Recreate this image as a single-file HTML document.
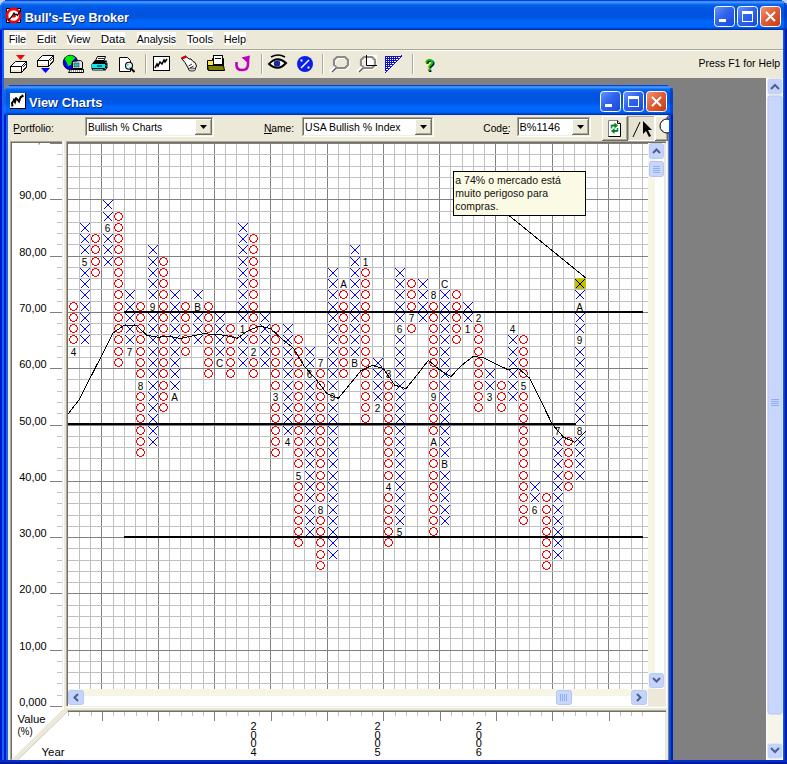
<!DOCTYPE html><html><head><meta charset="utf-8"><style>html,body{margin:0;padding:0;width:787px;height:764px;overflow:hidden;background:#808080}svg text{font-family:"Liberation Sans",sans-serif}</style></head><body><svg width="787" height="764" viewBox="0 0 787 764" style="display:block;font-family:'Liberation Sans',sans-serif"><defs><linearGradient id="gb" x1="0" y1="0" x2="1" y2="1"><stop offset="0" stop-color="#6A96FA"/><stop offset="0.45" stop-color="#2F64EE"/><stop offset="1" stop-color="#1C48D8"/></linearGradient><linearGradient id="gr" x1="0" y1="0" x2="1" y2="1"><stop offset="0" stop-color="#F0987A"/><stop offset="0.45" stop-color="#E0603A"/><stop offset="1" stop-color="#C43A10"/></linearGradient></defs><rect x="0" y="0" width="787" height="764" fill="#808080"/><rect x="0" y="0" width="787" height="1" fill="#0841D8"/><rect x="0" y="1" width="787" height="1" fill="#3A8CFD"/><rect x="0" y="2" width="787" height="1" fill="#3D95FF"/><rect x="0" y="3" width="787" height="1" fill="#1F7BF6"/><rect x="0" y="4" width="787" height="1" fill="#0A68EE"/><rect x="0" y="5" width="787" height="1" fill="#0660E9"/><rect x="0" y="6" width="787" height="1" fill="#045CE6"/><rect x="0" y="7" width="787" height="1" fill="#0058E4"/><rect x="0" y="8" width="787" height="1" fill="#0057E3"/><rect x="0" y="9" width="787" height="1" fill="#0056E2"/><rect x="0" y="10" width="787" height="1" fill="#0055E1"/><rect x="0" y="11" width="787" height="1" fill="#0054E0"/><rect x="0" y="12" width="787" height="1" fill="#0054E0"/><rect x="0" y="13" width="787" height="1" fill="#0054E0"/><rect x="0" y="14" width="787" height="1" fill="#0054E0"/><rect x="0" y="15" width="787" height="1" fill="#0054E0"/><rect x="0" y="16" width="787" height="1" fill="#0055E1"/><rect x="0" y="17" width="787" height="1" fill="#0056E3"/><rect x="0" y="18" width="787" height="1" fill="#0058E6"/><rect x="0" y="19" width="787" height="1" fill="#005EEE"/><rect x="0" y="20" width="787" height="1" fill="#0062F4"/><rect x="0" y="21" width="787" height="1" fill="#0065F9"/><rect x="0" y="22" width="787" height="1" fill="#0066FB"/><rect x="0" y="23" width="787" height="1" fill="#0066FB"/><rect x="0" y="24" width="787" height="1" fill="#0066FB"/><rect x="0" y="25" width="787" height="1" fill="#0066FB"/><rect x="0" y="26" width="787" height="1" fill="#0064F8"/><rect x="0" y="27" width="787" height="1" fill="#005CEF"/><rect x="0" y="28" width="787" height="1" fill="#0048D4"/><rect x="0" y="29" width="787" height="1" fill="#0033B0"/><rect x="0" y="0" width="5" height="1" fill="#C4D2F0"/><rect x="782" y="0" width="5" height="1" fill="#C4D2F0"/><rect x="0" y="1" width="3" height="1" fill="#C4D2F0"/><rect x="784" y="1" width="3" height="1" fill="#C4D2F0"/><rect x="0" y="2" width="2" height="1" fill="#C4D2F0"/><rect x="785" y="2" width="2" height="1" fill="#C4D2F0"/><rect x="0" y="3" width="1" height="1" fill="#C4D2F0"/><rect x="786" y="3" width="1" height="1" fill="#C4D2F0"/><rect x="0" y="4" width="1" height="1" fill="#C4D2F0"/><rect x="786" y="4" width="1" height="1" fill="#C4D2F0"/><rect x="784" y="3" width="3" height="27" fill="#0033C0" opacity="0.55"/><rect x="0" y="3" width="2" height="27" fill="#3A8CFD" opacity="0.25"/><rect x="0" y="30" width="4" height="734" fill="#0019CF"/><rect x="2" y="30" width="2" height="734" fill="#1665F0"/><rect x="783" y="30" width="4" height="734" fill="#001EA0"/><rect x="783" y="30" width="1" height="734" fill="#0A5AF0"/><rect x="784" y="30" width="1" height="734" fill="#0040E0"/><rect x="0" y="760" width="787" height="4" fill="#0030C8"/><rect x="0" y="762" width="787" height="2" fill="#0018A0"/><rect x="4" y="30" width="779" height="19" fill="#ECE9D8"/><rect x="4" y="49" width="779" height="1" fill="#ACA899"/><rect x="4" y="50" width="779" height="1" fill="#FFFFFF"/><rect x="9" y="32" width="17" height="13" fill="#FFFFFF"/><text x="8.7" y="43" font-size="11" fill="#000" textLength="17.4" lengthAdjust="spacingAndGlyphs">File</text><rect x="37" y="32" width="19" height="13" fill="#FFFFFF"/><text x="36.7" y="43" font-size="11" fill="#000" textLength="19.4" lengthAdjust="spacingAndGlyphs">Edit</text><rect x="67" y="32" width="23" height="13" fill="#FFFFFF"/><text x="66.7" y="43" font-size="11" fill="#000" textLength="23.4" lengthAdjust="spacingAndGlyphs">View</text><rect x="101" y="32" width="24" height="13" fill="#FFFFFF"/><text x="100.7" y="43" font-size="11" fill="#000" textLength="24.4" lengthAdjust="spacingAndGlyphs">Data</text><rect x="137" y="32" width="39" height="13" fill="#FFFFFF"/><text x="136.7" y="43" font-size="11" fill="#000" textLength="39.4" lengthAdjust="spacingAndGlyphs">Analysis</text><rect x="187" y="32" width="26" height="13" fill="#FFFFFF"/><text x="186.7" y="43" font-size="11" fill="#000" textLength="26.4" lengthAdjust="spacingAndGlyphs">Tools</text><rect x="224" y="32" width="22" height="13" fill="#FFFFFF"/><text x="223.7" y="43" font-size="11" fill="#000" textLength="22.4" lengthAdjust="spacingAndGlyphs">Help</text><rect x="4" y="51" width="779" height="27" fill="#ECE9D8"/><text x="698.4" y="67" font-size="11" fill="#000" textLength="81.7" lengthAdjust="spacingAndGlyphs">Press F1 for Help</text><g><path d="M16 55 L25 55 L20.5 60 Z" fill="#f00"/><path d="M10.5 66.5 L15.5 61.5 L26.5 61.5 L21.5 66.5 Z" fill="#fff" stroke="#000"/><path d="M21.5 66.5 L26.5 61.5 L26.5 67.5 L21.5 72.5 Z" fill="#fff" stroke="#000"/><rect x="10.5" y="66.5" width="11" height="6" fill="#fff" stroke="#000"/><rect x="11" y="70" width="10" height="2" fill="#F2EBC8"/><path d="M23 70 L26 67 M23 67 L26 64" stroke="#000" stroke-width="0.8"/><path d="M37.5 60.5 L42.5 55.5 L53.5 55.5 L48.5 60.5 Z" fill="#fff" stroke="#000"/><path d="M48.5 60.5 L53.5 55.5 L53.5 61.5 L48.5 66.5 Z" fill="#fff" stroke="#000"/><rect x="37.5" y="60.5" width="11" height="6" fill="#fff" stroke="#000"/><rect x="38" y="64" width="10" height="2" fill="#F2EBC8"/><path d="M50 64 L53 61 M50 61 L53 58" stroke="#000" stroke-width="0.8"/><path d="M41 68 L50 68 L45.5 73 Z" fill="#00f"/><circle cx="70.5" cy="62.5" r="7.3" fill="#0000F0" stroke="#000" stroke-width="0.8"/><path d="M64.5 59 L67 56 L72 55.5 L75.5 58 L72 61 L71 65 L68 66 L66.5 62 Z" fill="#00F000"/><path d="M72.5 68.5 L72.5 61.5 L80.5 60.5 L82.5 62 L82.5 68.5 Z" fill="#E8E8E0" stroke="#000" stroke-width="1"/><rect x="74" y="63" width="5" height="4" fill="#30B8C0" stroke="#204040" stroke-width="0.6"/><path d="M68.5 72.5 L70.5 69.5 L83.5 69.5 L83.5 72.5 Z" fill="#fff" stroke="#000" stroke-width="1"/><path d="M71 71 h11" stroke="#000" stroke-width="0.8" stroke-dasharray="1 1"/><path d="M95.5 60.5 L97.5 56.5 L105.5 56.5 L104 60.5 Z" fill="#fff" stroke="#000" stroke-width="1"/><path d="M98 58.5 h6" stroke="#000" stroke-width="0.8"/><path d="M91.5 64.5 L94.5 60.5 L106.5 60.5 L107.5 63.5 L107.5 67.5 L105.5 70.5 L92.5 70.5 L91.5 68.5 Z" fill="#000"/><rect x="92" y="64" width="13" height="4" fill="#10E8F0"/><rect x="97" y="65.5" width="5" height="1" fill="#000"/><rect x="93" y="69" width="10" height="1" fill="#10C8D0"/><path d="M105.5 62 L107 63.5 M105.5 65 L107 66.5 M104.5 68 L106 69" stroke="#10E8F0" stroke-width="1"/><path d="M119.5 57.5 L127.5 57.5 L130.5 60.5 L130.5 71.5 L119.5 71.5 Z" fill="#fff" stroke="#000"/><circle cx="129" cy="65.8" r="3.5" fill="#F4F0EC" stroke="#000" stroke-width="1.1"/><rect x="127" y="64" width="1.6" height="1.6" fill="#00E0F0"/><rect x="129" y="67" width="1.4" height="1.2" fill="#00E0F0"/><path d="M130.5 68 L134.5 72" stroke="#000" stroke-width="2"/><rect x="153.5" y="56.5" width="16" height="14" fill="#fff" stroke="#000"/><path d="M155 68 L157 64 L158 66 L160 62 L162 64 L164 60 L165 62 L167 59" stroke="#000" stroke-width="1.6" fill="none"/><path d="M181.5 58.5 L185.5 56 L189 59 L191 59 L193 61.5 L195 62.5 L196.5 66 L194.5 70 L189.5 70.5 L187.5 67 L185 62.5 Z" fill="#fff" stroke="#000" stroke-width="1"/><path d="M181 57.5 L185.5 55.5 L187 57.5 L182.5 59.5 Z" fill="#E00000"/><path d="M188.5 66 L192 64 M190 68 L193.5 66" stroke="#000" stroke-width="0.8"/><ellipse cx="192" cy="69.5" rx="3.5" ry="1.6" fill="#C8C8C8" stroke="#000" stroke-width="0.7"/><path d="M207.5 60.5 L212.5 60.5 L212.5 58.5 L223.5 58.5 L223.5 69.5 L207.5 69.5 Z" fill="#F8E830" stroke="#000"/><rect x="213.5" y="55.5" width="9" height="9" fill="#fff" stroke="#000"/><rect x="215" y="58" width="6" height="1" fill="#000"/><path d="M207.5 65.5 L223.5 65.5 L224.5 70.5 L208.5 70.5 Z" fill="#808000" stroke="#000"/><path d="M236.5 62 L236.5 65 Q236.5 70 242 70 Q248 70 248 64.5 L248 59.5" stroke="#C000C0" stroke-width="2.6" fill="none"/><path d="M250 55.5 L241.5 57.5 L248.5 63.5 Z" fill="#C000C0"/><path d="M269 64 Q277 55 286 63 Q278 72 269 64 Z" fill="#fff" stroke="#000" stroke-width="2"/><path d="M271 57 Q278 53 285 57" stroke="#000" stroke-width="1.5" fill="none"/><circle cx="277" cy="63.5" r="3.2" fill="#1A2A9A"/><circle cx="305" cy="64" r="8" fill="#0A1EE8"/><path d="M301 68 L309 60" stroke="#fff" stroke-width="1.5"/><rect x="300.5" y="59.5" width="2" height="2" fill="#fff"/><rect x="307.5" y="66.5" width="2" height="2" fill="#fff"/><path d="M338 58 L346 58 L349 61 L349 66 L346 69 L338 69 L335 66 L335 61 Z" fill="none" stroke="#fff" stroke-width="2.2"/><path d="M337 57 L345 57 L348 60 L348 65 L345 68 L337 68 L334 65 L334 60 Z" fill="none" stroke="#8A8A8A" stroke-width="2.2"/><path d="M335 67 L330 72" stroke="#fff" stroke-width="2.5"/><path d="M336 68 L332 72" stroke="#555" stroke-width="1.2"/><rect x="367" y="55" width="10" height="11" fill="#fff"/><path d="M365 58 L373 58 L376 61 L376 66 L373 69 L365 69 L362 66 L362 61 Z" fill="none" stroke="#fff" stroke-width="2.2"/><path d="M364 57 L372 57 L375 60 L375 65 L372 68 L364 68 L361 65 L361 60 Z" fill="none" stroke="#8A8A8A" stroke-width="2.2"/><path d="M362 67 L357 72" stroke="#fff" stroke-width="2.5"/><path d="M363 68 L359 72" stroke="#555" stroke-width="1.2"/><path d="M366.5 55 V65.5 H377" stroke="#000" stroke-width="1" fill="none"/><path d="M385 56 L402 56 L387 71 L385 71 Z" fill="#fff"/><path d="M385 56v15M385 56h17M387 56v13M385 58h15M389 56v11M385 60h13M391 56v9M385 62h11M393 56v7M385 64h9M395 56v5M385 66h7M397 56v3M385 68h5M399 56v1M385 70h3M401 56v-1M385 72h1" stroke="#1010C0" stroke-width="1" shape-rendering="crispEdges"/><path d="M402 56 L386 72" stroke="#1010C0" stroke-width="1"/><text x="430.5" y="72" font-size="16" font-weight="bold" fill="#000" text-anchor="middle">?</text><text x="429.5" y="71" font-size="16" font-weight="bold" fill="#00C000" text-anchor="middle">?</text></g><rect x="145" y="54" width="1" height="20" fill="#ACA899"/><rect x="146" y="54" width="1" height="20" fill="#FFFFFF"/><rect x="261" y="54" width="1" height="20" fill="#ACA899"/><rect x="262" y="54" width="1" height="20" fill="#FFFFFF"/><rect x="322" y="54" width="1" height="20" fill="#ACA899"/><rect x="323" y="54" width="1" height="20" fill="#FFFFFF"/><rect x="412" y="54" width="1" height="20" fill="#ACA899"/><rect x="413" y="54" width="1" height="20" fill="#FFFFFF"/><rect x="4" y="78" width="762" height="682" fill="#808080"/><rect x="766" y="78" width="17" height="682" fill="#FFFFFF"/><rect x="767" y="78" width="15" height="682" fill="#F7F5EA"/><rect x="768" y="79" width="14" height="15" rx="2" fill="#C3D3FD" stroke="#B6CAF7" stroke-width="0.5"/><path d="M771 89 L775 85 L779 89" stroke="#4D6185" stroke-width="2" fill="none"/><rect x="768" y="96" width="14" height="618" rx="2" fill="#C8D6FB" stroke="#B2C6F6" stroke-width="1"/><rect x="771" y="399" width="8" height="1" fill="#8FAEF5"/><rect x="771" y="401" width="8" height="1" fill="#8FAEF5"/><rect x="771" y="403" width="8" height="1" fill="#8FAEF5"/><rect x="771" y="405" width="8" height="1" fill="#8FAEF5"/><rect x="768" y="744" width="14" height="14" rx="2" fill="#C3D3FD" stroke="#B6CAF7" stroke-width="0.5"/><path d="M771 748 L775 752 L779 748" stroke="#4D6185" stroke-width="2" fill="none"/><rect x="4" y="85" width="669" height="1" fill="#0841D8"/><rect x="4" y="86" width="669" height="1" fill="#3A8CFD"/><rect x="4" y="87" width="669" height="1" fill="#3D95FF"/><rect x="4" y="88" width="669" height="1" fill="#1F7BF6"/><rect x="4" y="89" width="669" height="1" fill="#0A68EE"/><rect x="4" y="90" width="669" height="1" fill="#0660E9"/><rect x="4" y="91" width="669" height="1" fill="#045CE6"/><rect x="4" y="92" width="669" height="1" fill="#0058E4"/><rect x="4" y="93" width="669" height="1" fill="#0057E3"/><rect x="4" y="94" width="669" height="1" fill="#0056E2"/><rect x="4" y="95" width="669" height="1" fill="#0055E1"/><rect x="4" y="96" width="669" height="1" fill="#0054E0"/><rect x="4" y="97" width="669" height="1" fill="#0054E0"/><rect x="4" y="98" width="669" height="1" fill="#0054E0"/><rect x="4" y="99" width="669" height="1" fill="#0054E0"/><rect x="4" y="100" width="669" height="1" fill="#0054E0"/><rect x="4" y="101" width="669" height="1" fill="#0055E1"/><rect x="4" y="102" width="669" height="1" fill="#0056E3"/><rect x="4" y="103" width="669" height="1" fill="#0058E6"/><rect x="4" y="104" width="669" height="1" fill="#005EEE"/><rect x="4" y="105" width="669" height="1" fill="#0062F4"/><rect x="4" y="106" width="669" height="1" fill="#0065F9"/><rect x="4" y="107" width="669" height="1" fill="#0066FB"/><rect x="4" y="108" width="669" height="1" fill="#0066FB"/><rect x="4" y="109" width="669" height="1" fill="#0066FB"/><rect x="4" y="110" width="669" height="1" fill="#0066FB"/><rect x="4" y="111" width="669" height="1" fill="#0064F8"/><rect x="4" y="112" width="669" height="1" fill="#005CEF"/><rect x="4" y="113" width="669" height="1" fill="#0048D4"/><rect x="4" y="114" width="669" height="1" fill="#0033B0"/><rect x="4" y="85" width="5" height="1" fill="#808080"/><rect x="668" y="85" width="5" height="1" fill="#808080"/><rect x="4" y="86" width="3" height="1" fill="#808080"/><rect x="670" y="86" width="3" height="1" fill="#808080"/><rect x="4" y="87" width="2" height="1" fill="#808080"/><rect x="671" y="87" width="2" height="1" fill="#808080"/><rect x="4" y="88" width="1" height="1" fill="#808080"/><rect x="672" y="88" width="1" height="1" fill="#808080"/><rect x="4" y="89" width="1" height="1" fill="#808080"/><rect x="672" y="89" width="1" height="1" fill="#808080"/><rect x="670" y="88" width="3" height="27" fill="#0033C0" opacity="0.55"/><rect x="4" y="88" width="2" height="27" fill="#3A8CFD" opacity="0.25"/><rect x="4" y="115" width="4" height="645" fill="#0019CF"/><rect x="6" y="115" width="2" height="645" fill="#1665F0"/><rect x="669" y="115" width="4" height="645" fill="#0020B0"/><rect x="669" y="115" width="2" height="645" fill="#0050F0"/><rect x="8" y="115" width="660" height="645" fill="#ECE9D8"/><rect x="10" y="93" width="16" height="16" fill="#000"/><rect x="10" y="93" width="15" height="15" fill="#FFFFFF"/><path d="M12.5 106.5 L12 103 L13.5 101 L14 100 L15 102 L16 98.5 L17.5 99.5 L19 101.5 L20.5 97.5 L21.5 96.5 L23.5 96" stroke="#000" stroke-width="2" fill="none"/><path d="M14 99 v2 M16.5 97.5 v2 M20.5 96 v2 M22.5 94.5 v2.5" stroke="#000" stroke-width="1.2"/><text x="29.9" y="108" font-size="13" fill="#0A246A" font-weight="bold" textLength="73.2" lengthAdjust="spacingAndGlyphs">View Charts</text><text x="29.1" y="107" font-size="13" fill="#fff" font-weight="bold" textLength="73.2" lengthAdjust="spacingAndGlyphs">View Charts</text><rect x="600.5" y="91.5" width="20" height="20" rx="3" fill="url(#gb)" stroke="#fff" stroke-width="1"/><rect x="605" y="104" width="7" height="3" fill="#fff"/><rect x="623.5" y="91.5" width="20" height="20" rx="3" fill="url(#gb)" stroke="#fff" stroke-width="1"/><rect x="628.5" y="96.5" width="10" height="10" fill="none" stroke="#fff" stroke-width="1"/><rect x="628" y="96" width="11" height="3" fill="#fff"/><rect x="646.5" y="91.5" width="20" height="20" rx="3" fill="url(#gr)" stroke="#fff" stroke-width="1"/><path d="M652 97 L661 106 M661 97 L652 106" stroke="#fff" stroke-width="2"/><rect x="6" y="8" width="15" height="15" fill="#000"/><rect x="7" y="9" width="13" height="13" fill="#fff"/><circle cx="13.6" cy="15.5" r="6.6" fill="#fff" stroke="#f00" stroke-width="2.6"/><path d="M12 15.5 L15 14 L16 17 L12.5 18 Z" fill="#f00"/><path d="M8 21 L11.5 17 L13 14.5 L14 13 L15 15 L16 14 L17.5 15.5 L20.5 10" stroke="#000" stroke-width="1.2" fill="none"/><text x="25.6" y="23" font-size="13" fill="#0A246A" font-weight="bold" textLength="104.0" lengthAdjust="spacingAndGlyphs">Bull's-Eye Broker</text><text x="24.8" y="22" font-size="13" fill="#fff" font-weight="bold" textLength="104.1" lengthAdjust="spacingAndGlyphs">Bull's-Eye Broker</text><rect x="714.5" y="6.5" width="20" height="20" rx="3" fill="url(#gb)" stroke="#fff" stroke-width="1"/><rect x="719" y="19" width="7" height="3" fill="#fff"/><rect x="737.5" y="6.5" width="20" height="20" rx="3" fill="url(#gb)" stroke="#fff" stroke-width="1"/><rect x="742.5" y="11.5" width="10" height="10" fill="none" stroke="#fff" stroke-width="1"/><rect x="742" y="11" width="11" height="3" fill="#fff"/><rect x="760.5" y="6.5" width="20" height="20" rx="3" fill="url(#gr)" stroke="#fff" stroke-width="1"/><path d="M766 12 L775 21 M775 12 L766 21" stroke="#fff" stroke-width="2"/><text x="13.1" y="132" font-size="11" fill="#000" textLength="40.9" lengthAdjust="spacingAndGlyphs">Portfolio:</text><rect x="14" y="133" width="7" height="1" fill="#000"/><rect x="85" y="117" width="129" height="1" fill="#ACA899"/><rect x="85" y="117" width="1" height="20" fill="#ACA899"/><rect x="86" y="118" width="127" height="1" fill="#716F64"/><rect x="86" y="118" width="1" height="18" fill="#716F64"/><rect x="85" y="136" width="129" height="1" fill="#FFFFFF"/><rect x="213" y="117" width="1" height="20" fill="#FFFFFF"/><rect x="86" y="135" width="127" height="1" fill="#F1EFE2"/><rect x="212" y="118" width="1" height="18" fill="#F1EFE2"/><rect x="87" y="119" width="125" height="16" fill="#FFFFFF"/><text x="87.9" y="131" font-size="11" fill="#000" textLength="74.3" lengthAdjust="spacingAndGlyphs">Bullish % Charts</text><rect x="195" y="119" width="17" height="16" fill="#ECE9D8"/><rect x="195" y="119" width="17" height="1" fill="#FFFFFF"/><rect x="195" y="119" width="1" height="16" fill="#FFFFFF"/><rect x="195" y="134" width="17" height="1" fill="#716F64"/><rect x="211" y="119" width="1" height="16" fill="#716F64"/><rect x="196" y="133" width="15" height="1" fill="#ACA899"/><rect x="210" y="120" width="1" height="14" fill="#ACA899"/><path d="M200 125 L207 125 L203.5 129 Z" fill="#000"/><text x="263.9" y="132" font-size="11" fill="#000" textLength="30.2" lengthAdjust="spacingAndGlyphs">Name:</text><rect x="264" y="133" width="8" height="1" fill="#000"/><rect x="302" y="117" width="132" height="1" fill="#ACA899"/><rect x="302" y="117" width="1" height="20" fill="#ACA899"/><rect x="303" y="118" width="130" height="1" fill="#716F64"/><rect x="303" y="118" width="1" height="18" fill="#716F64"/><rect x="302" y="136" width="132" height="1" fill="#FFFFFF"/><rect x="433" y="117" width="1" height="20" fill="#FFFFFF"/><rect x="303" y="135" width="130" height="1" fill="#F1EFE2"/><rect x="432" y="118" width="1" height="18" fill="#F1EFE2"/><rect x="304" y="119" width="128" height="16" fill="#FFFFFF"/><text x="305.1" y="131" font-size="11" fill="#000" textLength="95.5" lengthAdjust="spacingAndGlyphs">USA Bullish % Index</text><rect x="415" y="119" width="17" height="16" fill="#ECE9D8"/><rect x="415" y="119" width="17" height="1" fill="#FFFFFF"/><rect x="415" y="119" width="1" height="16" fill="#FFFFFF"/><rect x="415" y="134" width="17" height="1" fill="#716F64"/><rect x="431" y="119" width="1" height="16" fill="#716F64"/><rect x="416" y="133" width="15" height="1" fill="#ACA899"/><rect x="430" y="120" width="1" height="14" fill="#ACA899"/><path d="M420 125 L427 125 L423.5 129 Z" fill="#000"/><text x="483.3" y="132" font-size="11" fill="#000" textLength="27.3" lengthAdjust="spacingAndGlyphs">Code:</text><rect x="503" y="133" width="6" height="1" fill="#000"/><rect x="517" y="117" width="74" height="1" fill="#ACA899"/><rect x="517" y="117" width="1" height="20" fill="#ACA899"/><rect x="518" y="118" width="72" height="1" fill="#716F64"/><rect x="518" y="118" width="1" height="18" fill="#716F64"/><rect x="517" y="136" width="74" height="1" fill="#FFFFFF"/><rect x="590" y="117" width="1" height="20" fill="#FFFFFF"/><rect x="518" y="135" width="72" height="1" fill="#F1EFE2"/><rect x="589" y="118" width="1" height="18" fill="#F1EFE2"/><rect x="519" y="119" width="70" height="16" fill="#FFFFFF"/><text x="519.5" y="131" font-size="11" fill="#000" textLength="40.6" lengthAdjust="spacingAndGlyphs">B%1146</text><rect x="572" y="119" width="17" height="16" fill="#ECE9D8"/><rect x="572" y="119" width="17" height="1" fill="#FFFFFF"/><rect x="572" y="119" width="1" height="16" fill="#FFFFFF"/><rect x="572" y="134" width="17" height="1" fill="#716F64"/><rect x="588" y="119" width="1" height="16" fill="#716F64"/><rect x="573" y="133" width="15" height="1" fill="#ACA899"/><rect x="587" y="120" width="1" height="14" fill="#ACA899"/><path d="M577 125 L584 125 L580.5 129 Z" fill="#000"/><rect x="602" y="116" width="26" height="25" fill="#ECE9D8"/><rect x="602" y="116" width="26" height="1" fill="#FFFFFF"/><rect x="602" y="116" width="1" height="25" fill="#FFFFFF"/><rect x="602" y="140" width="26" height="1" fill="#716F64"/><rect x="627" y="116" width="1" height="25" fill="#716F64"/><rect x="603" y="139" width="24" height="1" fill="#ACA899"/><rect x="626" y="117" width="1" height="23" fill="#ACA899"/><path d="M608.5 136.5 L608.5 120.5 L617.5 120.5 L620.5 123.5 L620.5 136.5 Z" fill="#fff" stroke="#808080"/><path d="M620.5 123.5 L620.5 136.5 L608.5 136.5" stroke="#000" fill="none"/><path d="M617.5 120.5 L617.5 123.5 L620.5 123.5" stroke="#000" fill="none"/><path d="M611.5 128.5 V125.5 H615" stroke="#10808A" stroke-width="1.6" fill="none"/><path d="M614.5 122.5 L618 125.5 L614.5 128.5 Z" fill="#008800"/><rect x="612" y="124.6" width="3" height="1.8" fill="#008800"/><path d="M617.5 128 V131 H614" stroke="#10808A" stroke-width="1.6" fill="none"/><path d="M614.5 128 L611 131 L614.5 134 Z" fill="#008800"/><rect x="614" y="130.1" width="3" height="1.8" fill="#008800"/><rect x="628" y="116" width="27" height="25" fill="#E6E3D3"/><rect x="628" y="116" width="27" height="1" fill="#ACA899"/><rect x="628" y="116" width="1" height="25" fill="#ACA899"/><rect x="628" y="140" width="27" height="1" fill="#fff"/><rect x="654" y="116" width="1" height="25" fill="#fff"/><path d="M633 137 L640 122" stroke="#000" stroke-width="1"/><path d="M643 121 L643 134 L646 131 L649 137 L651 136 L648 130 L652 130 Z" fill="#000"/><rect x="655" y="116" width="13" height="25" fill="#ECE9D8"/><rect x="655" y="116" width="13" height="1" fill="#FFFFFF"/><rect x="655" y="116" width="1" height="25" fill="#FFFFFF"/><rect x="655" y="140" width="13" height="1" fill="#716F64"/><rect x="667" y="116" width="1" height="25" fill="#716F64"/><rect x="656" y="139" width="11" height="1" fill="#ACA899"/><rect x="666" y="117" width="1" height="23" fill="#ACA899"/><clipPath id="cbtn"><rect x="655" y="115" width="14" height="30"/></clipPath><circle cx="667" cy="126" r="7" fill="#fff" stroke="#000" clip-path="url(#cbtn)"/><rect x="669" y="115" width="4" height="30" fill="#0050F0"/><rect x="671" y="115" width="2" height="30" fill="#0020B0"/><rect x="10" y="141" width="52" height="619" fill="#FFFFFF"/><rect x="10" y="141" width="52" height="1" fill="#ACA899"/><rect x="10" y="141" width="1" height="619" fill="#ACA899"/><rect x="11" y="142" width="51" height="1" fill="#716F64"/><rect x="11" y="142" width="1" height="618" fill="#716F64"/><rect x="62" y="141" width="1" height="569" fill="#F1EFE2"/><rect x="63" y="141" width="1" height="569" fill="#FFFFFF"/><rect x="12" y="712" width="653" height="48" fill="#FFFFFF"/><rect x="66" y="710" width="600" height="1" fill="#ACA899"/><rect x="67" y="711" width="599" height="1" fill="#716F64"/><rect x="66" y="141" width="601" height="1" fill="#ACA899"/><rect x="66" y="141" width="1" height="565" fill="#ACA899"/><rect x="67" y="142" width="600" height="1" fill="#716F64"/><rect x="67" y="142" width="1" height="564" fill="#716F64"/><rect x="64" y="706" width="4" height="4" fill="#ECE9D8"/><rect x="666" y="141" width="1" height="567" fill="#FFFFFF"/><rect x="66" y="706" width="600" height="1" fill="#F1EFE2"/><rect x="66" y="707" width="601" height="1" fill="#FFFFFF"/><rect x="665" y="143" width="1" height="563" fill="#F1EFE2"/><polygon points="62,710 68,710 17,760 11,760" fill="#ECE9D8"/><path d="M68 711 L17.5 760" stroke="#C9C5B2" stroke-width="1"/><rect x="68" y="143" width="580" height="546" fill="#FFFFFF"/><g><rect x="79" y="143" width="1" height="546" fill="#C0C0C0"/><rect x="90" y="143" width="1" height="546" fill="#C0C0C0"/><rect x="101" y="143" width="1" height="546" fill="#808080"/><rect x="113" y="143" width="1" height="546" fill="#C0C0C0"/><rect x="124" y="143" width="1" height="546" fill="#C0C0C0"/><rect x="135" y="143" width="1" height="546" fill="#C0C0C0"/><rect x="146" y="143" width="1" height="546" fill="#C0C0C0"/><rect x="158" y="143" width="1" height="546" fill="#808080"/><rect x="169" y="143" width="1" height="546" fill="#C0C0C0"/><rect x="180" y="143" width="1" height="546" fill="#C0C0C0"/><rect x="191" y="143" width="1" height="546" fill="#C0C0C0"/><rect x="203" y="143" width="1" height="546" fill="#C0C0C0"/><rect x="214" y="143" width="1" height="546" fill="#808080"/><rect x="225" y="143" width="1" height="546" fill="#C0C0C0"/><rect x="236" y="143" width="1" height="546" fill="#C0C0C0"/><rect x="248" y="143" width="1" height="546" fill="#C0C0C0"/><rect x="259" y="143" width="1" height="546" fill="#C0C0C0"/><rect x="270" y="143" width="1" height="546" fill="#808080"/><rect x="282" y="143" width="1" height="546" fill="#C0C0C0"/><rect x="293" y="143" width="1" height="546" fill="#C0C0C0"/><rect x="304" y="143" width="1" height="546" fill="#C0C0C0"/><rect x="315" y="143" width="1" height="546" fill="#C0C0C0"/><rect x="327" y="143" width="1" height="546" fill="#808080"/><rect x="338" y="143" width="1" height="546" fill="#C0C0C0"/><rect x="349" y="143" width="1" height="546" fill="#C0C0C0"/><rect x="360" y="143" width="1" height="546" fill="#C0C0C0"/><rect x="372" y="143" width="1" height="546" fill="#C0C0C0"/><rect x="383" y="143" width="1" height="546" fill="#808080"/><rect x="394" y="143" width="1" height="546" fill="#C0C0C0"/><rect x="405" y="143" width="1" height="546" fill="#C0C0C0"/><rect x="417" y="143" width="1" height="546" fill="#C0C0C0"/><rect x="428" y="143" width="1" height="546" fill="#C0C0C0"/><rect x="439" y="143" width="1" height="546" fill="#808080"/><rect x="450" y="143" width="1" height="546" fill="#C0C0C0"/><rect x="462" y="143" width="1" height="546" fill="#C0C0C0"/><rect x="473" y="143" width="1" height="546" fill="#C0C0C0"/><rect x="484" y="143" width="1" height="546" fill="#C0C0C0"/><rect x="495" y="143" width="1" height="546" fill="#808080"/><rect x="507" y="143" width="1" height="546" fill="#C0C0C0"/><rect x="518" y="143" width="1" height="546" fill="#C0C0C0"/><rect x="529" y="143" width="1" height="546" fill="#C0C0C0"/><rect x="540" y="143" width="1" height="546" fill="#C0C0C0"/><rect x="552" y="143" width="1" height="546" fill="#808080"/><rect x="563" y="143" width="1" height="546" fill="#C0C0C0"/><rect x="574" y="143" width="1" height="546" fill="#C0C0C0"/><rect x="585" y="143" width="1" height="546" fill="#C0C0C0"/><rect x="597" y="143" width="1" height="546" fill="#C0C0C0"/><rect x="608" y="143" width="1" height="546" fill="#808080"/><rect x="619" y="143" width="1" height="546" fill="#C0C0C0"/><rect x="631" y="143" width="1" height="546" fill="#C0C0C0"/><rect x="642" y="143" width="1" height="546" fill="#C0C0C0"/><rect x="68" y="143" width="580" height="1" fill="#808080"/><rect x="68" y="154" width="580" height="1" fill="#C0C0C0"/><rect x="68" y="166" width="580" height="1" fill="#C0C0C0"/><rect x="68" y="177" width="580" height="1" fill="#C0C0C0"/><rect x="68" y="188" width="580" height="1" fill="#C0C0C0"/><rect x="68" y="199" width="580" height="1" fill="#808080"/><rect x="68" y="211" width="580" height="1" fill="#C0C0C0"/><rect x="68" y="222" width="580" height="1" fill="#C0C0C0"/><rect x="68" y="233" width="580" height="1" fill="#C0C0C0"/><rect x="68" y="244" width="580" height="1" fill="#C0C0C0"/><rect x="68" y="256" width="580" height="1" fill="#808080"/><rect x="68" y="267" width="580" height="1" fill="#C0C0C0"/><rect x="68" y="278" width="580" height="1" fill="#C0C0C0"/><rect x="68" y="289" width="580" height="1" fill="#C0C0C0"/><rect x="68" y="301" width="580" height="1" fill="#C0C0C0"/><rect x="68" y="312" width="580" height="1" fill="#808080"/><rect x="68" y="323" width="580" height="1" fill="#C0C0C0"/><rect x="68" y="334" width="580" height="1" fill="#C0C0C0"/><rect x="68" y="346" width="580" height="1" fill="#C0C0C0"/><rect x="68" y="357" width="580" height="1" fill="#C0C0C0"/><rect x="68" y="368" width="580" height="1" fill="#808080"/><rect x="68" y="379" width="580" height="1" fill="#C0C0C0"/><rect x="68" y="391" width="580" height="1" fill="#C0C0C0"/><rect x="68" y="402" width="580" height="1" fill="#C0C0C0"/><rect x="68" y="413" width="580" height="1" fill="#C0C0C0"/><rect x="68" y="425" width="580" height="1" fill="#808080"/><rect x="68" y="436" width="580" height="1" fill="#C0C0C0"/><rect x="68" y="447" width="580" height="1" fill="#C0C0C0"/><rect x="68" y="458" width="580" height="1" fill="#C0C0C0"/><rect x="68" y="470" width="580" height="1" fill="#C0C0C0"/><rect x="68" y="481" width="580" height="1" fill="#808080"/><rect x="68" y="492" width="580" height="1" fill="#C0C0C0"/><rect x="68" y="503" width="580" height="1" fill="#C0C0C0"/><rect x="68" y="515" width="580" height="1" fill="#C0C0C0"/><rect x="68" y="526" width="580" height="1" fill="#C0C0C0"/><rect x="68" y="537" width="580" height="1" fill="#808080"/><rect x="68" y="548" width="580" height="1" fill="#C0C0C0"/><rect x="68" y="560" width="580" height="1" fill="#C0C0C0"/><rect x="68" y="571" width="580" height="1" fill="#C0C0C0"/><rect x="68" y="582" width="580" height="1" fill="#C0C0C0"/><rect x="68" y="593" width="580" height="1" fill="#808080"/><rect x="68" y="605" width="580" height="1" fill="#C0C0C0"/><rect x="68" y="616" width="580" height="1" fill="#C0C0C0"/><rect x="68" y="627" width="580" height="1" fill="#C0C0C0"/><rect x="68" y="638" width="580" height="1" fill="#C0C0C0"/><rect x="68" y="650" width="580" height="1" fill="#808080"/><rect x="68" y="661" width="580" height="1" fill="#C0C0C0"/><rect x="68" y="672" width="580" height="1" fill="#C0C0C0"/><rect x="68" y="683" width="580" height="1" fill="#C0C0C0"/></g><defs><clipPath id="cy"><rect x="12" y="143" width="50" height="617"/></clipPath><clipPath id="cc"><rect x="68" y="143" width="580" height="546"/></clipPath></defs><g clip-path="url(#cc)"><path d="M80 335h1v1h-1zM89 335h1v1h-1zM81 336h1v1h-1zM88 336h1v1h-1zM82 337h1v1h-1zM87 337h1v1h-1zM83 338h1v1h-1zM86 338h1v1h-1zM84 339h2v1h-2zM84 340h2v1h-2zM83 341h1v1h-1zM86 341h1v1h-1zM82 342h1v1h-1zM87 342h1v1h-1zM81 343h1v1h-1zM88 343h1v1h-1zM80 324h1v1h-1zM89 324h1v1h-1zM81 325h1v1h-1zM88 325h1v1h-1zM82 326h1v1h-1zM87 326h1v1h-1zM83 327h1v1h-1zM86 327h1v1h-1zM84 328h2v1h-2zM84 329h2v1h-2zM83 330h1v1h-1zM86 330h1v1h-1zM82 331h1v1h-1zM87 331h1v1h-1zM81 332h1v1h-1zM88 332h1v1h-1zM80 313h1v1h-1zM89 313h1v1h-1zM81 314h1v1h-1zM88 314h1v1h-1zM82 315h1v1h-1zM87 315h1v1h-1zM83 316h1v1h-1zM86 316h1v1h-1zM84 317h2v1h-2zM84 318h2v1h-2zM83 319h1v1h-1zM86 319h1v1h-1zM82 320h1v1h-1zM87 320h1v1h-1zM81 321h1v1h-1zM88 321h1v1h-1zM80 302h1v1h-1zM89 302h1v1h-1zM81 303h1v1h-1zM88 303h1v1h-1zM82 304h1v1h-1zM87 304h1v1h-1zM83 305h1v1h-1zM86 305h1v1h-1zM84 306h2v1h-2zM84 307h2v1h-2zM83 308h1v1h-1zM86 308h1v1h-1zM82 309h1v1h-1zM87 309h1v1h-1zM81 310h1v1h-1zM88 310h1v1h-1zM80 290h1v1h-1zM89 290h1v1h-1zM81 291h1v1h-1zM88 291h1v1h-1zM82 292h1v1h-1zM87 292h1v1h-1zM83 293h1v1h-1zM86 293h1v1h-1zM84 294h2v1h-2zM84 295h2v1h-2zM83 296h1v1h-1zM86 296h1v1h-1zM82 297h1v1h-1zM87 297h1v1h-1zM81 298h1v1h-1zM88 298h1v1h-1zM80 279h1v1h-1zM89 279h1v1h-1zM81 280h1v1h-1zM88 280h1v1h-1zM82 281h1v1h-1zM87 281h1v1h-1zM83 282h1v1h-1zM86 282h1v1h-1zM84 283h2v1h-2zM84 284h2v1h-2zM83 285h1v1h-1zM86 285h1v1h-1zM82 286h1v1h-1zM87 286h1v1h-1zM81 287h1v1h-1zM88 287h1v1h-1zM80 268h1v1h-1zM89 268h1v1h-1zM81 269h1v1h-1zM88 269h1v1h-1zM82 270h1v1h-1zM87 270h1v1h-1zM83 271h1v1h-1zM86 271h1v1h-1zM84 272h2v1h-2zM84 273h2v1h-2zM83 274h1v1h-1zM86 274h1v1h-1zM82 275h1v1h-1zM87 275h1v1h-1zM81 276h1v1h-1zM88 276h1v1h-1zM80 245h1v1h-1zM89 245h1v1h-1zM81 246h1v1h-1zM88 246h1v1h-1zM82 247h1v1h-1zM87 247h1v1h-1zM83 248h1v1h-1zM86 248h1v1h-1zM84 249h2v1h-2zM84 250h2v1h-2zM83 251h1v1h-1zM86 251h1v1h-1zM82 252h1v1h-1zM87 252h1v1h-1zM81 253h1v1h-1zM88 253h1v1h-1zM80 234h1v1h-1zM89 234h1v1h-1zM81 235h1v1h-1zM88 235h1v1h-1zM82 236h1v1h-1zM87 236h1v1h-1zM83 237h1v1h-1zM86 237h1v1h-1zM84 238h2v1h-2zM84 239h2v1h-2zM83 240h1v1h-1zM86 240h1v1h-1zM82 241h1v1h-1zM87 241h1v1h-1zM81 242h1v1h-1zM88 242h1v1h-1zM80 223h1v1h-1zM89 223h1v1h-1zM81 224h1v1h-1zM88 224h1v1h-1zM82 225h1v1h-1zM87 225h1v1h-1zM83 226h1v1h-1zM86 226h1v1h-1zM84 227h2v1h-2zM84 228h2v1h-2zM83 229h1v1h-1zM86 229h1v1h-1zM82 230h1v1h-1zM87 230h1v1h-1zM81 231h1v1h-1zM88 231h1v1h-1zM103 257h1v1h-1zM112 257h1v1h-1zM104 258h1v1h-1zM111 258h1v1h-1zM105 259h1v1h-1zM110 259h1v1h-1zM106 260h1v1h-1zM109 260h1v1h-1zM107 261h2v1h-2zM107 262h2v1h-2zM106 263h1v1h-1zM109 263h1v1h-1zM105 264h1v1h-1zM110 264h1v1h-1zM104 265h1v1h-1zM111 265h1v1h-1zM103 245h1v1h-1zM112 245h1v1h-1zM104 246h1v1h-1zM111 246h1v1h-1zM105 247h1v1h-1zM110 247h1v1h-1zM106 248h1v1h-1zM109 248h1v1h-1zM107 249h2v1h-2zM107 250h2v1h-2zM106 251h1v1h-1zM109 251h1v1h-1zM105 252h1v1h-1zM110 252h1v1h-1zM104 253h1v1h-1zM111 253h1v1h-1zM103 234h1v1h-1zM112 234h1v1h-1zM104 235h1v1h-1zM111 235h1v1h-1zM105 236h1v1h-1zM110 236h1v1h-1zM106 237h1v1h-1zM109 237h1v1h-1zM107 238h2v1h-2zM107 239h2v1h-2zM106 240h1v1h-1zM109 240h1v1h-1zM105 241h1v1h-1zM110 241h1v1h-1zM104 242h1v1h-1zM111 242h1v1h-1zM103 212h1v1h-1zM112 212h1v1h-1zM104 213h1v1h-1zM111 213h1v1h-1zM105 214h1v1h-1zM110 214h1v1h-1zM106 215h1v1h-1zM109 215h1v1h-1zM107 216h2v1h-2zM107 217h2v1h-2zM106 218h1v1h-1zM109 218h1v1h-1zM105 219h1v1h-1zM110 219h1v1h-1zM104 220h1v1h-1zM111 220h1v1h-1zM103 200h1v1h-1zM112 200h1v1h-1zM104 201h1v1h-1zM111 201h1v1h-1zM105 202h1v1h-1zM110 202h1v1h-1zM106 203h1v1h-1zM109 203h1v1h-1zM107 204h2v1h-2zM107 205h2v1h-2zM106 206h1v1h-1zM109 206h1v1h-1zM105 207h1v1h-1zM110 207h1v1h-1zM104 208h1v1h-1zM111 208h1v1h-1zM125 335h1v1h-1zM134 335h1v1h-1zM126 336h1v1h-1zM133 336h1v1h-1zM127 337h1v1h-1zM132 337h1v1h-1zM128 338h1v1h-1zM131 338h1v1h-1zM129 339h2v1h-2zM129 340h2v1h-2zM128 341h1v1h-1zM131 341h1v1h-1zM127 342h1v1h-1zM132 342h1v1h-1zM126 343h1v1h-1zM133 343h1v1h-1zM125 324h1v1h-1zM134 324h1v1h-1zM126 325h1v1h-1zM133 325h1v1h-1zM127 326h1v1h-1zM132 326h1v1h-1zM128 327h1v1h-1zM131 327h1v1h-1zM129 328h2v1h-2zM129 329h2v1h-2zM128 330h1v1h-1zM131 330h1v1h-1zM127 331h1v1h-1zM132 331h1v1h-1zM126 332h1v1h-1zM133 332h1v1h-1zM125 313h1v1h-1zM134 313h1v1h-1zM126 314h1v1h-1zM133 314h1v1h-1zM127 315h1v1h-1zM132 315h1v1h-1zM128 316h1v1h-1zM131 316h1v1h-1zM129 317h2v1h-2zM129 318h2v1h-2zM128 319h1v1h-1zM131 319h1v1h-1zM127 320h1v1h-1zM132 320h1v1h-1zM126 321h1v1h-1zM133 321h1v1h-1zM125 302h1v1h-1zM134 302h1v1h-1zM126 303h1v1h-1zM133 303h1v1h-1zM127 304h1v1h-1zM132 304h1v1h-1zM128 305h1v1h-1zM131 305h1v1h-1zM129 306h2v1h-2zM129 307h2v1h-2zM128 308h1v1h-1zM131 308h1v1h-1zM127 309h1v1h-1zM132 309h1v1h-1zM126 310h1v1h-1zM133 310h1v1h-1zM125 290h1v1h-1zM134 290h1v1h-1zM126 291h1v1h-1zM133 291h1v1h-1zM127 292h1v1h-1zM132 292h1v1h-1zM128 293h1v1h-1zM131 293h1v1h-1zM129 294h2v1h-2zM129 295h2v1h-2zM128 296h1v1h-1zM131 296h1v1h-1zM127 297h1v1h-1zM132 297h1v1h-1zM126 298h1v1h-1zM133 298h1v1h-1zM148 437h1v1h-1zM157 437h1v1h-1zM149 438h1v1h-1zM156 438h1v1h-1zM150 439h1v1h-1zM155 439h1v1h-1zM151 440h1v1h-1zM154 440h1v1h-1zM152 441h2v1h-2zM152 442h2v1h-2zM151 443h1v1h-1zM154 443h1v1h-1zM150 444h1v1h-1zM155 444h1v1h-1zM149 445h1v1h-1zM156 445h1v1h-1zM148 426h1v1h-1zM157 426h1v1h-1zM149 427h1v1h-1zM156 427h1v1h-1zM150 428h1v1h-1zM155 428h1v1h-1zM151 429h1v1h-1zM154 429h1v1h-1zM152 430h2v1h-2zM152 431h2v1h-2zM151 432h1v1h-1zM154 432h1v1h-1zM150 433h1v1h-1zM155 433h1v1h-1zM149 434h1v1h-1zM156 434h1v1h-1zM148 414h1v1h-1zM157 414h1v1h-1zM149 415h1v1h-1zM156 415h1v1h-1zM150 416h1v1h-1zM155 416h1v1h-1zM151 417h1v1h-1zM154 417h1v1h-1zM152 418h2v1h-2zM152 419h2v1h-2zM151 420h1v1h-1zM154 420h1v1h-1zM150 421h1v1h-1zM155 421h1v1h-1zM149 422h1v1h-1zM156 422h1v1h-1zM148 403h1v1h-1zM157 403h1v1h-1zM149 404h1v1h-1zM156 404h1v1h-1zM150 405h1v1h-1zM155 405h1v1h-1zM151 406h1v1h-1zM154 406h1v1h-1zM152 407h2v1h-2zM152 408h2v1h-2zM151 409h1v1h-1zM154 409h1v1h-1zM150 410h1v1h-1zM155 410h1v1h-1zM149 411h1v1h-1zM156 411h1v1h-1zM148 392h1v1h-1zM157 392h1v1h-1zM149 393h1v1h-1zM156 393h1v1h-1zM150 394h1v1h-1zM155 394h1v1h-1zM151 395h1v1h-1zM154 395h1v1h-1zM152 396h2v1h-2zM152 397h2v1h-2zM151 398h1v1h-1zM154 398h1v1h-1zM150 399h1v1h-1zM155 399h1v1h-1zM149 400h1v1h-1zM156 400h1v1h-1zM148 381h1v1h-1zM157 381h1v1h-1zM149 382h1v1h-1zM156 382h1v1h-1zM150 383h1v1h-1zM155 383h1v1h-1zM151 384h1v1h-1zM154 384h1v1h-1zM152 385h2v1h-2zM152 386h2v1h-2zM151 387h1v1h-1zM154 387h1v1h-1zM150 388h1v1h-1zM155 388h1v1h-1zM149 389h1v1h-1zM156 389h1v1h-1zM148 369h1v1h-1zM157 369h1v1h-1zM149 370h1v1h-1zM156 370h1v1h-1zM150 371h1v1h-1zM155 371h1v1h-1zM151 372h1v1h-1zM154 372h1v1h-1zM152 373h2v1h-2zM152 374h2v1h-2zM151 375h1v1h-1zM154 375h1v1h-1zM150 376h1v1h-1zM155 376h1v1h-1zM149 377h1v1h-1zM156 377h1v1h-1zM148 358h1v1h-1zM157 358h1v1h-1zM149 359h1v1h-1zM156 359h1v1h-1zM150 360h1v1h-1zM155 360h1v1h-1zM151 361h1v1h-1zM154 361h1v1h-1zM152 362h2v1h-2zM152 363h2v1h-2zM151 364h1v1h-1zM154 364h1v1h-1zM150 365h1v1h-1zM155 365h1v1h-1zM149 366h1v1h-1zM156 366h1v1h-1zM148 347h1v1h-1zM157 347h1v1h-1zM149 348h1v1h-1zM156 348h1v1h-1zM150 349h1v1h-1zM155 349h1v1h-1zM151 350h1v1h-1zM154 350h1v1h-1zM152 351h2v1h-2zM152 352h2v1h-2zM151 353h1v1h-1zM154 353h1v1h-1zM150 354h1v1h-1zM155 354h1v1h-1zM149 355h1v1h-1zM156 355h1v1h-1zM148 335h1v1h-1zM157 335h1v1h-1zM149 336h1v1h-1zM156 336h1v1h-1zM150 337h1v1h-1zM155 337h1v1h-1zM151 338h1v1h-1zM154 338h1v1h-1zM152 339h2v1h-2zM152 340h2v1h-2zM151 341h1v1h-1zM154 341h1v1h-1zM150 342h1v1h-1zM155 342h1v1h-1zM149 343h1v1h-1zM156 343h1v1h-1zM148 324h1v1h-1zM157 324h1v1h-1zM149 325h1v1h-1zM156 325h1v1h-1zM150 326h1v1h-1zM155 326h1v1h-1zM151 327h1v1h-1zM154 327h1v1h-1zM152 328h2v1h-2zM152 329h2v1h-2zM151 330h1v1h-1zM154 330h1v1h-1zM150 331h1v1h-1zM155 331h1v1h-1zM149 332h1v1h-1zM156 332h1v1h-1zM148 313h1v1h-1zM157 313h1v1h-1zM149 314h1v1h-1zM156 314h1v1h-1zM150 315h1v1h-1zM155 315h1v1h-1zM151 316h1v1h-1zM154 316h1v1h-1zM152 317h2v1h-2zM152 318h2v1h-2zM151 319h1v1h-1zM154 319h1v1h-1zM150 320h1v1h-1zM155 320h1v1h-1zM149 321h1v1h-1zM156 321h1v1h-1zM148 290h1v1h-1zM157 290h1v1h-1zM149 291h1v1h-1zM156 291h1v1h-1zM150 292h1v1h-1zM155 292h1v1h-1zM151 293h1v1h-1zM154 293h1v1h-1zM152 294h2v1h-2zM152 295h2v1h-2zM151 296h1v1h-1zM154 296h1v1h-1zM150 297h1v1h-1zM155 297h1v1h-1zM149 298h1v1h-1zM156 298h1v1h-1zM148 279h1v1h-1zM157 279h1v1h-1zM149 280h1v1h-1zM156 280h1v1h-1zM150 281h1v1h-1zM155 281h1v1h-1zM151 282h1v1h-1zM154 282h1v1h-1zM152 283h2v1h-2zM152 284h2v1h-2zM151 285h1v1h-1zM154 285h1v1h-1zM150 286h1v1h-1zM155 286h1v1h-1zM149 287h1v1h-1zM156 287h1v1h-1zM148 268h1v1h-1zM157 268h1v1h-1zM149 269h1v1h-1zM156 269h1v1h-1zM150 270h1v1h-1zM155 270h1v1h-1zM151 271h1v1h-1zM154 271h1v1h-1zM152 272h2v1h-2zM152 273h2v1h-2zM151 274h1v1h-1zM154 274h1v1h-1zM150 275h1v1h-1zM155 275h1v1h-1zM149 276h1v1h-1zM156 276h1v1h-1zM148 257h1v1h-1zM157 257h1v1h-1zM149 258h1v1h-1zM156 258h1v1h-1zM150 259h1v1h-1zM155 259h1v1h-1zM151 260h1v1h-1zM154 260h1v1h-1zM152 261h2v1h-2zM152 262h2v1h-2zM151 263h1v1h-1zM154 263h1v1h-1zM150 264h1v1h-1zM155 264h1v1h-1zM149 265h1v1h-1zM156 265h1v1h-1zM148 245h1v1h-1zM157 245h1v1h-1zM149 246h1v1h-1zM156 246h1v1h-1zM150 247h1v1h-1zM155 247h1v1h-1zM151 248h1v1h-1zM154 248h1v1h-1zM152 249h2v1h-2zM152 250h2v1h-2zM151 251h1v1h-1zM154 251h1v1h-1zM150 252h1v1h-1zM155 252h1v1h-1zM149 253h1v1h-1zM156 253h1v1h-1zM170 381h1v1h-1zM179 381h1v1h-1zM171 382h1v1h-1zM178 382h1v1h-1zM172 383h1v1h-1zM177 383h1v1h-1zM173 384h1v1h-1zM176 384h1v1h-1zM174 385h2v1h-2zM174 386h2v1h-2zM173 387h1v1h-1zM176 387h1v1h-1zM172 388h1v1h-1zM177 388h1v1h-1zM171 389h1v1h-1zM178 389h1v1h-1zM170 369h1v1h-1zM179 369h1v1h-1zM171 370h1v1h-1zM178 370h1v1h-1zM172 371h1v1h-1zM177 371h1v1h-1zM173 372h1v1h-1zM176 372h1v1h-1zM174 373h2v1h-2zM174 374h2v1h-2zM173 375h1v1h-1zM176 375h1v1h-1zM172 376h1v1h-1zM177 376h1v1h-1zM171 377h1v1h-1zM178 377h1v1h-1zM170 358h1v1h-1zM179 358h1v1h-1zM171 359h1v1h-1zM178 359h1v1h-1zM172 360h1v1h-1zM177 360h1v1h-1zM173 361h1v1h-1zM176 361h1v1h-1zM174 362h2v1h-2zM174 363h2v1h-2zM173 364h1v1h-1zM176 364h1v1h-1zM172 365h1v1h-1zM177 365h1v1h-1zM171 366h1v1h-1zM178 366h1v1h-1zM170 347h1v1h-1zM179 347h1v1h-1zM171 348h1v1h-1zM178 348h1v1h-1zM172 349h1v1h-1zM177 349h1v1h-1zM173 350h1v1h-1zM176 350h1v1h-1zM174 351h2v1h-2zM174 352h2v1h-2zM173 353h1v1h-1zM176 353h1v1h-1zM172 354h1v1h-1zM177 354h1v1h-1zM171 355h1v1h-1zM178 355h1v1h-1zM170 335h1v1h-1zM179 335h1v1h-1zM171 336h1v1h-1zM178 336h1v1h-1zM172 337h1v1h-1zM177 337h1v1h-1zM173 338h1v1h-1zM176 338h1v1h-1zM174 339h2v1h-2zM174 340h2v1h-2zM173 341h1v1h-1zM176 341h1v1h-1zM172 342h1v1h-1zM177 342h1v1h-1zM171 343h1v1h-1zM178 343h1v1h-1zM170 324h1v1h-1zM179 324h1v1h-1zM171 325h1v1h-1zM178 325h1v1h-1zM172 326h1v1h-1zM177 326h1v1h-1zM173 327h1v1h-1zM176 327h1v1h-1zM174 328h2v1h-2zM174 329h2v1h-2zM173 330h1v1h-1zM176 330h1v1h-1zM172 331h1v1h-1zM177 331h1v1h-1zM171 332h1v1h-1zM178 332h1v1h-1zM170 313h1v1h-1zM179 313h1v1h-1zM171 314h1v1h-1zM178 314h1v1h-1zM172 315h1v1h-1zM177 315h1v1h-1zM173 316h1v1h-1zM176 316h1v1h-1zM174 317h2v1h-2zM174 318h2v1h-2zM173 319h1v1h-1zM176 319h1v1h-1zM172 320h1v1h-1zM177 320h1v1h-1zM171 321h1v1h-1zM178 321h1v1h-1zM170 302h1v1h-1zM179 302h1v1h-1zM171 303h1v1h-1zM178 303h1v1h-1zM172 304h1v1h-1zM177 304h1v1h-1zM173 305h1v1h-1zM176 305h1v1h-1zM174 306h2v1h-2zM174 307h2v1h-2zM173 308h1v1h-1zM176 308h1v1h-1zM172 309h1v1h-1zM177 309h1v1h-1zM171 310h1v1h-1zM178 310h1v1h-1zM170 290h1v1h-1zM179 290h1v1h-1zM171 291h1v1h-1zM178 291h1v1h-1zM172 292h1v1h-1zM177 292h1v1h-1zM173 293h1v1h-1zM176 293h1v1h-1zM174 294h2v1h-2zM174 295h2v1h-2zM173 296h1v1h-1zM176 296h1v1h-1zM172 297h1v1h-1zM177 297h1v1h-1zM171 298h1v1h-1zM178 298h1v1h-1zM193 335h1v1h-1zM202 335h1v1h-1zM194 336h1v1h-1zM201 336h1v1h-1zM195 337h1v1h-1zM200 337h1v1h-1zM196 338h1v1h-1zM199 338h1v1h-1zM197 339h2v1h-2zM197 340h2v1h-2zM196 341h1v1h-1zM199 341h1v1h-1zM195 342h1v1h-1zM200 342h1v1h-1zM194 343h1v1h-1zM201 343h1v1h-1zM193 324h1v1h-1zM202 324h1v1h-1zM194 325h1v1h-1zM201 325h1v1h-1zM195 326h1v1h-1zM200 326h1v1h-1zM196 327h1v1h-1zM199 327h1v1h-1zM197 328h2v1h-2zM197 329h2v1h-2zM196 330h1v1h-1zM199 330h1v1h-1zM195 331h1v1h-1zM200 331h1v1h-1zM194 332h1v1h-1zM201 332h1v1h-1zM193 313h1v1h-1zM202 313h1v1h-1zM194 314h1v1h-1zM201 314h1v1h-1zM195 315h1v1h-1zM200 315h1v1h-1zM196 316h1v1h-1zM199 316h1v1h-1zM197 317h2v1h-2zM197 318h2v1h-2zM196 319h1v1h-1zM199 319h1v1h-1zM195 320h1v1h-1zM200 320h1v1h-1zM194 321h1v1h-1zM201 321h1v1h-1zM193 290h1v1h-1zM202 290h1v1h-1zM194 291h1v1h-1zM201 291h1v1h-1zM195 292h1v1h-1zM200 292h1v1h-1zM196 293h1v1h-1zM199 293h1v1h-1zM197 294h2v1h-2zM197 295h2v1h-2zM196 296h1v1h-1zM199 296h1v1h-1zM195 297h1v1h-1zM200 297h1v1h-1zM194 298h1v1h-1zM201 298h1v1h-1zM215 347h1v1h-1zM224 347h1v1h-1zM216 348h1v1h-1zM223 348h1v1h-1zM217 349h1v1h-1zM222 349h1v1h-1zM218 350h1v1h-1zM221 350h1v1h-1zM219 351h2v1h-2zM219 352h2v1h-2zM218 353h1v1h-1zM221 353h1v1h-1zM217 354h1v1h-1zM222 354h1v1h-1zM216 355h1v1h-1zM223 355h1v1h-1zM215 335h1v1h-1zM224 335h1v1h-1zM216 336h1v1h-1zM223 336h1v1h-1zM217 337h1v1h-1zM222 337h1v1h-1zM218 338h1v1h-1zM221 338h1v1h-1zM219 339h2v1h-2zM219 340h2v1h-2zM218 341h1v1h-1zM221 341h1v1h-1zM217 342h1v1h-1zM222 342h1v1h-1zM216 343h1v1h-1zM223 343h1v1h-1zM215 324h1v1h-1zM224 324h1v1h-1zM216 325h1v1h-1zM223 325h1v1h-1zM217 326h1v1h-1zM222 326h1v1h-1zM218 327h1v1h-1zM221 327h1v1h-1zM219 328h2v1h-2zM219 329h2v1h-2zM218 330h1v1h-1zM221 330h1v1h-1zM217 331h1v1h-1zM222 331h1v1h-1zM216 332h1v1h-1zM223 332h1v1h-1zM215 313h1v1h-1zM224 313h1v1h-1zM216 314h1v1h-1zM223 314h1v1h-1zM217 315h1v1h-1zM222 315h1v1h-1zM218 316h1v1h-1zM221 316h1v1h-1zM219 317h2v1h-2zM219 318h2v1h-2zM218 319h1v1h-1zM221 319h1v1h-1zM217 320h1v1h-1zM222 320h1v1h-1zM216 321h1v1h-1zM223 321h1v1h-1zM238 358h1v1h-1zM247 358h1v1h-1zM239 359h1v1h-1zM246 359h1v1h-1zM240 360h1v1h-1zM245 360h1v1h-1zM241 361h1v1h-1zM244 361h1v1h-1zM242 362h2v1h-2zM242 363h2v1h-2zM241 364h1v1h-1zM244 364h1v1h-1zM240 365h1v1h-1zM245 365h1v1h-1zM239 366h1v1h-1zM246 366h1v1h-1zM238 347h1v1h-1zM247 347h1v1h-1zM239 348h1v1h-1zM246 348h1v1h-1zM240 349h1v1h-1zM245 349h1v1h-1zM241 350h1v1h-1zM244 350h1v1h-1zM242 351h2v1h-2zM242 352h2v1h-2zM241 353h1v1h-1zM244 353h1v1h-1zM240 354h1v1h-1zM245 354h1v1h-1zM239 355h1v1h-1zM246 355h1v1h-1zM238 335h1v1h-1zM247 335h1v1h-1zM239 336h1v1h-1zM246 336h1v1h-1zM240 337h1v1h-1zM245 337h1v1h-1zM241 338h1v1h-1zM244 338h1v1h-1zM242 339h2v1h-2zM242 340h2v1h-2zM241 341h1v1h-1zM244 341h1v1h-1zM240 342h1v1h-1zM245 342h1v1h-1zM239 343h1v1h-1zM246 343h1v1h-1zM238 313h1v1h-1zM247 313h1v1h-1zM239 314h1v1h-1zM246 314h1v1h-1zM240 315h1v1h-1zM245 315h1v1h-1zM241 316h1v1h-1zM244 316h1v1h-1zM242 317h2v1h-2zM242 318h2v1h-2zM241 319h1v1h-1zM244 319h1v1h-1zM240 320h1v1h-1zM245 320h1v1h-1zM239 321h1v1h-1zM246 321h1v1h-1zM238 302h1v1h-1zM247 302h1v1h-1zM239 303h1v1h-1zM246 303h1v1h-1zM240 304h1v1h-1zM245 304h1v1h-1zM241 305h1v1h-1zM244 305h1v1h-1zM242 306h2v1h-2zM242 307h2v1h-2zM241 308h1v1h-1zM244 308h1v1h-1zM240 309h1v1h-1zM245 309h1v1h-1zM239 310h1v1h-1zM246 310h1v1h-1zM238 290h1v1h-1zM247 290h1v1h-1zM239 291h1v1h-1zM246 291h1v1h-1zM240 292h1v1h-1zM245 292h1v1h-1zM241 293h1v1h-1zM244 293h1v1h-1zM242 294h2v1h-2zM242 295h2v1h-2zM241 296h1v1h-1zM244 296h1v1h-1zM240 297h1v1h-1zM245 297h1v1h-1zM239 298h1v1h-1zM246 298h1v1h-1zM238 279h1v1h-1zM247 279h1v1h-1zM239 280h1v1h-1zM246 280h1v1h-1zM240 281h1v1h-1zM245 281h1v1h-1zM241 282h1v1h-1zM244 282h1v1h-1zM242 283h2v1h-2zM242 284h2v1h-2zM241 285h1v1h-1zM244 285h1v1h-1zM240 286h1v1h-1zM245 286h1v1h-1zM239 287h1v1h-1zM246 287h1v1h-1zM238 268h1v1h-1zM247 268h1v1h-1zM239 269h1v1h-1zM246 269h1v1h-1zM240 270h1v1h-1zM245 270h1v1h-1zM241 271h1v1h-1zM244 271h1v1h-1zM242 272h2v1h-2zM242 273h2v1h-2zM241 274h1v1h-1zM244 274h1v1h-1zM240 275h1v1h-1zM245 275h1v1h-1zM239 276h1v1h-1zM246 276h1v1h-1zM238 257h1v1h-1zM247 257h1v1h-1zM239 258h1v1h-1zM246 258h1v1h-1zM240 259h1v1h-1zM245 259h1v1h-1zM241 260h1v1h-1zM244 260h1v1h-1zM242 261h2v1h-2zM242 262h2v1h-2zM241 263h1v1h-1zM244 263h1v1h-1zM240 264h1v1h-1zM245 264h1v1h-1zM239 265h1v1h-1zM246 265h1v1h-1zM238 245h1v1h-1zM247 245h1v1h-1zM239 246h1v1h-1zM246 246h1v1h-1zM240 247h1v1h-1zM245 247h1v1h-1zM241 248h1v1h-1zM244 248h1v1h-1zM242 249h2v1h-2zM242 250h2v1h-2zM241 251h1v1h-1zM244 251h1v1h-1zM240 252h1v1h-1zM245 252h1v1h-1zM239 253h1v1h-1zM246 253h1v1h-1zM238 234h1v1h-1zM247 234h1v1h-1zM239 235h1v1h-1zM246 235h1v1h-1zM240 236h1v1h-1zM245 236h1v1h-1zM241 237h1v1h-1zM244 237h1v1h-1zM242 238h2v1h-2zM242 239h2v1h-2zM241 240h1v1h-1zM244 240h1v1h-1zM240 241h1v1h-1zM245 241h1v1h-1zM239 242h1v1h-1zM246 242h1v1h-1zM238 223h1v1h-1zM247 223h1v1h-1zM239 224h1v1h-1zM246 224h1v1h-1zM240 225h1v1h-1zM245 225h1v1h-1zM241 226h1v1h-1zM244 226h1v1h-1zM242 227h2v1h-2zM242 228h2v1h-2zM241 229h1v1h-1zM244 229h1v1h-1zM240 230h1v1h-1zM245 230h1v1h-1zM239 231h1v1h-1zM246 231h1v1h-1zM260 358h1v1h-1zM269 358h1v1h-1zM261 359h1v1h-1zM268 359h1v1h-1zM262 360h1v1h-1zM267 360h1v1h-1zM263 361h1v1h-1zM266 361h1v1h-1zM264 362h2v1h-2zM264 363h2v1h-2zM263 364h1v1h-1zM266 364h1v1h-1zM262 365h1v1h-1zM267 365h1v1h-1zM261 366h1v1h-1zM268 366h1v1h-1zM260 347h1v1h-1zM269 347h1v1h-1zM261 348h1v1h-1zM268 348h1v1h-1zM262 349h1v1h-1zM267 349h1v1h-1zM263 350h1v1h-1zM266 350h1v1h-1zM264 351h2v1h-2zM264 352h2v1h-2zM263 353h1v1h-1zM266 353h1v1h-1zM262 354h1v1h-1zM267 354h1v1h-1zM261 355h1v1h-1zM268 355h1v1h-1zM260 335h1v1h-1zM269 335h1v1h-1zM261 336h1v1h-1zM268 336h1v1h-1zM262 337h1v1h-1zM267 337h1v1h-1zM263 338h1v1h-1zM266 338h1v1h-1zM264 339h2v1h-2zM264 340h2v1h-2zM263 341h1v1h-1zM266 341h1v1h-1zM262 342h1v1h-1zM267 342h1v1h-1zM261 343h1v1h-1zM268 343h1v1h-1zM260 324h1v1h-1zM269 324h1v1h-1zM261 325h1v1h-1zM268 325h1v1h-1zM262 326h1v1h-1zM267 326h1v1h-1zM263 327h1v1h-1zM266 327h1v1h-1zM264 328h2v1h-2zM264 329h2v1h-2zM263 330h1v1h-1zM266 330h1v1h-1zM262 331h1v1h-1zM267 331h1v1h-1zM261 332h1v1h-1zM268 332h1v1h-1zM260 313h1v1h-1zM269 313h1v1h-1zM261 314h1v1h-1zM268 314h1v1h-1zM262 315h1v1h-1zM267 315h1v1h-1zM263 316h1v1h-1zM266 316h1v1h-1zM264 317h2v1h-2zM264 318h2v1h-2zM263 319h1v1h-1zM266 319h1v1h-1zM262 320h1v1h-1zM267 320h1v1h-1zM261 321h1v1h-1zM268 321h1v1h-1zM283 426h1v1h-1zM292 426h1v1h-1zM284 427h1v1h-1zM291 427h1v1h-1zM285 428h1v1h-1zM290 428h1v1h-1zM286 429h1v1h-1zM289 429h1v1h-1zM287 430h2v1h-2zM287 431h2v1h-2zM286 432h1v1h-1zM289 432h1v1h-1zM285 433h1v1h-1zM290 433h1v1h-1zM284 434h1v1h-1zM291 434h1v1h-1zM283 414h1v1h-1zM292 414h1v1h-1zM284 415h1v1h-1zM291 415h1v1h-1zM285 416h1v1h-1zM290 416h1v1h-1zM286 417h1v1h-1zM289 417h1v1h-1zM287 418h2v1h-2zM287 419h2v1h-2zM286 420h1v1h-1zM289 420h1v1h-1zM285 421h1v1h-1zM290 421h1v1h-1zM284 422h1v1h-1zM291 422h1v1h-1zM283 403h1v1h-1zM292 403h1v1h-1zM284 404h1v1h-1zM291 404h1v1h-1zM285 405h1v1h-1zM290 405h1v1h-1zM286 406h1v1h-1zM289 406h1v1h-1zM287 407h2v1h-2zM287 408h2v1h-2zM286 409h1v1h-1zM289 409h1v1h-1zM285 410h1v1h-1zM290 410h1v1h-1zM284 411h1v1h-1zM291 411h1v1h-1zM283 392h1v1h-1zM292 392h1v1h-1zM284 393h1v1h-1zM291 393h1v1h-1zM285 394h1v1h-1zM290 394h1v1h-1zM286 395h1v1h-1zM289 395h1v1h-1zM287 396h2v1h-2zM287 397h2v1h-2zM286 398h1v1h-1zM289 398h1v1h-1zM285 399h1v1h-1zM290 399h1v1h-1zM284 400h1v1h-1zM291 400h1v1h-1zM283 381h1v1h-1zM292 381h1v1h-1zM284 382h1v1h-1zM291 382h1v1h-1zM285 383h1v1h-1zM290 383h1v1h-1zM286 384h1v1h-1zM289 384h1v1h-1zM287 385h2v1h-2zM287 386h2v1h-2zM286 387h1v1h-1zM289 387h1v1h-1zM285 388h1v1h-1zM290 388h1v1h-1zM284 389h1v1h-1zM291 389h1v1h-1zM283 369h1v1h-1zM292 369h1v1h-1zM284 370h1v1h-1zM291 370h1v1h-1zM285 371h1v1h-1zM290 371h1v1h-1zM286 372h1v1h-1zM289 372h1v1h-1zM287 373h2v1h-2zM287 374h2v1h-2zM286 375h1v1h-1zM289 375h1v1h-1zM285 376h1v1h-1zM290 376h1v1h-1zM284 377h1v1h-1zM291 377h1v1h-1zM283 358h1v1h-1zM292 358h1v1h-1zM284 359h1v1h-1zM291 359h1v1h-1zM285 360h1v1h-1zM290 360h1v1h-1zM286 361h1v1h-1zM289 361h1v1h-1zM287 362h2v1h-2zM287 363h2v1h-2zM286 364h1v1h-1zM289 364h1v1h-1zM285 365h1v1h-1zM290 365h1v1h-1zM284 366h1v1h-1zM291 366h1v1h-1zM283 347h1v1h-1zM292 347h1v1h-1zM284 348h1v1h-1zM291 348h1v1h-1zM285 349h1v1h-1zM290 349h1v1h-1zM286 350h1v1h-1zM289 350h1v1h-1zM287 351h2v1h-2zM287 352h2v1h-2zM286 353h1v1h-1zM289 353h1v1h-1zM285 354h1v1h-1zM290 354h1v1h-1zM284 355h1v1h-1zM291 355h1v1h-1zM283 335h1v1h-1zM292 335h1v1h-1zM284 336h1v1h-1zM291 336h1v1h-1zM285 337h1v1h-1zM290 337h1v1h-1zM286 338h1v1h-1zM289 338h1v1h-1zM287 339h2v1h-2zM287 340h2v1h-2zM286 341h1v1h-1zM289 341h1v1h-1zM285 342h1v1h-1zM290 342h1v1h-1zM284 343h1v1h-1zM291 343h1v1h-1zM283 324h1v1h-1zM292 324h1v1h-1zM284 325h1v1h-1zM291 325h1v1h-1zM285 326h1v1h-1zM290 326h1v1h-1zM286 327h1v1h-1zM289 327h1v1h-1zM287 328h2v1h-2zM287 329h2v1h-2zM286 330h1v1h-1zM289 330h1v1h-1zM285 331h1v1h-1zM290 331h1v1h-1zM284 332h1v1h-1zM291 332h1v1h-1zM305 527h1v1h-1zM314 527h1v1h-1zM306 528h1v1h-1zM313 528h1v1h-1zM307 529h1v1h-1zM312 529h1v1h-1zM308 530h1v1h-1zM311 530h1v1h-1zM309 531h2v1h-2zM309 532h2v1h-2zM308 533h1v1h-1zM311 533h1v1h-1zM307 534h1v1h-1zM312 534h1v1h-1zM306 535h1v1h-1zM313 535h1v1h-1zM305 516h1v1h-1zM314 516h1v1h-1zM306 517h1v1h-1zM313 517h1v1h-1zM307 518h1v1h-1zM312 518h1v1h-1zM308 519h1v1h-1zM311 519h1v1h-1zM309 520h2v1h-2zM309 521h2v1h-2zM308 522h1v1h-1zM311 522h1v1h-1zM307 523h1v1h-1zM312 523h1v1h-1zM306 524h1v1h-1zM313 524h1v1h-1zM305 505h1v1h-1zM314 505h1v1h-1zM306 506h1v1h-1zM313 506h1v1h-1zM307 507h1v1h-1zM312 507h1v1h-1zM308 508h1v1h-1zM311 508h1v1h-1zM309 509h2v1h-2zM309 510h2v1h-2zM308 511h1v1h-1zM311 511h1v1h-1zM307 512h1v1h-1zM312 512h1v1h-1zM306 513h1v1h-1zM313 513h1v1h-1zM305 493h1v1h-1zM314 493h1v1h-1zM306 494h1v1h-1zM313 494h1v1h-1zM307 495h1v1h-1zM312 495h1v1h-1zM308 496h1v1h-1zM311 496h1v1h-1zM309 497h2v1h-2zM309 498h2v1h-2zM308 499h1v1h-1zM311 499h1v1h-1zM307 500h1v1h-1zM312 500h1v1h-1zM306 501h1v1h-1zM313 501h1v1h-1zM305 482h1v1h-1zM314 482h1v1h-1zM306 483h1v1h-1zM313 483h1v1h-1zM307 484h1v1h-1zM312 484h1v1h-1zM308 485h1v1h-1zM311 485h1v1h-1zM309 486h2v1h-2zM309 487h2v1h-2zM308 488h1v1h-1zM311 488h1v1h-1zM307 489h1v1h-1zM312 489h1v1h-1zM306 490h1v1h-1zM313 490h1v1h-1zM305 471h1v1h-1zM314 471h1v1h-1zM306 472h1v1h-1zM313 472h1v1h-1zM307 473h1v1h-1zM312 473h1v1h-1zM308 474h1v1h-1zM311 474h1v1h-1zM309 475h2v1h-2zM309 476h2v1h-2zM308 477h1v1h-1zM311 477h1v1h-1zM307 478h1v1h-1zM312 478h1v1h-1zM306 479h1v1h-1zM313 479h1v1h-1zM305 459h1v1h-1zM314 459h1v1h-1zM306 460h1v1h-1zM313 460h1v1h-1zM307 461h1v1h-1zM312 461h1v1h-1zM308 462h1v1h-1zM311 462h1v1h-1zM309 463h2v1h-2zM309 464h2v1h-2zM308 465h1v1h-1zM311 465h1v1h-1zM307 466h1v1h-1zM312 466h1v1h-1zM306 467h1v1h-1zM313 467h1v1h-1zM305 448h1v1h-1zM314 448h1v1h-1zM306 449h1v1h-1zM313 449h1v1h-1zM307 450h1v1h-1zM312 450h1v1h-1zM308 451h1v1h-1zM311 451h1v1h-1zM309 452h2v1h-2zM309 453h2v1h-2zM308 454h1v1h-1zM311 454h1v1h-1zM307 455h1v1h-1zM312 455h1v1h-1zM306 456h1v1h-1zM313 456h1v1h-1zM305 437h1v1h-1zM314 437h1v1h-1zM306 438h1v1h-1zM313 438h1v1h-1zM307 439h1v1h-1zM312 439h1v1h-1zM308 440h1v1h-1zM311 440h1v1h-1zM309 441h2v1h-2zM309 442h2v1h-2zM308 443h1v1h-1zM311 443h1v1h-1zM307 444h1v1h-1zM312 444h1v1h-1zM306 445h1v1h-1zM313 445h1v1h-1zM305 426h1v1h-1zM314 426h1v1h-1zM306 427h1v1h-1zM313 427h1v1h-1zM307 428h1v1h-1zM312 428h1v1h-1zM308 429h1v1h-1zM311 429h1v1h-1zM309 430h2v1h-2zM309 431h2v1h-2zM308 432h1v1h-1zM311 432h1v1h-1zM307 433h1v1h-1zM312 433h1v1h-1zM306 434h1v1h-1zM313 434h1v1h-1zM305 414h1v1h-1zM314 414h1v1h-1zM306 415h1v1h-1zM313 415h1v1h-1zM307 416h1v1h-1zM312 416h1v1h-1zM308 417h1v1h-1zM311 417h1v1h-1zM309 418h2v1h-2zM309 419h2v1h-2zM308 420h1v1h-1zM311 420h1v1h-1zM307 421h1v1h-1zM312 421h1v1h-1zM306 422h1v1h-1zM313 422h1v1h-1zM305 403h1v1h-1zM314 403h1v1h-1zM306 404h1v1h-1zM313 404h1v1h-1zM307 405h1v1h-1zM312 405h1v1h-1zM308 406h1v1h-1zM311 406h1v1h-1zM309 407h2v1h-2zM309 408h2v1h-2zM308 409h1v1h-1zM311 409h1v1h-1zM307 410h1v1h-1zM312 410h1v1h-1zM306 411h1v1h-1zM313 411h1v1h-1zM305 392h1v1h-1zM314 392h1v1h-1zM306 393h1v1h-1zM313 393h1v1h-1zM307 394h1v1h-1zM312 394h1v1h-1zM308 395h1v1h-1zM311 395h1v1h-1zM309 396h2v1h-2zM309 397h2v1h-2zM308 398h1v1h-1zM311 398h1v1h-1zM307 399h1v1h-1zM312 399h1v1h-1zM306 400h1v1h-1zM313 400h1v1h-1zM305 381h1v1h-1zM314 381h1v1h-1zM306 382h1v1h-1zM313 382h1v1h-1zM307 383h1v1h-1zM312 383h1v1h-1zM308 384h1v1h-1zM311 384h1v1h-1zM309 385h2v1h-2zM309 386h2v1h-2zM308 387h1v1h-1zM311 387h1v1h-1zM307 388h1v1h-1zM312 388h1v1h-1zM306 389h1v1h-1zM313 389h1v1h-1zM305 358h1v1h-1zM314 358h1v1h-1zM306 359h1v1h-1zM313 359h1v1h-1zM307 360h1v1h-1zM312 360h1v1h-1zM308 361h1v1h-1zM311 361h1v1h-1zM309 362h2v1h-2zM309 363h2v1h-2zM308 364h1v1h-1zM311 364h1v1h-1zM307 365h1v1h-1zM312 365h1v1h-1zM306 366h1v1h-1zM313 366h1v1h-1zM305 347h1v1h-1zM314 347h1v1h-1zM306 348h1v1h-1zM313 348h1v1h-1zM307 349h1v1h-1zM312 349h1v1h-1zM308 350h1v1h-1zM311 350h1v1h-1zM309 351h2v1h-2zM309 352h2v1h-2zM308 353h1v1h-1zM311 353h1v1h-1zM307 354h1v1h-1zM312 354h1v1h-1zM306 355h1v1h-1zM313 355h1v1h-1zM328 550h1v1h-1zM337 550h1v1h-1zM329 551h1v1h-1zM336 551h1v1h-1zM330 552h1v1h-1zM335 552h1v1h-1zM331 553h1v1h-1zM334 553h1v1h-1zM332 554h2v1h-2zM332 555h2v1h-2zM331 556h1v1h-1zM334 556h1v1h-1zM330 557h1v1h-1zM335 557h1v1h-1zM329 558h1v1h-1zM336 558h1v1h-1zM328 538h1v1h-1zM337 538h1v1h-1zM329 539h1v1h-1zM336 539h1v1h-1zM330 540h1v1h-1zM335 540h1v1h-1zM331 541h1v1h-1zM334 541h1v1h-1zM332 542h2v1h-2zM332 543h2v1h-2zM331 544h1v1h-1zM334 544h1v1h-1zM330 545h1v1h-1zM335 545h1v1h-1zM329 546h1v1h-1zM336 546h1v1h-1zM328 527h1v1h-1zM337 527h1v1h-1zM329 528h1v1h-1zM336 528h1v1h-1zM330 529h1v1h-1zM335 529h1v1h-1zM331 530h1v1h-1zM334 530h1v1h-1zM332 531h2v1h-2zM332 532h2v1h-2zM331 533h1v1h-1zM334 533h1v1h-1zM330 534h1v1h-1zM335 534h1v1h-1zM329 535h1v1h-1zM336 535h1v1h-1zM328 516h1v1h-1zM337 516h1v1h-1zM329 517h1v1h-1zM336 517h1v1h-1zM330 518h1v1h-1zM335 518h1v1h-1zM331 519h1v1h-1zM334 519h1v1h-1zM332 520h2v1h-2zM332 521h2v1h-2zM331 522h1v1h-1zM334 522h1v1h-1zM330 523h1v1h-1zM335 523h1v1h-1zM329 524h1v1h-1zM336 524h1v1h-1zM328 505h1v1h-1zM337 505h1v1h-1zM329 506h1v1h-1zM336 506h1v1h-1zM330 507h1v1h-1zM335 507h1v1h-1zM331 508h1v1h-1zM334 508h1v1h-1zM332 509h2v1h-2zM332 510h2v1h-2zM331 511h1v1h-1zM334 511h1v1h-1zM330 512h1v1h-1zM335 512h1v1h-1zM329 513h1v1h-1zM336 513h1v1h-1zM328 493h1v1h-1zM337 493h1v1h-1zM329 494h1v1h-1zM336 494h1v1h-1zM330 495h1v1h-1zM335 495h1v1h-1zM331 496h1v1h-1zM334 496h1v1h-1zM332 497h2v1h-2zM332 498h2v1h-2zM331 499h1v1h-1zM334 499h1v1h-1zM330 500h1v1h-1zM335 500h1v1h-1zM329 501h1v1h-1zM336 501h1v1h-1zM328 482h1v1h-1zM337 482h1v1h-1zM329 483h1v1h-1zM336 483h1v1h-1zM330 484h1v1h-1zM335 484h1v1h-1zM331 485h1v1h-1zM334 485h1v1h-1zM332 486h2v1h-2zM332 487h2v1h-2zM331 488h1v1h-1zM334 488h1v1h-1zM330 489h1v1h-1zM335 489h1v1h-1zM329 490h1v1h-1zM336 490h1v1h-1zM328 471h1v1h-1zM337 471h1v1h-1zM329 472h1v1h-1zM336 472h1v1h-1zM330 473h1v1h-1zM335 473h1v1h-1zM331 474h1v1h-1zM334 474h1v1h-1zM332 475h2v1h-2zM332 476h2v1h-2zM331 477h1v1h-1zM334 477h1v1h-1zM330 478h1v1h-1zM335 478h1v1h-1zM329 479h1v1h-1zM336 479h1v1h-1zM328 459h1v1h-1zM337 459h1v1h-1zM329 460h1v1h-1zM336 460h1v1h-1zM330 461h1v1h-1zM335 461h1v1h-1zM331 462h1v1h-1zM334 462h1v1h-1zM332 463h2v1h-2zM332 464h2v1h-2zM331 465h1v1h-1zM334 465h1v1h-1zM330 466h1v1h-1zM335 466h1v1h-1zM329 467h1v1h-1zM336 467h1v1h-1zM328 448h1v1h-1zM337 448h1v1h-1zM329 449h1v1h-1zM336 449h1v1h-1zM330 450h1v1h-1zM335 450h1v1h-1zM331 451h1v1h-1zM334 451h1v1h-1zM332 452h2v1h-2zM332 453h2v1h-2zM331 454h1v1h-1zM334 454h1v1h-1zM330 455h1v1h-1zM335 455h1v1h-1zM329 456h1v1h-1zM336 456h1v1h-1zM328 437h1v1h-1zM337 437h1v1h-1zM329 438h1v1h-1zM336 438h1v1h-1zM330 439h1v1h-1zM335 439h1v1h-1zM331 440h1v1h-1zM334 440h1v1h-1zM332 441h2v1h-2zM332 442h2v1h-2zM331 443h1v1h-1zM334 443h1v1h-1zM330 444h1v1h-1zM335 444h1v1h-1zM329 445h1v1h-1zM336 445h1v1h-1zM328 426h1v1h-1zM337 426h1v1h-1zM329 427h1v1h-1zM336 427h1v1h-1zM330 428h1v1h-1zM335 428h1v1h-1zM331 429h1v1h-1zM334 429h1v1h-1zM332 430h2v1h-2zM332 431h2v1h-2zM331 432h1v1h-1zM334 432h1v1h-1zM330 433h1v1h-1zM335 433h1v1h-1zM329 434h1v1h-1zM336 434h1v1h-1zM328 414h1v1h-1zM337 414h1v1h-1zM329 415h1v1h-1zM336 415h1v1h-1zM330 416h1v1h-1zM335 416h1v1h-1zM331 417h1v1h-1zM334 417h1v1h-1zM332 418h2v1h-2zM332 419h2v1h-2zM331 420h1v1h-1zM334 420h1v1h-1zM330 421h1v1h-1zM335 421h1v1h-1zM329 422h1v1h-1zM336 422h1v1h-1zM328 403h1v1h-1zM337 403h1v1h-1zM329 404h1v1h-1zM336 404h1v1h-1zM330 405h1v1h-1zM335 405h1v1h-1zM331 406h1v1h-1zM334 406h1v1h-1zM332 407h2v1h-2zM332 408h2v1h-2zM331 409h1v1h-1zM334 409h1v1h-1zM330 410h1v1h-1zM335 410h1v1h-1zM329 411h1v1h-1zM336 411h1v1h-1zM328 381h1v1h-1zM337 381h1v1h-1zM329 382h1v1h-1zM336 382h1v1h-1zM330 383h1v1h-1zM335 383h1v1h-1zM331 384h1v1h-1zM334 384h1v1h-1zM332 385h2v1h-2zM332 386h2v1h-2zM331 387h1v1h-1zM334 387h1v1h-1zM330 388h1v1h-1zM335 388h1v1h-1zM329 389h1v1h-1zM336 389h1v1h-1zM328 369h1v1h-1zM337 369h1v1h-1zM329 370h1v1h-1zM336 370h1v1h-1zM330 371h1v1h-1zM335 371h1v1h-1zM331 372h1v1h-1zM334 372h1v1h-1zM332 373h2v1h-2zM332 374h2v1h-2zM331 375h1v1h-1zM334 375h1v1h-1zM330 376h1v1h-1zM335 376h1v1h-1zM329 377h1v1h-1zM336 377h1v1h-1zM328 358h1v1h-1zM337 358h1v1h-1zM329 359h1v1h-1zM336 359h1v1h-1zM330 360h1v1h-1zM335 360h1v1h-1zM331 361h1v1h-1zM334 361h1v1h-1zM332 362h2v1h-2zM332 363h2v1h-2zM331 364h1v1h-1zM334 364h1v1h-1zM330 365h1v1h-1zM335 365h1v1h-1zM329 366h1v1h-1zM336 366h1v1h-1zM328 347h1v1h-1zM337 347h1v1h-1zM329 348h1v1h-1zM336 348h1v1h-1zM330 349h1v1h-1zM335 349h1v1h-1zM331 350h1v1h-1zM334 350h1v1h-1zM332 351h2v1h-2zM332 352h2v1h-2zM331 353h1v1h-1zM334 353h1v1h-1zM330 354h1v1h-1zM335 354h1v1h-1zM329 355h1v1h-1zM336 355h1v1h-1zM328 335h1v1h-1zM337 335h1v1h-1zM329 336h1v1h-1zM336 336h1v1h-1zM330 337h1v1h-1zM335 337h1v1h-1zM331 338h1v1h-1zM334 338h1v1h-1zM332 339h2v1h-2zM332 340h2v1h-2zM331 341h1v1h-1zM334 341h1v1h-1zM330 342h1v1h-1zM335 342h1v1h-1zM329 343h1v1h-1zM336 343h1v1h-1zM328 324h1v1h-1zM337 324h1v1h-1zM329 325h1v1h-1zM336 325h1v1h-1zM330 326h1v1h-1zM335 326h1v1h-1zM331 327h1v1h-1zM334 327h1v1h-1zM332 328h2v1h-2zM332 329h2v1h-2zM331 330h1v1h-1zM334 330h1v1h-1zM330 331h1v1h-1zM335 331h1v1h-1zM329 332h1v1h-1zM336 332h1v1h-1zM328 313h1v1h-1zM337 313h1v1h-1zM329 314h1v1h-1zM336 314h1v1h-1zM330 315h1v1h-1zM335 315h1v1h-1zM331 316h1v1h-1zM334 316h1v1h-1zM332 317h2v1h-2zM332 318h2v1h-2zM331 319h1v1h-1zM334 319h1v1h-1zM330 320h1v1h-1zM335 320h1v1h-1zM329 321h1v1h-1zM336 321h1v1h-1zM328 302h1v1h-1zM337 302h1v1h-1zM329 303h1v1h-1zM336 303h1v1h-1zM330 304h1v1h-1zM335 304h1v1h-1zM331 305h1v1h-1zM334 305h1v1h-1zM332 306h2v1h-2zM332 307h2v1h-2zM331 308h1v1h-1zM334 308h1v1h-1zM330 309h1v1h-1zM335 309h1v1h-1zM329 310h1v1h-1zM336 310h1v1h-1zM328 290h1v1h-1zM337 290h1v1h-1zM329 291h1v1h-1zM336 291h1v1h-1zM330 292h1v1h-1zM335 292h1v1h-1zM331 293h1v1h-1zM334 293h1v1h-1zM332 294h2v1h-2zM332 295h2v1h-2zM331 296h1v1h-1zM334 296h1v1h-1zM330 297h1v1h-1zM335 297h1v1h-1zM329 298h1v1h-1zM336 298h1v1h-1zM328 279h1v1h-1zM337 279h1v1h-1zM329 280h1v1h-1zM336 280h1v1h-1zM330 281h1v1h-1zM335 281h1v1h-1zM331 282h1v1h-1zM334 282h1v1h-1zM332 283h2v1h-2zM332 284h2v1h-2zM331 285h1v1h-1zM334 285h1v1h-1zM330 286h1v1h-1zM335 286h1v1h-1zM329 287h1v1h-1zM336 287h1v1h-1zM328 268h1v1h-1zM337 268h1v1h-1zM329 269h1v1h-1zM336 269h1v1h-1zM330 270h1v1h-1zM335 270h1v1h-1zM331 271h1v1h-1zM334 271h1v1h-1zM332 272h2v1h-2zM332 273h2v1h-2zM331 274h1v1h-1zM334 274h1v1h-1zM330 275h1v1h-1zM335 275h1v1h-1zM329 276h1v1h-1zM336 276h1v1h-1zM350 347h1v1h-1zM359 347h1v1h-1zM351 348h1v1h-1zM358 348h1v1h-1zM352 349h1v1h-1zM357 349h1v1h-1zM353 350h1v1h-1zM356 350h1v1h-1zM354 351h2v1h-2zM354 352h2v1h-2zM353 353h1v1h-1zM356 353h1v1h-1zM352 354h1v1h-1zM357 354h1v1h-1zM351 355h1v1h-1zM358 355h1v1h-1zM350 335h1v1h-1zM359 335h1v1h-1zM351 336h1v1h-1zM358 336h1v1h-1zM352 337h1v1h-1zM357 337h1v1h-1zM353 338h1v1h-1zM356 338h1v1h-1zM354 339h2v1h-2zM354 340h2v1h-2zM353 341h1v1h-1zM356 341h1v1h-1zM352 342h1v1h-1zM357 342h1v1h-1zM351 343h1v1h-1zM358 343h1v1h-1zM350 324h1v1h-1zM359 324h1v1h-1zM351 325h1v1h-1zM358 325h1v1h-1zM352 326h1v1h-1zM357 326h1v1h-1zM353 327h1v1h-1zM356 327h1v1h-1zM354 328h2v1h-2zM354 329h2v1h-2zM353 330h1v1h-1zM356 330h1v1h-1zM352 331h1v1h-1zM357 331h1v1h-1zM351 332h1v1h-1zM358 332h1v1h-1zM350 313h1v1h-1zM359 313h1v1h-1zM351 314h1v1h-1zM358 314h1v1h-1zM352 315h1v1h-1zM357 315h1v1h-1zM353 316h1v1h-1zM356 316h1v1h-1zM354 317h2v1h-2zM354 318h2v1h-2zM353 319h1v1h-1zM356 319h1v1h-1zM352 320h1v1h-1zM357 320h1v1h-1zM351 321h1v1h-1zM358 321h1v1h-1zM350 302h1v1h-1zM359 302h1v1h-1zM351 303h1v1h-1zM358 303h1v1h-1zM352 304h1v1h-1zM357 304h1v1h-1zM353 305h1v1h-1zM356 305h1v1h-1zM354 306h2v1h-2zM354 307h2v1h-2zM353 308h1v1h-1zM356 308h1v1h-1zM352 309h1v1h-1zM357 309h1v1h-1zM351 310h1v1h-1zM358 310h1v1h-1zM350 290h1v1h-1zM359 290h1v1h-1zM351 291h1v1h-1zM358 291h1v1h-1zM352 292h1v1h-1zM357 292h1v1h-1zM353 293h1v1h-1zM356 293h1v1h-1zM354 294h2v1h-2zM354 295h2v1h-2zM353 296h1v1h-1zM356 296h1v1h-1zM352 297h1v1h-1zM357 297h1v1h-1zM351 298h1v1h-1zM358 298h1v1h-1zM350 279h1v1h-1zM359 279h1v1h-1zM351 280h1v1h-1zM358 280h1v1h-1zM352 281h1v1h-1zM357 281h1v1h-1zM353 282h1v1h-1zM356 282h1v1h-1zM354 283h2v1h-2zM354 284h2v1h-2zM353 285h1v1h-1zM356 285h1v1h-1zM352 286h1v1h-1zM357 286h1v1h-1zM351 287h1v1h-1zM358 287h1v1h-1zM350 268h1v1h-1zM359 268h1v1h-1zM351 269h1v1h-1zM358 269h1v1h-1zM352 270h1v1h-1zM357 270h1v1h-1zM353 271h1v1h-1zM356 271h1v1h-1zM354 272h2v1h-2zM354 273h2v1h-2zM353 274h1v1h-1zM356 274h1v1h-1zM352 275h1v1h-1zM357 275h1v1h-1zM351 276h1v1h-1zM358 276h1v1h-1zM350 257h1v1h-1zM359 257h1v1h-1zM351 258h1v1h-1zM358 258h1v1h-1zM352 259h1v1h-1zM357 259h1v1h-1zM353 260h1v1h-1zM356 260h1v1h-1zM354 261h2v1h-2zM354 262h2v1h-2zM353 263h1v1h-1zM356 263h1v1h-1zM352 264h1v1h-1zM357 264h1v1h-1zM351 265h1v1h-1zM358 265h1v1h-1zM350 245h1v1h-1zM359 245h1v1h-1zM351 246h1v1h-1zM358 246h1v1h-1zM352 247h1v1h-1zM357 247h1v1h-1zM353 248h1v1h-1zM356 248h1v1h-1zM354 249h2v1h-2zM354 250h2v1h-2zM353 251h1v1h-1zM356 251h1v1h-1zM352 252h1v1h-1zM357 252h1v1h-1zM351 253h1v1h-1zM358 253h1v1h-1zM373 392h1v1h-1zM382 392h1v1h-1zM374 393h1v1h-1zM381 393h1v1h-1zM375 394h1v1h-1zM380 394h1v1h-1zM376 395h1v1h-1zM379 395h1v1h-1zM377 396h2v1h-2zM377 397h2v1h-2zM376 398h1v1h-1zM379 398h1v1h-1zM375 399h1v1h-1zM380 399h1v1h-1zM374 400h1v1h-1zM381 400h1v1h-1zM373 381h1v1h-1zM382 381h1v1h-1zM374 382h1v1h-1zM381 382h1v1h-1zM375 383h1v1h-1zM380 383h1v1h-1zM376 384h1v1h-1zM379 384h1v1h-1zM377 385h2v1h-2zM377 386h2v1h-2zM376 387h1v1h-1zM379 387h1v1h-1zM375 388h1v1h-1zM380 388h1v1h-1zM374 389h1v1h-1zM381 389h1v1h-1zM373 369h1v1h-1zM382 369h1v1h-1zM374 370h1v1h-1zM381 370h1v1h-1zM375 371h1v1h-1zM380 371h1v1h-1zM376 372h1v1h-1zM379 372h1v1h-1zM377 373h2v1h-2zM377 374h2v1h-2zM376 375h1v1h-1zM379 375h1v1h-1zM375 376h1v1h-1zM380 376h1v1h-1zM374 377h1v1h-1zM381 377h1v1h-1zM373 358h1v1h-1zM382 358h1v1h-1zM374 359h1v1h-1zM381 359h1v1h-1zM375 360h1v1h-1zM380 360h1v1h-1zM376 361h1v1h-1zM379 361h1v1h-1zM377 362h2v1h-2zM377 363h2v1h-2zM376 364h1v1h-1zM379 364h1v1h-1zM375 365h1v1h-1zM380 365h1v1h-1zM374 366h1v1h-1zM381 366h1v1h-1zM395 516h1v1h-1zM404 516h1v1h-1zM396 517h1v1h-1zM403 517h1v1h-1zM397 518h1v1h-1zM402 518h1v1h-1zM398 519h1v1h-1zM401 519h1v1h-1zM399 520h2v1h-2zM399 521h2v1h-2zM398 522h1v1h-1zM401 522h1v1h-1zM397 523h1v1h-1zM402 523h1v1h-1zM396 524h1v1h-1zM403 524h1v1h-1zM395 505h1v1h-1zM404 505h1v1h-1zM396 506h1v1h-1zM403 506h1v1h-1zM397 507h1v1h-1zM402 507h1v1h-1zM398 508h1v1h-1zM401 508h1v1h-1zM399 509h2v1h-2zM399 510h2v1h-2zM398 511h1v1h-1zM401 511h1v1h-1zM397 512h1v1h-1zM402 512h1v1h-1zM396 513h1v1h-1zM403 513h1v1h-1zM395 493h1v1h-1zM404 493h1v1h-1zM396 494h1v1h-1zM403 494h1v1h-1zM397 495h1v1h-1zM402 495h1v1h-1zM398 496h1v1h-1zM401 496h1v1h-1zM399 497h2v1h-2zM399 498h2v1h-2zM398 499h1v1h-1zM401 499h1v1h-1zM397 500h1v1h-1zM402 500h1v1h-1zM396 501h1v1h-1zM403 501h1v1h-1zM395 482h1v1h-1zM404 482h1v1h-1zM396 483h1v1h-1zM403 483h1v1h-1zM397 484h1v1h-1zM402 484h1v1h-1zM398 485h1v1h-1zM401 485h1v1h-1zM399 486h2v1h-2zM399 487h2v1h-2zM398 488h1v1h-1zM401 488h1v1h-1zM397 489h1v1h-1zM402 489h1v1h-1zM396 490h1v1h-1zM403 490h1v1h-1zM395 471h1v1h-1zM404 471h1v1h-1zM396 472h1v1h-1zM403 472h1v1h-1zM397 473h1v1h-1zM402 473h1v1h-1zM398 474h1v1h-1zM401 474h1v1h-1zM399 475h2v1h-2zM399 476h2v1h-2zM398 477h1v1h-1zM401 477h1v1h-1zM397 478h1v1h-1zM402 478h1v1h-1zM396 479h1v1h-1zM403 479h1v1h-1zM395 459h1v1h-1zM404 459h1v1h-1zM396 460h1v1h-1zM403 460h1v1h-1zM397 461h1v1h-1zM402 461h1v1h-1zM398 462h1v1h-1zM401 462h1v1h-1zM399 463h2v1h-2zM399 464h2v1h-2zM398 465h1v1h-1zM401 465h1v1h-1zM397 466h1v1h-1zM402 466h1v1h-1zM396 467h1v1h-1zM403 467h1v1h-1zM395 448h1v1h-1zM404 448h1v1h-1zM396 449h1v1h-1zM403 449h1v1h-1zM397 450h1v1h-1zM402 450h1v1h-1zM398 451h1v1h-1zM401 451h1v1h-1zM399 452h2v1h-2zM399 453h2v1h-2zM398 454h1v1h-1zM401 454h1v1h-1zM397 455h1v1h-1zM402 455h1v1h-1zM396 456h1v1h-1zM403 456h1v1h-1zM395 437h1v1h-1zM404 437h1v1h-1zM396 438h1v1h-1zM403 438h1v1h-1zM397 439h1v1h-1zM402 439h1v1h-1zM398 440h1v1h-1zM401 440h1v1h-1zM399 441h2v1h-2zM399 442h2v1h-2zM398 443h1v1h-1zM401 443h1v1h-1zM397 444h1v1h-1zM402 444h1v1h-1zM396 445h1v1h-1zM403 445h1v1h-1zM395 426h1v1h-1zM404 426h1v1h-1zM396 427h1v1h-1zM403 427h1v1h-1zM397 428h1v1h-1zM402 428h1v1h-1zM398 429h1v1h-1zM401 429h1v1h-1zM399 430h2v1h-2zM399 431h2v1h-2zM398 432h1v1h-1zM401 432h1v1h-1zM397 433h1v1h-1zM402 433h1v1h-1zM396 434h1v1h-1zM403 434h1v1h-1zM395 414h1v1h-1zM404 414h1v1h-1zM396 415h1v1h-1zM403 415h1v1h-1zM397 416h1v1h-1zM402 416h1v1h-1zM398 417h1v1h-1zM401 417h1v1h-1zM399 418h2v1h-2zM399 419h2v1h-2zM398 420h1v1h-1zM401 420h1v1h-1zM397 421h1v1h-1zM402 421h1v1h-1zM396 422h1v1h-1zM403 422h1v1h-1zM395 403h1v1h-1zM404 403h1v1h-1zM396 404h1v1h-1zM403 404h1v1h-1zM397 405h1v1h-1zM402 405h1v1h-1zM398 406h1v1h-1zM401 406h1v1h-1zM399 407h2v1h-2zM399 408h2v1h-2zM398 409h1v1h-1zM401 409h1v1h-1zM397 410h1v1h-1zM402 410h1v1h-1zM396 411h1v1h-1zM403 411h1v1h-1zM395 392h1v1h-1zM404 392h1v1h-1zM396 393h1v1h-1zM403 393h1v1h-1zM397 394h1v1h-1zM402 394h1v1h-1zM398 395h1v1h-1zM401 395h1v1h-1zM399 396h2v1h-2zM399 397h2v1h-2zM398 398h1v1h-1zM401 398h1v1h-1zM397 399h1v1h-1zM402 399h1v1h-1zM396 400h1v1h-1zM403 400h1v1h-1zM395 381h1v1h-1zM404 381h1v1h-1zM396 382h1v1h-1zM403 382h1v1h-1zM397 383h1v1h-1zM402 383h1v1h-1zM398 384h1v1h-1zM401 384h1v1h-1zM399 385h2v1h-2zM399 386h2v1h-2zM398 387h1v1h-1zM401 387h1v1h-1zM397 388h1v1h-1zM402 388h1v1h-1zM396 389h1v1h-1zM403 389h1v1h-1zM395 369h1v1h-1zM404 369h1v1h-1zM396 370h1v1h-1zM403 370h1v1h-1zM397 371h1v1h-1zM402 371h1v1h-1zM398 372h1v1h-1zM401 372h1v1h-1zM399 373h2v1h-2zM399 374h2v1h-2zM398 375h1v1h-1zM401 375h1v1h-1zM397 376h1v1h-1zM402 376h1v1h-1zM396 377h1v1h-1zM403 377h1v1h-1zM395 358h1v1h-1zM404 358h1v1h-1zM396 359h1v1h-1zM403 359h1v1h-1zM397 360h1v1h-1zM402 360h1v1h-1zM398 361h1v1h-1zM401 361h1v1h-1zM399 362h2v1h-2zM399 363h2v1h-2zM398 364h1v1h-1zM401 364h1v1h-1zM397 365h1v1h-1zM402 365h1v1h-1zM396 366h1v1h-1zM403 366h1v1h-1zM395 347h1v1h-1zM404 347h1v1h-1zM396 348h1v1h-1zM403 348h1v1h-1zM397 349h1v1h-1zM402 349h1v1h-1zM398 350h1v1h-1zM401 350h1v1h-1zM399 351h2v1h-2zM399 352h2v1h-2zM398 353h1v1h-1zM401 353h1v1h-1zM397 354h1v1h-1zM402 354h1v1h-1zM396 355h1v1h-1zM403 355h1v1h-1zM395 335h1v1h-1zM404 335h1v1h-1zM396 336h1v1h-1zM403 336h1v1h-1zM397 337h1v1h-1zM402 337h1v1h-1zM398 338h1v1h-1zM401 338h1v1h-1zM399 339h2v1h-2zM399 340h2v1h-2zM398 341h1v1h-1zM401 341h1v1h-1zM397 342h1v1h-1zM402 342h1v1h-1zM396 343h1v1h-1zM403 343h1v1h-1zM395 313h1v1h-1zM404 313h1v1h-1zM396 314h1v1h-1zM403 314h1v1h-1zM397 315h1v1h-1zM402 315h1v1h-1zM398 316h1v1h-1zM401 316h1v1h-1zM399 317h2v1h-2zM399 318h2v1h-2zM398 319h1v1h-1zM401 319h1v1h-1zM397 320h1v1h-1zM402 320h1v1h-1zM396 321h1v1h-1zM403 321h1v1h-1zM395 302h1v1h-1zM404 302h1v1h-1zM396 303h1v1h-1zM403 303h1v1h-1zM397 304h1v1h-1zM402 304h1v1h-1zM398 305h1v1h-1zM401 305h1v1h-1zM399 306h2v1h-2zM399 307h2v1h-2zM398 308h1v1h-1zM401 308h1v1h-1zM397 309h1v1h-1zM402 309h1v1h-1zM396 310h1v1h-1zM403 310h1v1h-1zM395 290h1v1h-1zM404 290h1v1h-1zM396 291h1v1h-1zM403 291h1v1h-1zM397 292h1v1h-1zM402 292h1v1h-1zM398 293h1v1h-1zM401 293h1v1h-1zM399 294h2v1h-2zM399 295h2v1h-2zM398 296h1v1h-1zM401 296h1v1h-1zM397 297h1v1h-1zM402 297h1v1h-1zM396 298h1v1h-1zM403 298h1v1h-1zM395 279h1v1h-1zM404 279h1v1h-1zM396 280h1v1h-1zM403 280h1v1h-1zM397 281h1v1h-1zM402 281h1v1h-1zM398 282h1v1h-1zM401 282h1v1h-1zM399 283h2v1h-2zM399 284h2v1h-2zM398 285h1v1h-1zM401 285h1v1h-1zM397 286h1v1h-1zM402 286h1v1h-1zM396 287h1v1h-1zM403 287h1v1h-1zM395 268h1v1h-1zM404 268h1v1h-1zM396 269h1v1h-1zM403 269h1v1h-1zM397 270h1v1h-1zM402 270h1v1h-1zM398 271h1v1h-1zM401 271h1v1h-1zM399 272h2v1h-2zM399 273h2v1h-2zM398 274h1v1h-1zM401 274h1v1h-1zM397 275h1v1h-1zM402 275h1v1h-1zM396 276h1v1h-1zM403 276h1v1h-1zM418 313h1v1h-1zM427 313h1v1h-1zM419 314h1v1h-1zM426 314h1v1h-1zM420 315h1v1h-1zM425 315h1v1h-1zM421 316h1v1h-1zM424 316h1v1h-1zM422 317h2v1h-2zM422 318h2v1h-2zM421 319h1v1h-1zM424 319h1v1h-1zM420 320h1v1h-1zM425 320h1v1h-1zM419 321h1v1h-1zM426 321h1v1h-1zM418 302h1v1h-1zM427 302h1v1h-1zM419 303h1v1h-1zM426 303h1v1h-1zM420 304h1v1h-1zM425 304h1v1h-1zM421 305h1v1h-1zM424 305h1v1h-1zM422 306h2v1h-2zM422 307h2v1h-2zM421 308h1v1h-1zM424 308h1v1h-1zM420 309h1v1h-1zM425 309h1v1h-1zM419 310h1v1h-1zM426 310h1v1h-1zM418 290h1v1h-1zM427 290h1v1h-1zM419 291h1v1h-1zM426 291h1v1h-1zM420 292h1v1h-1zM425 292h1v1h-1zM421 293h1v1h-1zM424 293h1v1h-1zM422 294h2v1h-2zM422 295h2v1h-2zM421 296h1v1h-1zM424 296h1v1h-1zM420 297h1v1h-1zM425 297h1v1h-1zM419 298h1v1h-1zM426 298h1v1h-1zM418 279h1v1h-1zM427 279h1v1h-1zM419 280h1v1h-1zM426 280h1v1h-1zM420 281h1v1h-1zM425 281h1v1h-1zM421 282h1v1h-1zM424 282h1v1h-1zM422 283h2v1h-2zM422 284h2v1h-2zM421 285h1v1h-1zM424 285h1v1h-1zM420 286h1v1h-1zM425 286h1v1h-1zM419 287h1v1h-1zM426 287h1v1h-1zM440 516h1v1h-1zM449 516h1v1h-1zM441 517h1v1h-1zM448 517h1v1h-1zM442 518h1v1h-1zM447 518h1v1h-1zM443 519h1v1h-1zM446 519h1v1h-1zM444 520h2v1h-2zM444 521h2v1h-2zM443 522h1v1h-1zM446 522h1v1h-1zM442 523h1v1h-1zM447 523h1v1h-1zM441 524h1v1h-1zM448 524h1v1h-1zM440 505h1v1h-1zM449 505h1v1h-1zM441 506h1v1h-1zM448 506h1v1h-1zM442 507h1v1h-1zM447 507h1v1h-1zM443 508h1v1h-1zM446 508h1v1h-1zM444 509h2v1h-2zM444 510h2v1h-2zM443 511h1v1h-1zM446 511h1v1h-1zM442 512h1v1h-1zM447 512h1v1h-1zM441 513h1v1h-1zM448 513h1v1h-1zM440 493h1v1h-1zM449 493h1v1h-1zM441 494h1v1h-1zM448 494h1v1h-1zM442 495h1v1h-1zM447 495h1v1h-1zM443 496h1v1h-1zM446 496h1v1h-1zM444 497h2v1h-2zM444 498h2v1h-2zM443 499h1v1h-1zM446 499h1v1h-1zM442 500h1v1h-1zM447 500h1v1h-1zM441 501h1v1h-1zM448 501h1v1h-1zM440 482h1v1h-1zM449 482h1v1h-1zM441 483h1v1h-1zM448 483h1v1h-1zM442 484h1v1h-1zM447 484h1v1h-1zM443 485h1v1h-1zM446 485h1v1h-1zM444 486h2v1h-2zM444 487h2v1h-2zM443 488h1v1h-1zM446 488h1v1h-1zM442 489h1v1h-1zM447 489h1v1h-1zM441 490h1v1h-1zM448 490h1v1h-1zM440 471h1v1h-1zM449 471h1v1h-1zM441 472h1v1h-1zM448 472h1v1h-1zM442 473h1v1h-1zM447 473h1v1h-1zM443 474h1v1h-1zM446 474h1v1h-1zM444 475h2v1h-2zM444 476h2v1h-2zM443 477h1v1h-1zM446 477h1v1h-1zM442 478h1v1h-1zM447 478h1v1h-1zM441 479h1v1h-1zM448 479h1v1h-1zM440 448h1v1h-1zM449 448h1v1h-1zM441 449h1v1h-1zM448 449h1v1h-1zM442 450h1v1h-1zM447 450h1v1h-1zM443 451h1v1h-1zM446 451h1v1h-1zM444 452h2v1h-2zM444 453h2v1h-2zM443 454h1v1h-1zM446 454h1v1h-1zM442 455h1v1h-1zM447 455h1v1h-1zM441 456h1v1h-1zM448 456h1v1h-1zM440 437h1v1h-1zM449 437h1v1h-1zM441 438h1v1h-1zM448 438h1v1h-1zM442 439h1v1h-1zM447 439h1v1h-1zM443 440h1v1h-1zM446 440h1v1h-1zM444 441h2v1h-2zM444 442h2v1h-2zM443 443h1v1h-1zM446 443h1v1h-1zM442 444h1v1h-1zM447 444h1v1h-1zM441 445h1v1h-1zM448 445h1v1h-1zM440 426h1v1h-1zM449 426h1v1h-1zM441 427h1v1h-1zM448 427h1v1h-1zM442 428h1v1h-1zM447 428h1v1h-1zM443 429h1v1h-1zM446 429h1v1h-1zM444 430h2v1h-2zM444 431h2v1h-2zM443 432h1v1h-1zM446 432h1v1h-1zM442 433h1v1h-1zM447 433h1v1h-1zM441 434h1v1h-1zM448 434h1v1h-1zM440 414h1v1h-1zM449 414h1v1h-1zM441 415h1v1h-1zM448 415h1v1h-1zM442 416h1v1h-1zM447 416h1v1h-1zM443 417h1v1h-1zM446 417h1v1h-1zM444 418h2v1h-2zM444 419h2v1h-2zM443 420h1v1h-1zM446 420h1v1h-1zM442 421h1v1h-1zM447 421h1v1h-1zM441 422h1v1h-1zM448 422h1v1h-1zM440 403h1v1h-1zM449 403h1v1h-1zM441 404h1v1h-1zM448 404h1v1h-1zM442 405h1v1h-1zM447 405h1v1h-1zM443 406h1v1h-1zM446 406h1v1h-1zM444 407h2v1h-2zM444 408h2v1h-2zM443 409h1v1h-1zM446 409h1v1h-1zM442 410h1v1h-1zM447 410h1v1h-1zM441 411h1v1h-1zM448 411h1v1h-1zM440 392h1v1h-1zM449 392h1v1h-1zM441 393h1v1h-1zM448 393h1v1h-1zM442 394h1v1h-1zM447 394h1v1h-1zM443 395h1v1h-1zM446 395h1v1h-1zM444 396h2v1h-2zM444 397h2v1h-2zM443 398h1v1h-1zM446 398h1v1h-1zM442 399h1v1h-1zM447 399h1v1h-1zM441 400h1v1h-1zM448 400h1v1h-1zM440 381h1v1h-1zM449 381h1v1h-1zM441 382h1v1h-1zM448 382h1v1h-1zM442 383h1v1h-1zM447 383h1v1h-1zM443 384h1v1h-1zM446 384h1v1h-1zM444 385h2v1h-2zM444 386h2v1h-2zM443 387h1v1h-1zM446 387h1v1h-1zM442 388h1v1h-1zM447 388h1v1h-1zM441 389h1v1h-1zM448 389h1v1h-1zM440 369h1v1h-1zM449 369h1v1h-1zM441 370h1v1h-1zM448 370h1v1h-1zM442 371h1v1h-1zM447 371h1v1h-1zM443 372h1v1h-1zM446 372h1v1h-1zM444 373h2v1h-2zM444 374h2v1h-2zM443 375h1v1h-1zM446 375h1v1h-1zM442 376h1v1h-1zM447 376h1v1h-1zM441 377h1v1h-1zM448 377h1v1h-1zM440 358h1v1h-1zM449 358h1v1h-1zM441 359h1v1h-1zM448 359h1v1h-1zM442 360h1v1h-1zM447 360h1v1h-1zM443 361h1v1h-1zM446 361h1v1h-1zM444 362h2v1h-2zM444 363h2v1h-2zM443 364h1v1h-1zM446 364h1v1h-1zM442 365h1v1h-1zM447 365h1v1h-1zM441 366h1v1h-1zM448 366h1v1h-1zM440 347h1v1h-1zM449 347h1v1h-1zM441 348h1v1h-1zM448 348h1v1h-1zM442 349h1v1h-1zM447 349h1v1h-1zM443 350h1v1h-1zM446 350h1v1h-1zM444 351h2v1h-2zM444 352h2v1h-2zM443 353h1v1h-1zM446 353h1v1h-1zM442 354h1v1h-1zM447 354h1v1h-1zM441 355h1v1h-1zM448 355h1v1h-1zM440 335h1v1h-1zM449 335h1v1h-1zM441 336h1v1h-1zM448 336h1v1h-1zM442 337h1v1h-1zM447 337h1v1h-1zM443 338h1v1h-1zM446 338h1v1h-1zM444 339h2v1h-2zM444 340h2v1h-2zM443 341h1v1h-1zM446 341h1v1h-1zM442 342h1v1h-1zM447 342h1v1h-1zM441 343h1v1h-1zM448 343h1v1h-1zM440 324h1v1h-1zM449 324h1v1h-1zM441 325h1v1h-1zM448 325h1v1h-1zM442 326h1v1h-1zM447 326h1v1h-1zM443 327h1v1h-1zM446 327h1v1h-1zM444 328h2v1h-2zM444 329h2v1h-2zM443 330h1v1h-1zM446 330h1v1h-1zM442 331h1v1h-1zM447 331h1v1h-1zM441 332h1v1h-1zM448 332h1v1h-1zM440 313h1v1h-1zM449 313h1v1h-1zM441 314h1v1h-1zM448 314h1v1h-1zM442 315h1v1h-1zM447 315h1v1h-1zM443 316h1v1h-1zM446 316h1v1h-1zM444 317h2v1h-2zM444 318h2v1h-2zM443 319h1v1h-1zM446 319h1v1h-1zM442 320h1v1h-1zM447 320h1v1h-1zM441 321h1v1h-1zM448 321h1v1h-1zM440 302h1v1h-1zM449 302h1v1h-1zM441 303h1v1h-1zM448 303h1v1h-1zM442 304h1v1h-1zM447 304h1v1h-1zM443 305h1v1h-1zM446 305h1v1h-1zM444 306h2v1h-2zM444 307h2v1h-2zM443 308h1v1h-1zM446 308h1v1h-1zM442 309h1v1h-1zM447 309h1v1h-1zM441 310h1v1h-1zM448 310h1v1h-1zM440 290h1v1h-1zM449 290h1v1h-1zM441 291h1v1h-1zM448 291h1v1h-1zM442 292h1v1h-1zM447 292h1v1h-1zM443 293h1v1h-1zM446 293h1v1h-1zM444 294h2v1h-2zM444 295h2v1h-2zM443 296h1v1h-1zM446 296h1v1h-1zM442 297h1v1h-1zM447 297h1v1h-1zM441 298h1v1h-1zM448 298h1v1h-1zM463 313h1v1h-1zM472 313h1v1h-1zM464 314h1v1h-1zM471 314h1v1h-1zM465 315h1v1h-1zM470 315h1v1h-1zM466 316h1v1h-1zM469 316h1v1h-1zM467 317h2v1h-2zM467 318h2v1h-2zM466 319h1v1h-1zM469 319h1v1h-1zM465 320h1v1h-1zM470 320h1v1h-1zM464 321h1v1h-1zM471 321h1v1h-1zM463 302h1v1h-1zM472 302h1v1h-1zM464 303h1v1h-1zM471 303h1v1h-1zM465 304h1v1h-1zM470 304h1v1h-1zM466 305h1v1h-1zM469 305h1v1h-1zM467 306h2v1h-2zM467 307h2v1h-2zM466 308h1v1h-1zM469 308h1v1h-1zM465 309h1v1h-1zM470 309h1v1h-1zM464 310h1v1h-1zM471 310h1v1h-1zM485 381h1v1h-1zM494 381h1v1h-1zM486 382h1v1h-1zM493 382h1v1h-1zM487 383h1v1h-1zM492 383h1v1h-1zM488 384h1v1h-1zM491 384h1v1h-1zM489 385h2v1h-2zM489 386h2v1h-2zM488 387h1v1h-1zM491 387h1v1h-1zM487 388h1v1h-1zM492 388h1v1h-1zM486 389h1v1h-1zM493 389h1v1h-1zM485 369h1v1h-1zM494 369h1v1h-1zM486 370h1v1h-1zM493 370h1v1h-1zM487 371h1v1h-1zM492 371h1v1h-1zM488 372h1v1h-1zM491 372h1v1h-1zM489 373h2v1h-2zM489 374h2v1h-2zM488 375h1v1h-1zM491 375h1v1h-1zM487 376h1v1h-1zM492 376h1v1h-1zM486 377h1v1h-1zM493 377h1v1h-1zM508 392h1v1h-1zM517 392h1v1h-1zM509 393h1v1h-1zM516 393h1v1h-1zM510 394h1v1h-1zM515 394h1v1h-1zM511 395h1v1h-1zM514 395h1v1h-1zM512 396h2v1h-2zM512 397h2v1h-2zM511 398h1v1h-1zM514 398h1v1h-1zM510 399h1v1h-1zM515 399h1v1h-1zM509 400h1v1h-1zM516 400h1v1h-1zM508 381h1v1h-1zM517 381h1v1h-1zM509 382h1v1h-1zM516 382h1v1h-1zM510 383h1v1h-1zM515 383h1v1h-1zM511 384h1v1h-1zM514 384h1v1h-1zM512 385h2v1h-2zM512 386h2v1h-2zM511 387h1v1h-1zM514 387h1v1h-1zM510 388h1v1h-1zM515 388h1v1h-1zM509 389h1v1h-1zM516 389h1v1h-1zM508 369h1v1h-1zM517 369h1v1h-1zM509 370h1v1h-1zM516 370h1v1h-1zM510 371h1v1h-1zM515 371h1v1h-1zM511 372h1v1h-1zM514 372h1v1h-1zM512 373h2v1h-2zM512 374h2v1h-2zM511 375h1v1h-1zM514 375h1v1h-1zM510 376h1v1h-1zM515 376h1v1h-1zM509 377h1v1h-1zM516 377h1v1h-1zM508 358h1v1h-1zM517 358h1v1h-1zM509 359h1v1h-1zM516 359h1v1h-1zM510 360h1v1h-1zM515 360h1v1h-1zM511 361h1v1h-1zM514 361h1v1h-1zM512 362h2v1h-2zM512 363h2v1h-2zM511 364h1v1h-1zM514 364h1v1h-1zM510 365h1v1h-1zM515 365h1v1h-1zM509 366h1v1h-1zM516 366h1v1h-1zM508 347h1v1h-1zM517 347h1v1h-1zM509 348h1v1h-1zM516 348h1v1h-1zM510 349h1v1h-1zM515 349h1v1h-1zM511 350h1v1h-1zM514 350h1v1h-1zM512 351h2v1h-2zM512 352h2v1h-2zM511 353h1v1h-1zM514 353h1v1h-1zM510 354h1v1h-1zM515 354h1v1h-1zM509 355h1v1h-1zM516 355h1v1h-1zM508 335h1v1h-1zM517 335h1v1h-1zM509 336h1v1h-1zM516 336h1v1h-1zM510 337h1v1h-1zM515 337h1v1h-1zM511 338h1v1h-1zM514 338h1v1h-1zM512 339h2v1h-2zM512 340h2v1h-2zM511 341h1v1h-1zM514 341h1v1h-1zM510 342h1v1h-1zM515 342h1v1h-1zM509 343h1v1h-1zM516 343h1v1h-1zM530 493h1v1h-1zM539 493h1v1h-1zM531 494h1v1h-1zM538 494h1v1h-1zM532 495h1v1h-1zM537 495h1v1h-1zM533 496h1v1h-1zM536 496h1v1h-1zM534 497h2v1h-2zM534 498h2v1h-2zM533 499h1v1h-1zM536 499h1v1h-1zM532 500h1v1h-1zM537 500h1v1h-1zM531 501h1v1h-1zM538 501h1v1h-1zM530 482h1v1h-1zM539 482h1v1h-1zM531 483h1v1h-1zM538 483h1v1h-1zM532 484h1v1h-1zM537 484h1v1h-1zM533 485h1v1h-1zM536 485h1v1h-1zM534 486h2v1h-2zM534 487h2v1h-2zM533 488h1v1h-1zM536 488h1v1h-1zM532 489h1v1h-1zM537 489h1v1h-1zM531 490h1v1h-1zM538 490h1v1h-1zM553 550h1v1h-1zM562 550h1v1h-1zM554 551h1v1h-1zM561 551h1v1h-1zM555 552h1v1h-1zM560 552h1v1h-1zM556 553h1v1h-1zM559 553h1v1h-1zM557 554h2v1h-2zM557 555h2v1h-2zM556 556h1v1h-1zM559 556h1v1h-1zM555 557h1v1h-1zM560 557h1v1h-1zM554 558h1v1h-1zM561 558h1v1h-1zM553 538h1v1h-1zM562 538h1v1h-1zM554 539h1v1h-1zM561 539h1v1h-1zM555 540h1v1h-1zM560 540h1v1h-1zM556 541h1v1h-1zM559 541h1v1h-1zM557 542h2v1h-2zM557 543h2v1h-2zM556 544h1v1h-1zM559 544h1v1h-1zM555 545h1v1h-1zM560 545h1v1h-1zM554 546h1v1h-1zM561 546h1v1h-1zM553 527h1v1h-1zM562 527h1v1h-1zM554 528h1v1h-1zM561 528h1v1h-1zM555 529h1v1h-1zM560 529h1v1h-1zM556 530h1v1h-1zM559 530h1v1h-1zM557 531h2v1h-2zM557 532h2v1h-2zM556 533h1v1h-1zM559 533h1v1h-1zM555 534h1v1h-1zM560 534h1v1h-1zM554 535h1v1h-1zM561 535h1v1h-1zM553 516h1v1h-1zM562 516h1v1h-1zM554 517h1v1h-1zM561 517h1v1h-1zM555 518h1v1h-1zM560 518h1v1h-1zM556 519h1v1h-1zM559 519h1v1h-1zM557 520h2v1h-2zM557 521h2v1h-2zM556 522h1v1h-1zM559 522h1v1h-1zM555 523h1v1h-1zM560 523h1v1h-1zM554 524h1v1h-1zM561 524h1v1h-1zM553 505h1v1h-1zM562 505h1v1h-1zM554 506h1v1h-1zM561 506h1v1h-1zM555 507h1v1h-1zM560 507h1v1h-1zM556 508h1v1h-1zM559 508h1v1h-1zM557 509h2v1h-2zM557 510h2v1h-2zM556 511h1v1h-1zM559 511h1v1h-1zM555 512h1v1h-1zM560 512h1v1h-1zM554 513h1v1h-1zM561 513h1v1h-1zM553 493h1v1h-1zM562 493h1v1h-1zM554 494h1v1h-1zM561 494h1v1h-1zM555 495h1v1h-1zM560 495h1v1h-1zM556 496h1v1h-1zM559 496h1v1h-1zM557 497h2v1h-2zM557 498h2v1h-2zM556 499h1v1h-1zM559 499h1v1h-1zM555 500h1v1h-1zM560 500h1v1h-1zM554 501h1v1h-1zM561 501h1v1h-1zM553 482h1v1h-1zM562 482h1v1h-1zM554 483h1v1h-1zM561 483h1v1h-1zM555 484h1v1h-1zM560 484h1v1h-1zM556 485h1v1h-1zM559 485h1v1h-1zM557 486h2v1h-2zM557 487h2v1h-2zM556 488h1v1h-1zM559 488h1v1h-1zM555 489h1v1h-1zM560 489h1v1h-1zM554 490h1v1h-1zM561 490h1v1h-1zM553 471h1v1h-1zM562 471h1v1h-1zM554 472h1v1h-1zM561 472h1v1h-1zM555 473h1v1h-1zM560 473h1v1h-1zM556 474h1v1h-1zM559 474h1v1h-1zM557 475h2v1h-2zM557 476h2v1h-2zM556 477h1v1h-1zM559 477h1v1h-1zM555 478h1v1h-1zM560 478h1v1h-1zM554 479h1v1h-1zM561 479h1v1h-1zM553 459h1v1h-1zM562 459h1v1h-1zM554 460h1v1h-1zM561 460h1v1h-1zM555 461h1v1h-1zM560 461h1v1h-1zM556 462h1v1h-1zM559 462h1v1h-1zM557 463h2v1h-2zM557 464h2v1h-2zM556 465h1v1h-1zM559 465h1v1h-1zM555 466h1v1h-1zM560 466h1v1h-1zM554 467h1v1h-1zM561 467h1v1h-1zM553 448h1v1h-1zM562 448h1v1h-1zM554 449h1v1h-1zM561 449h1v1h-1zM555 450h1v1h-1zM560 450h1v1h-1zM556 451h1v1h-1zM559 451h1v1h-1zM557 452h2v1h-2zM557 453h2v1h-2zM556 454h1v1h-1zM559 454h1v1h-1zM555 455h1v1h-1zM560 455h1v1h-1zM554 456h1v1h-1zM561 456h1v1h-1zM553 437h1v1h-1zM562 437h1v1h-1zM554 438h1v1h-1zM561 438h1v1h-1zM555 439h1v1h-1zM560 439h1v1h-1zM556 440h1v1h-1zM559 440h1v1h-1zM557 441h2v1h-2zM557 442h2v1h-2zM556 443h1v1h-1zM559 443h1v1h-1zM555 444h1v1h-1zM560 444h1v1h-1zM554 445h1v1h-1zM561 445h1v1h-1zM575 471h1v1h-1zM584 471h1v1h-1zM576 472h1v1h-1zM583 472h1v1h-1zM577 473h1v1h-1zM582 473h1v1h-1zM578 474h1v1h-1zM581 474h1v1h-1zM579 475h2v1h-2zM579 476h2v1h-2zM578 477h1v1h-1zM581 477h1v1h-1zM577 478h1v1h-1zM582 478h1v1h-1zM576 479h1v1h-1zM583 479h1v1h-1zM575 459h1v1h-1zM584 459h1v1h-1zM576 460h1v1h-1zM583 460h1v1h-1zM577 461h1v1h-1zM582 461h1v1h-1zM578 462h1v1h-1zM581 462h1v1h-1zM579 463h2v1h-2zM579 464h2v1h-2zM578 465h1v1h-1zM581 465h1v1h-1zM577 466h1v1h-1zM582 466h1v1h-1zM576 467h1v1h-1zM583 467h1v1h-1zM575 448h1v1h-1zM584 448h1v1h-1zM576 449h1v1h-1zM583 449h1v1h-1zM577 450h1v1h-1zM582 450h1v1h-1zM578 451h1v1h-1zM581 451h1v1h-1zM579 452h2v1h-2zM579 453h2v1h-2zM578 454h1v1h-1zM581 454h1v1h-1zM577 455h1v1h-1zM582 455h1v1h-1zM576 456h1v1h-1zM583 456h1v1h-1zM575 437h1v1h-1zM584 437h1v1h-1zM576 438h1v1h-1zM583 438h1v1h-1zM577 439h1v1h-1zM582 439h1v1h-1zM578 440h1v1h-1zM581 440h1v1h-1zM579 441h2v1h-2zM579 442h2v1h-2zM578 443h1v1h-1zM581 443h1v1h-1zM577 444h1v1h-1zM582 444h1v1h-1zM576 445h1v1h-1zM583 445h1v1h-1zM575 414h1v1h-1zM584 414h1v1h-1zM576 415h1v1h-1zM583 415h1v1h-1zM577 416h1v1h-1zM582 416h1v1h-1zM578 417h1v1h-1zM581 417h1v1h-1zM579 418h2v1h-2zM579 419h2v1h-2zM578 420h1v1h-1zM581 420h1v1h-1zM577 421h1v1h-1zM582 421h1v1h-1zM576 422h1v1h-1zM583 422h1v1h-1zM575 403h1v1h-1zM584 403h1v1h-1zM576 404h1v1h-1zM583 404h1v1h-1zM577 405h1v1h-1zM582 405h1v1h-1zM578 406h1v1h-1zM581 406h1v1h-1zM579 407h2v1h-2zM579 408h2v1h-2zM578 409h1v1h-1zM581 409h1v1h-1zM577 410h1v1h-1zM582 410h1v1h-1zM576 411h1v1h-1zM583 411h1v1h-1zM575 392h1v1h-1zM584 392h1v1h-1zM576 393h1v1h-1zM583 393h1v1h-1zM577 394h1v1h-1zM582 394h1v1h-1zM578 395h1v1h-1zM581 395h1v1h-1zM579 396h2v1h-2zM579 397h2v1h-2zM578 398h1v1h-1zM581 398h1v1h-1zM577 399h1v1h-1zM582 399h1v1h-1zM576 400h1v1h-1zM583 400h1v1h-1zM575 381h1v1h-1zM584 381h1v1h-1zM576 382h1v1h-1zM583 382h1v1h-1zM577 383h1v1h-1zM582 383h1v1h-1zM578 384h1v1h-1zM581 384h1v1h-1zM579 385h2v1h-2zM579 386h2v1h-2zM578 387h1v1h-1zM581 387h1v1h-1zM577 388h1v1h-1zM582 388h1v1h-1zM576 389h1v1h-1zM583 389h1v1h-1zM575 369h1v1h-1zM584 369h1v1h-1zM576 370h1v1h-1zM583 370h1v1h-1zM577 371h1v1h-1zM582 371h1v1h-1zM578 372h1v1h-1zM581 372h1v1h-1zM579 373h2v1h-2zM579 374h2v1h-2zM578 375h1v1h-1zM581 375h1v1h-1zM577 376h1v1h-1zM582 376h1v1h-1zM576 377h1v1h-1zM583 377h1v1h-1zM575 358h1v1h-1zM584 358h1v1h-1zM576 359h1v1h-1zM583 359h1v1h-1zM577 360h1v1h-1zM582 360h1v1h-1zM578 361h1v1h-1zM581 361h1v1h-1zM579 362h2v1h-2zM579 363h2v1h-2zM578 364h1v1h-1zM581 364h1v1h-1zM577 365h1v1h-1zM582 365h1v1h-1zM576 366h1v1h-1zM583 366h1v1h-1zM575 347h1v1h-1zM584 347h1v1h-1zM576 348h1v1h-1zM583 348h1v1h-1zM577 349h1v1h-1zM582 349h1v1h-1zM578 350h1v1h-1zM581 350h1v1h-1zM579 351h2v1h-2zM579 352h2v1h-2zM578 353h1v1h-1zM581 353h1v1h-1zM577 354h1v1h-1zM582 354h1v1h-1zM576 355h1v1h-1zM583 355h1v1h-1zM575 324h1v1h-1zM584 324h1v1h-1zM576 325h1v1h-1zM583 325h1v1h-1zM577 326h1v1h-1zM582 326h1v1h-1zM578 327h1v1h-1zM581 327h1v1h-1zM579 328h2v1h-2zM579 329h2v1h-2zM578 330h1v1h-1zM581 330h1v1h-1zM577 331h1v1h-1zM582 331h1v1h-1zM576 332h1v1h-1zM583 332h1v1h-1zM575 313h1v1h-1zM584 313h1v1h-1zM576 314h1v1h-1zM583 314h1v1h-1zM577 315h1v1h-1zM582 315h1v1h-1zM578 316h1v1h-1zM581 316h1v1h-1zM579 317h2v1h-2zM579 318h2v1h-2zM578 319h1v1h-1zM581 319h1v1h-1zM577 320h1v1h-1zM582 320h1v1h-1zM576 321h1v1h-1zM583 321h1v1h-1zM575 290h1v1h-1zM584 290h1v1h-1zM576 291h1v1h-1zM583 291h1v1h-1zM577 292h1v1h-1zM582 292h1v1h-1zM578 293h1v1h-1zM581 293h1v1h-1zM579 294h2v1h-2zM579 295h2v1h-2zM578 296h1v1h-1zM581 296h1v1h-1zM577 297h1v1h-1zM582 297h1v1h-1zM576 298h1v1h-1zM583 298h1v1h-1zM575 279h1v1h-1zM584 279h1v1h-1zM576 280h1v1h-1zM583 280h1v1h-1zM577 281h1v1h-1zM582 281h1v1h-1zM578 282h1v1h-1zM581 282h1v1h-1zM579 283h2v1h-2zM579 284h2v1h-2zM578 285h1v1h-1zM581 285h1v1h-1zM577 286h1v1h-1zM582 286h1v1h-1zM576 287h1v1h-1zM583 287h1v1h-1z" fill="#0000FF"/><path d="M72 335h3v1h-3zM70 336h2v1h-2zM75 336h2v1h-2zM70 337h1v1h-1zM76 337h1v1h-1zM69 338h1v1h-1zM77 338h1v1h-1zM69 339h1v1h-1zM77 339h1v1h-1zM69 340h1v1h-1zM77 340h1v1h-1zM70 341h1v1h-1zM76 341h1v1h-1zM70 342h2v1h-2zM75 342h2v1h-2zM72 343h3v1h-3zM72 324h3v1h-3zM70 325h2v1h-2zM75 325h2v1h-2zM70 326h1v1h-1zM76 326h1v1h-1zM69 327h1v1h-1zM77 327h1v1h-1zM69 328h1v1h-1zM77 328h1v1h-1zM69 329h1v1h-1zM77 329h1v1h-1zM70 330h1v1h-1zM76 330h1v1h-1zM70 331h2v1h-2zM75 331h2v1h-2zM72 332h3v1h-3zM72 313h3v1h-3zM70 314h2v1h-2zM75 314h2v1h-2zM70 315h1v1h-1zM76 315h1v1h-1zM69 316h1v1h-1zM77 316h1v1h-1zM69 317h1v1h-1zM77 317h1v1h-1zM69 318h1v1h-1zM77 318h1v1h-1zM70 319h1v1h-1zM76 319h1v1h-1zM70 320h2v1h-2zM75 320h2v1h-2zM72 321h3v1h-3zM72 302h3v1h-3zM70 303h2v1h-2zM75 303h2v1h-2zM70 304h1v1h-1zM76 304h1v1h-1zM69 305h1v1h-1zM77 305h1v1h-1zM69 306h1v1h-1zM77 306h1v1h-1zM69 307h1v1h-1zM77 307h1v1h-1zM70 308h1v1h-1zM76 308h1v1h-1zM70 309h2v1h-2zM75 309h2v1h-2zM72 310h3v1h-3zM94 268h3v1h-3zM92 269h2v1h-2zM97 269h2v1h-2zM92 270h1v1h-1zM98 270h1v1h-1zM91 271h1v1h-1zM99 271h1v1h-1zM91 272h1v1h-1zM99 272h1v1h-1zM91 273h1v1h-1zM99 273h1v1h-1zM92 274h1v1h-1zM98 274h1v1h-1zM92 275h2v1h-2zM97 275h2v1h-2zM94 276h3v1h-3zM94 257h3v1h-3zM92 258h2v1h-2zM97 258h2v1h-2zM92 259h1v1h-1zM98 259h1v1h-1zM91 260h1v1h-1zM99 260h1v1h-1zM91 261h1v1h-1zM99 261h1v1h-1zM91 262h1v1h-1zM99 262h1v1h-1zM92 263h1v1h-1zM98 263h1v1h-1zM92 264h2v1h-2zM97 264h2v1h-2zM94 265h3v1h-3zM94 245h3v1h-3zM92 246h2v1h-2zM97 246h2v1h-2zM92 247h1v1h-1zM98 247h1v1h-1zM91 248h1v1h-1zM99 248h1v1h-1zM91 249h1v1h-1zM99 249h1v1h-1zM91 250h1v1h-1zM99 250h1v1h-1zM92 251h1v1h-1zM98 251h1v1h-1zM92 252h2v1h-2zM97 252h2v1h-2zM94 253h3v1h-3zM94 234h3v1h-3zM92 235h2v1h-2zM97 235h2v1h-2zM92 236h1v1h-1zM98 236h1v1h-1zM91 237h1v1h-1zM99 237h1v1h-1zM91 238h1v1h-1zM99 238h1v1h-1zM91 239h1v1h-1zM99 239h1v1h-1zM92 240h1v1h-1zM98 240h1v1h-1zM92 241h2v1h-2zM97 241h2v1h-2zM94 242h3v1h-3zM117 358h3v1h-3zM115 359h2v1h-2zM120 359h2v1h-2zM115 360h1v1h-1zM121 360h1v1h-1zM114 361h1v1h-1zM122 361h1v1h-1zM114 362h1v1h-1zM122 362h1v1h-1zM114 363h1v1h-1zM122 363h1v1h-1zM115 364h1v1h-1zM121 364h1v1h-1zM115 365h2v1h-2zM120 365h2v1h-2zM117 366h3v1h-3zM117 347h3v1h-3zM115 348h2v1h-2zM120 348h2v1h-2zM115 349h1v1h-1zM121 349h1v1h-1zM114 350h1v1h-1zM122 350h1v1h-1zM114 351h1v1h-1zM122 351h1v1h-1zM114 352h1v1h-1zM122 352h1v1h-1zM115 353h1v1h-1zM121 353h1v1h-1zM115 354h2v1h-2zM120 354h2v1h-2zM117 355h3v1h-3zM117 335h3v1h-3zM115 336h2v1h-2zM120 336h2v1h-2zM115 337h1v1h-1zM121 337h1v1h-1zM114 338h1v1h-1zM122 338h1v1h-1zM114 339h1v1h-1zM122 339h1v1h-1zM114 340h1v1h-1zM122 340h1v1h-1zM115 341h1v1h-1zM121 341h1v1h-1zM115 342h2v1h-2zM120 342h2v1h-2zM117 343h3v1h-3zM117 324h3v1h-3zM115 325h2v1h-2zM120 325h2v1h-2zM115 326h1v1h-1zM121 326h1v1h-1zM114 327h1v1h-1zM122 327h1v1h-1zM114 328h1v1h-1zM122 328h1v1h-1zM114 329h1v1h-1zM122 329h1v1h-1zM115 330h1v1h-1zM121 330h1v1h-1zM115 331h2v1h-2zM120 331h2v1h-2zM117 332h3v1h-3zM117 313h3v1h-3zM115 314h2v1h-2zM120 314h2v1h-2zM115 315h1v1h-1zM121 315h1v1h-1zM114 316h1v1h-1zM122 316h1v1h-1zM114 317h1v1h-1zM122 317h1v1h-1zM114 318h1v1h-1zM122 318h1v1h-1zM115 319h1v1h-1zM121 319h1v1h-1zM115 320h2v1h-2zM120 320h2v1h-2zM117 321h3v1h-3zM117 302h3v1h-3zM115 303h2v1h-2zM120 303h2v1h-2zM115 304h1v1h-1zM121 304h1v1h-1zM114 305h1v1h-1zM122 305h1v1h-1zM114 306h1v1h-1zM122 306h1v1h-1zM114 307h1v1h-1zM122 307h1v1h-1zM115 308h1v1h-1zM121 308h1v1h-1zM115 309h2v1h-2zM120 309h2v1h-2zM117 310h3v1h-3zM117 290h3v1h-3zM115 291h2v1h-2zM120 291h2v1h-2zM115 292h1v1h-1zM121 292h1v1h-1zM114 293h1v1h-1zM122 293h1v1h-1zM114 294h1v1h-1zM122 294h1v1h-1zM114 295h1v1h-1zM122 295h1v1h-1zM115 296h1v1h-1zM121 296h1v1h-1zM115 297h2v1h-2zM120 297h2v1h-2zM117 298h3v1h-3zM117 279h3v1h-3zM115 280h2v1h-2zM120 280h2v1h-2zM115 281h1v1h-1zM121 281h1v1h-1zM114 282h1v1h-1zM122 282h1v1h-1zM114 283h1v1h-1zM122 283h1v1h-1zM114 284h1v1h-1zM122 284h1v1h-1zM115 285h1v1h-1zM121 285h1v1h-1zM115 286h2v1h-2zM120 286h2v1h-2zM117 287h3v1h-3zM117 268h3v1h-3zM115 269h2v1h-2zM120 269h2v1h-2zM115 270h1v1h-1zM121 270h1v1h-1zM114 271h1v1h-1zM122 271h1v1h-1zM114 272h1v1h-1zM122 272h1v1h-1zM114 273h1v1h-1zM122 273h1v1h-1zM115 274h1v1h-1zM121 274h1v1h-1zM115 275h2v1h-2zM120 275h2v1h-2zM117 276h3v1h-3zM117 257h3v1h-3zM115 258h2v1h-2zM120 258h2v1h-2zM115 259h1v1h-1zM121 259h1v1h-1zM114 260h1v1h-1zM122 260h1v1h-1zM114 261h1v1h-1zM122 261h1v1h-1zM114 262h1v1h-1zM122 262h1v1h-1zM115 263h1v1h-1zM121 263h1v1h-1zM115 264h2v1h-2zM120 264h2v1h-2zM117 265h3v1h-3zM117 245h3v1h-3zM115 246h2v1h-2zM120 246h2v1h-2zM115 247h1v1h-1zM121 247h1v1h-1zM114 248h1v1h-1zM122 248h1v1h-1zM114 249h1v1h-1zM122 249h1v1h-1zM114 250h1v1h-1zM122 250h1v1h-1zM115 251h1v1h-1zM121 251h1v1h-1zM115 252h2v1h-2zM120 252h2v1h-2zM117 253h3v1h-3zM117 234h3v1h-3zM115 235h2v1h-2zM120 235h2v1h-2zM115 236h1v1h-1zM121 236h1v1h-1zM114 237h1v1h-1zM122 237h1v1h-1zM114 238h1v1h-1zM122 238h1v1h-1zM114 239h1v1h-1zM122 239h1v1h-1zM115 240h1v1h-1zM121 240h1v1h-1zM115 241h2v1h-2zM120 241h2v1h-2zM117 242h3v1h-3zM117 223h3v1h-3zM115 224h2v1h-2zM120 224h2v1h-2zM115 225h1v1h-1zM121 225h1v1h-1zM114 226h1v1h-1zM122 226h1v1h-1zM114 227h1v1h-1zM122 227h1v1h-1zM114 228h1v1h-1zM122 228h1v1h-1zM115 229h1v1h-1zM121 229h1v1h-1zM115 230h2v1h-2zM120 230h2v1h-2zM117 231h3v1h-3zM117 212h3v1h-3zM115 213h2v1h-2zM120 213h2v1h-2zM115 214h1v1h-1zM121 214h1v1h-1zM114 215h1v1h-1zM122 215h1v1h-1zM114 216h1v1h-1zM122 216h1v1h-1zM114 217h1v1h-1zM122 217h1v1h-1zM115 218h1v1h-1zM121 218h1v1h-1zM115 219h2v1h-2zM120 219h2v1h-2zM117 220h3v1h-3zM139 448h3v1h-3zM137 449h2v1h-2zM142 449h2v1h-2zM137 450h1v1h-1zM143 450h1v1h-1zM136 451h1v1h-1zM144 451h1v1h-1zM136 452h1v1h-1zM144 452h1v1h-1zM136 453h1v1h-1zM144 453h1v1h-1zM137 454h1v1h-1zM143 454h1v1h-1zM137 455h2v1h-2zM142 455h2v1h-2zM139 456h3v1h-3zM139 437h3v1h-3zM137 438h2v1h-2zM142 438h2v1h-2zM137 439h1v1h-1zM143 439h1v1h-1zM136 440h1v1h-1zM144 440h1v1h-1zM136 441h1v1h-1zM144 441h1v1h-1zM136 442h1v1h-1zM144 442h1v1h-1zM137 443h1v1h-1zM143 443h1v1h-1zM137 444h2v1h-2zM142 444h2v1h-2zM139 445h3v1h-3zM139 426h3v1h-3zM137 427h2v1h-2zM142 427h2v1h-2zM137 428h1v1h-1zM143 428h1v1h-1zM136 429h1v1h-1zM144 429h1v1h-1zM136 430h1v1h-1zM144 430h1v1h-1zM136 431h1v1h-1zM144 431h1v1h-1zM137 432h1v1h-1zM143 432h1v1h-1zM137 433h2v1h-2zM142 433h2v1h-2zM139 434h3v1h-3zM139 414h3v1h-3zM137 415h2v1h-2zM142 415h2v1h-2zM137 416h1v1h-1zM143 416h1v1h-1zM136 417h1v1h-1zM144 417h1v1h-1zM136 418h1v1h-1zM144 418h1v1h-1zM136 419h1v1h-1zM144 419h1v1h-1zM137 420h1v1h-1zM143 420h1v1h-1zM137 421h2v1h-2zM142 421h2v1h-2zM139 422h3v1h-3zM139 403h3v1h-3zM137 404h2v1h-2zM142 404h2v1h-2zM137 405h1v1h-1zM143 405h1v1h-1zM136 406h1v1h-1zM144 406h1v1h-1zM136 407h1v1h-1zM144 407h1v1h-1zM136 408h1v1h-1zM144 408h1v1h-1zM137 409h1v1h-1zM143 409h1v1h-1zM137 410h2v1h-2zM142 410h2v1h-2zM139 411h3v1h-3zM139 392h3v1h-3zM137 393h2v1h-2zM142 393h2v1h-2zM137 394h1v1h-1zM143 394h1v1h-1zM136 395h1v1h-1zM144 395h1v1h-1zM136 396h1v1h-1zM144 396h1v1h-1zM136 397h1v1h-1zM144 397h1v1h-1zM137 398h1v1h-1zM143 398h1v1h-1zM137 399h2v1h-2zM142 399h2v1h-2zM139 400h3v1h-3zM139 369h3v1h-3zM137 370h2v1h-2zM142 370h2v1h-2zM137 371h1v1h-1zM143 371h1v1h-1zM136 372h1v1h-1zM144 372h1v1h-1zM136 373h1v1h-1zM144 373h1v1h-1zM136 374h1v1h-1zM144 374h1v1h-1zM137 375h1v1h-1zM143 375h1v1h-1zM137 376h2v1h-2zM142 376h2v1h-2zM139 377h3v1h-3zM139 358h3v1h-3zM137 359h2v1h-2zM142 359h2v1h-2zM137 360h1v1h-1zM143 360h1v1h-1zM136 361h1v1h-1zM144 361h1v1h-1zM136 362h1v1h-1zM144 362h1v1h-1zM136 363h1v1h-1zM144 363h1v1h-1zM137 364h1v1h-1zM143 364h1v1h-1zM137 365h2v1h-2zM142 365h2v1h-2zM139 366h3v1h-3zM139 347h3v1h-3zM137 348h2v1h-2zM142 348h2v1h-2zM137 349h1v1h-1zM143 349h1v1h-1zM136 350h1v1h-1zM144 350h1v1h-1zM136 351h1v1h-1zM144 351h1v1h-1zM136 352h1v1h-1zM144 352h1v1h-1zM137 353h1v1h-1zM143 353h1v1h-1zM137 354h2v1h-2zM142 354h2v1h-2zM139 355h3v1h-3zM139 335h3v1h-3zM137 336h2v1h-2zM142 336h2v1h-2zM137 337h1v1h-1zM143 337h1v1h-1zM136 338h1v1h-1zM144 338h1v1h-1zM136 339h1v1h-1zM144 339h1v1h-1zM136 340h1v1h-1zM144 340h1v1h-1zM137 341h1v1h-1zM143 341h1v1h-1zM137 342h2v1h-2zM142 342h2v1h-2zM139 343h3v1h-3zM139 324h3v1h-3zM137 325h2v1h-2zM142 325h2v1h-2zM137 326h1v1h-1zM143 326h1v1h-1zM136 327h1v1h-1zM144 327h1v1h-1zM136 328h1v1h-1zM144 328h1v1h-1zM136 329h1v1h-1zM144 329h1v1h-1zM137 330h1v1h-1zM143 330h1v1h-1zM137 331h2v1h-2zM142 331h2v1h-2zM139 332h3v1h-3zM139 313h3v1h-3zM137 314h2v1h-2zM142 314h2v1h-2zM137 315h1v1h-1zM143 315h1v1h-1zM136 316h1v1h-1zM144 316h1v1h-1zM136 317h1v1h-1zM144 317h1v1h-1zM136 318h1v1h-1zM144 318h1v1h-1zM137 319h1v1h-1zM143 319h1v1h-1zM137 320h2v1h-2zM142 320h2v1h-2zM139 321h3v1h-3zM139 302h3v1h-3zM137 303h2v1h-2zM142 303h2v1h-2zM137 304h1v1h-1zM143 304h1v1h-1zM136 305h1v1h-1zM144 305h1v1h-1zM136 306h1v1h-1zM144 306h1v1h-1zM136 307h1v1h-1zM144 307h1v1h-1zM137 308h1v1h-1zM143 308h1v1h-1zM137 309h2v1h-2zM142 309h2v1h-2zM139 310h3v1h-3zM162 403h3v1h-3zM160 404h2v1h-2zM165 404h2v1h-2zM160 405h1v1h-1zM166 405h1v1h-1zM159 406h1v1h-1zM167 406h1v1h-1zM159 407h1v1h-1zM167 407h1v1h-1zM159 408h1v1h-1zM167 408h1v1h-1zM160 409h1v1h-1zM166 409h1v1h-1zM160 410h2v1h-2zM165 410h2v1h-2zM162 411h3v1h-3zM162 392h3v1h-3zM160 393h2v1h-2zM165 393h2v1h-2zM160 394h1v1h-1zM166 394h1v1h-1zM159 395h1v1h-1zM167 395h1v1h-1zM159 396h1v1h-1zM167 396h1v1h-1zM159 397h1v1h-1zM167 397h1v1h-1zM160 398h1v1h-1zM166 398h1v1h-1zM160 399h2v1h-2zM165 399h2v1h-2zM162 400h3v1h-3zM162 381h3v1h-3zM160 382h2v1h-2zM165 382h2v1h-2zM160 383h1v1h-1zM166 383h1v1h-1zM159 384h1v1h-1zM167 384h1v1h-1zM159 385h1v1h-1zM167 385h1v1h-1zM159 386h1v1h-1zM167 386h1v1h-1zM160 387h1v1h-1zM166 387h1v1h-1zM160 388h2v1h-2zM165 388h2v1h-2zM162 389h3v1h-3zM162 369h3v1h-3zM160 370h2v1h-2zM165 370h2v1h-2zM160 371h1v1h-1zM166 371h1v1h-1zM159 372h1v1h-1zM167 372h1v1h-1zM159 373h1v1h-1zM167 373h1v1h-1zM159 374h1v1h-1zM167 374h1v1h-1zM160 375h1v1h-1zM166 375h1v1h-1zM160 376h2v1h-2zM165 376h2v1h-2zM162 377h3v1h-3zM162 358h3v1h-3zM160 359h2v1h-2zM165 359h2v1h-2zM160 360h1v1h-1zM166 360h1v1h-1zM159 361h1v1h-1zM167 361h1v1h-1zM159 362h1v1h-1zM167 362h1v1h-1zM159 363h1v1h-1zM167 363h1v1h-1zM160 364h1v1h-1zM166 364h1v1h-1zM160 365h2v1h-2zM165 365h2v1h-2zM162 366h3v1h-3zM162 347h3v1h-3zM160 348h2v1h-2zM165 348h2v1h-2zM160 349h1v1h-1zM166 349h1v1h-1zM159 350h1v1h-1zM167 350h1v1h-1zM159 351h1v1h-1zM167 351h1v1h-1zM159 352h1v1h-1zM167 352h1v1h-1zM160 353h1v1h-1zM166 353h1v1h-1zM160 354h2v1h-2zM165 354h2v1h-2zM162 355h3v1h-3zM162 335h3v1h-3zM160 336h2v1h-2zM165 336h2v1h-2zM160 337h1v1h-1zM166 337h1v1h-1zM159 338h1v1h-1zM167 338h1v1h-1zM159 339h1v1h-1zM167 339h1v1h-1zM159 340h1v1h-1zM167 340h1v1h-1zM160 341h1v1h-1zM166 341h1v1h-1zM160 342h2v1h-2zM165 342h2v1h-2zM162 343h3v1h-3zM162 324h3v1h-3zM160 325h2v1h-2zM165 325h2v1h-2zM160 326h1v1h-1zM166 326h1v1h-1zM159 327h1v1h-1zM167 327h1v1h-1zM159 328h1v1h-1zM167 328h1v1h-1zM159 329h1v1h-1zM167 329h1v1h-1zM160 330h1v1h-1zM166 330h1v1h-1zM160 331h2v1h-2zM165 331h2v1h-2zM162 332h3v1h-3zM162 313h3v1h-3zM160 314h2v1h-2zM165 314h2v1h-2zM160 315h1v1h-1zM166 315h1v1h-1zM159 316h1v1h-1zM167 316h1v1h-1zM159 317h1v1h-1zM167 317h1v1h-1zM159 318h1v1h-1zM167 318h1v1h-1zM160 319h1v1h-1zM166 319h1v1h-1zM160 320h2v1h-2zM165 320h2v1h-2zM162 321h3v1h-3zM162 302h3v1h-3zM160 303h2v1h-2zM165 303h2v1h-2zM160 304h1v1h-1zM166 304h1v1h-1zM159 305h1v1h-1zM167 305h1v1h-1zM159 306h1v1h-1zM167 306h1v1h-1zM159 307h1v1h-1zM167 307h1v1h-1zM160 308h1v1h-1zM166 308h1v1h-1zM160 309h2v1h-2zM165 309h2v1h-2zM162 310h3v1h-3zM162 290h3v1h-3zM160 291h2v1h-2zM165 291h2v1h-2zM160 292h1v1h-1zM166 292h1v1h-1zM159 293h1v1h-1zM167 293h1v1h-1zM159 294h1v1h-1zM167 294h1v1h-1zM159 295h1v1h-1zM167 295h1v1h-1zM160 296h1v1h-1zM166 296h1v1h-1zM160 297h2v1h-2zM165 297h2v1h-2zM162 298h3v1h-3zM162 279h3v1h-3zM160 280h2v1h-2zM165 280h2v1h-2zM160 281h1v1h-1zM166 281h1v1h-1zM159 282h1v1h-1zM167 282h1v1h-1zM159 283h1v1h-1zM167 283h1v1h-1zM159 284h1v1h-1zM167 284h1v1h-1zM160 285h1v1h-1zM166 285h1v1h-1zM160 286h2v1h-2zM165 286h2v1h-2zM162 287h3v1h-3zM162 268h3v1h-3zM160 269h2v1h-2zM165 269h2v1h-2zM160 270h1v1h-1zM166 270h1v1h-1zM159 271h1v1h-1zM167 271h1v1h-1zM159 272h1v1h-1zM167 272h1v1h-1zM159 273h1v1h-1zM167 273h1v1h-1zM160 274h1v1h-1zM166 274h1v1h-1zM160 275h2v1h-2zM165 275h2v1h-2zM162 276h3v1h-3zM162 257h3v1h-3zM160 258h2v1h-2zM165 258h2v1h-2zM160 259h1v1h-1zM166 259h1v1h-1zM159 260h1v1h-1zM167 260h1v1h-1zM159 261h1v1h-1zM167 261h1v1h-1zM159 262h1v1h-1zM167 262h1v1h-1zM160 263h1v1h-1zM166 263h1v1h-1zM160 264h2v1h-2zM165 264h2v1h-2zM162 265h3v1h-3zM184 347h3v1h-3zM182 348h2v1h-2zM187 348h2v1h-2zM182 349h1v1h-1zM188 349h1v1h-1zM181 350h1v1h-1zM189 350h1v1h-1zM181 351h1v1h-1zM189 351h1v1h-1zM181 352h1v1h-1zM189 352h1v1h-1zM182 353h1v1h-1zM188 353h1v1h-1zM182 354h2v1h-2zM187 354h2v1h-2zM184 355h3v1h-3zM184 335h3v1h-3zM182 336h2v1h-2zM187 336h2v1h-2zM182 337h1v1h-1zM188 337h1v1h-1zM181 338h1v1h-1zM189 338h1v1h-1zM181 339h1v1h-1zM189 339h1v1h-1zM181 340h1v1h-1zM189 340h1v1h-1zM182 341h1v1h-1zM188 341h1v1h-1zM182 342h2v1h-2zM187 342h2v1h-2zM184 343h3v1h-3zM184 324h3v1h-3zM182 325h2v1h-2zM187 325h2v1h-2zM182 326h1v1h-1zM188 326h1v1h-1zM181 327h1v1h-1zM189 327h1v1h-1zM181 328h1v1h-1zM189 328h1v1h-1zM181 329h1v1h-1zM189 329h1v1h-1zM182 330h1v1h-1zM188 330h1v1h-1zM182 331h2v1h-2zM187 331h2v1h-2zM184 332h3v1h-3zM184 313h3v1h-3zM182 314h2v1h-2zM187 314h2v1h-2zM182 315h1v1h-1zM188 315h1v1h-1zM181 316h1v1h-1zM189 316h1v1h-1zM181 317h1v1h-1zM189 317h1v1h-1zM181 318h1v1h-1zM189 318h1v1h-1zM182 319h1v1h-1zM188 319h1v1h-1zM182 320h2v1h-2zM187 320h2v1h-2zM184 321h3v1h-3zM184 302h3v1h-3zM182 303h2v1h-2zM187 303h2v1h-2zM182 304h1v1h-1zM188 304h1v1h-1zM181 305h1v1h-1zM189 305h1v1h-1zM181 306h1v1h-1zM189 306h1v1h-1zM181 307h1v1h-1zM189 307h1v1h-1zM182 308h1v1h-1zM188 308h1v1h-1zM182 309h2v1h-2zM187 309h2v1h-2zM184 310h3v1h-3zM207 369h3v1h-3zM205 370h2v1h-2zM210 370h2v1h-2zM205 371h1v1h-1zM211 371h1v1h-1zM204 372h1v1h-1zM212 372h1v1h-1zM204 373h1v1h-1zM212 373h1v1h-1zM204 374h1v1h-1zM212 374h1v1h-1zM205 375h1v1h-1zM211 375h1v1h-1zM205 376h2v1h-2zM210 376h2v1h-2zM207 377h3v1h-3zM207 358h3v1h-3zM205 359h2v1h-2zM210 359h2v1h-2zM205 360h1v1h-1zM211 360h1v1h-1zM204 361h1v1h-1zM212 361h1v1h-1zM204 362h1v1h-1zM212 362h1v1h-1zM204 363h1v1h-1zM212 363h1v1h-1zM205 364h1v1h-1zM211 364h1v1h-1zM205 365h2v1h-2zM210 365h2v1h-2zM207 366h3v1h-3zM207 347h3v1h-3zM205 348h2v1h-2zM210 348h2v1h-2zM205 349h1v1h-1zM211 349h1v1h-1zM204 350h1v1h-1zM212 350h1v1h-1zM204 351h1v1h-1zM212 351h1v1h-1zM204 352h1v1h-1zM212 352h1v1h-1zM205 353h1v1h-1zM211 353h1v1h-1zM205 354h2v1h-2zM210 354h2v1h-2zM207 355h3v1h-3zM207 335h3v1h-3zM205 336h2v1h-2zM210 336h2v1h-2zM205 337h1v1h-1zM211 337h1v1h-1zM204 338h1v1h-1zM212 338h1v1h-1zM204 339h1v1h-1zM212 339h1v1h-1zM204 340h1v1h-1zM212 340h1v1h-1zM205 341h1v1h-1zM211 341h1v1h-1zM205 342h2v1h-2zM210 342h2v1h-2zM207 343h3v1h-3zM207 324h3v1h-3zM205 325h2v1h-2zM210 325h2v1h-2zM205 326h1v1h-1zM211 326h1v1h-1zM204 327h1v1h-1zM212 327h1v1h-1zM204 328h1v1h-1zM212 328h1v1h-1zM204 329h1v1h-1zM212 329h1v1h-1zM205 330h1v1h-1zM211 330h1v1h-1zM205 331h2v1h-2zM210 331h2v1h-2zM207 332h3v1h-3zM207 313h3v1h-3zM205 314h2v1h-2zM210 314h2v1h-2zM205 315h1v1h-1zM211 315h1v1h-1zM204 316h1v1h-1zM212 316h1v1h-1zM204 317h1v1h-1zM212 317h1v1h-1zM204 318h1v1h-1zM212 318h1v1h-1zM205 319h1v1h-1zM211 319h1v1h-1zM205 320h2v1h-2zM210 320h2v1h-2zM207 321h3v1h-3zM207 302h3v1h-3zM205 303h2v1h-2zM210 303h2v1h-2zM205 304h1v1h-1zM211 304h1v1h-1zM204 305h1v1h-1zM212 305h1v1h-1zM204 306h1v1h-1zM212 306h1v1h-1zM204 307h1v1h-1zM212 307h1v1h-1zM205 308h1v1h-1zM211 308h1v1h-1zM205 309h2v1h-2zM210 309h2v1h-2zM207 310h3v1h-3zM229 369h3v1h-3zM227 370h2v1h-2zM232 370h2v1h-2zM227 371h1v1h-1zM233 371h1v1h-1zM226 372h1v1h-1zM234 372h1v1h-1zM226 373h1v1h-1zM234 373h1v1h-1zM226 374h1v1h-1zM234 374h1v1h-1zM227 375h1v1h-1zM233 375h1v1h-1zM227 376h2v1h-2zM232 376h2v1h-2zM229 377h3v1h-3zM229 358h3v1h-3zM227 359h2v1h-2zM232 359h2v1h-2zM227 360h1v1h-1zM233 360h1v1h-1zM226 361h1v1h-1zM234 361h1v1h-1zM226 362h1v1h-1zM234 362h1v1h-1zM226 363h1v1h-1zM234 363h1v1h-1zM227 364h1v1h-1zM233 364h1v1h-1zM227 365h2v1h-2zM232 365h2v1h-2zM229 366h3v1h-3zM229 347h3v1h-3zM227 348h2v1h-2zM232 348h2v1h-2zM227 349h1v1h-1zM233 349h1v1h-1zM226 350h1v1h-1zM234 350h1v1h-1zM226 351h1v1h-1zM234 351h1v1h-1zM226 352h1v1h-1zM234 352h1v1h-1zM227 353h1v1h-1zM233 353h1v1h-1zM227 354h2v1h-2zM232 354h2v1h-2zM229 355h3v1h-3zM229 335h3v1h-3zM227 336h2v1h-2zM232 336h2v1h-2zM227 337h1v1h-1zM233 337h1v1h-1zM226 338h1v1h-1zM234 338h1v1h-1zM226 339h1v1h-1zM234 339h1v1h-1zM226 340h1v1h-1zM234 340h1v1h-1zM227 341h1v1h-1zM233 341h1v1h-1zM227 342h2v1h-2zM232 342h2v1h-2zM229 343h3v1h-3zM229 324h3v1h-3zM227 325h2v1h-2zM232 325h2v1h-2zM227 326h1v1h-1zM233 326h1v1h-1zM226 327h1v1h-1zM234 327h1v1h-1zM226 328h1v1h-1zM234 328h1v1h-1zM226 329h1v1h-1zM234 329h1v1h-1zM227 330h1v1h-1zM233 330h1v1h-1zM227 331h2v1h-2zM232 331h2v1h-2zM229 332h3v1h-3zM252 369h3v1h-3zM250 370h2v1h-2zM255 370h2v1h-2zM250 371h1v1h-1zM256 371h1v1h-1zM249 372h1v1h-1zM257 372h1v1h-1zM249 373h1v1h-1zM257 373h1v1h-1zM249 374h1v1h-1zM257 374h1v1h-1zM250 375h1v1h-1zM256 375h1v1h-1zM250 376h2v1h-2zM255 376h2v1h-2zM252 377h3v1h-3zM252 358h3v1h-3zM250 359h2v1h-2zM255 359h2v1h-2zM250 360h1v1h-1zM256 360h1v1h-1zM249 361h1v1h-1zM257 361h1v1h-1zM249 362h1v1h-1zM257 362h1v1h-1zM249 363h1v1h-1zM257 363h1v1h-1zM250 364h1v1h-1zM256 364h1v1h-1zM250 365h2v1h-2zM255 365h2v1h-2zM252 366h3v1h-3zM252 335h3v1h-3zM250 336h2v1h-2zM255 336h2v1h-2zM250 337h1v1h-1zM256 337h1v1h-1zM249 338h1v1h-1zM257 338h1v1h-1zM249 339h1v1h-1zM257 339h1v1h-1zM249 340h1v1h-1zM257 340h1v1h-1zM250 341h1v1h-1zM256 341h1v1h-1zM250 342h2v1h-2zM255 342h2v1h-2zM252 343h3v1h-3zM252 324h3v1h-3zM250 325h2v1h-2zM255 325h2v1h-2zM250 326h1v1h-1zM256 326h1v1h-1zM249 327h1v1h-1zM257 327h1v1h-1zM249 328h1v1h-1zM257 328h1v1h-1zM249 329h1v1h-1zM257 329h1v1h-1zM250 330h1v1h-1zM256 330h1v1h-1zM250 331h2v1h-2zM255 331h2v1h-2zM252 332h3v1h-3zM252 313h3v1h-3zM250 314h2v1h-2zM255 314h2v1h-2zM250 315h1v1h-1zM256 315h1v1h-1zM249 316h1v1h-1zM257 316h1v1h-1zM249 317h1v1h-1zM257 317h1v1h-1zM249 318h1v1h-1zM257 318h1v1h-1zM250 319h1v1h-1zM256 319h1v1h-1zM250 320h2v1h-2zM255 320h2v1h-2zM252 321h3v1h-3zM252 302h3v1h-3zM250 303h2v1h-2zM255 303h2v1h-2zM250 304h1v1h-1zM256 304h1v1h-1zM249 305h1v1h-1zM257 305h1v1h-1zM249 306h1v1h-1zM257 306h1v1h-1zM249 307h1v1h-1zM257 307h1v1h-1zM250 308h1v1h-1zM256 308h1v1h-1zM250 309h2v1h-2zM255 309h2v1h-2zM252 310h3v1h-3zM252 290h3v1h-3zM250 291h2v1h-2zM255 291h2v1h-2zM250 292h1v1h-1zM256 292h1v1h-1zM249 293h1v1h-1zM257 293h1v1h-1zM249 294h1v1h-1zM257 294h1v1h-1zM249 295h1v1h-1zM257 295h1v1h-1zM250 296h1v1h-1zM256 296h1v1h-1zM250 297h2v1h-2zM255 297h2v1h-2zM252 298h3v1h-3zM252 279h3v1h-3zM250 280h2v1h-2zM255 280h2v1h-2zM250 281h1v1h-1zM256 281h1v1h-1zM249 282h1v1h-1zM257 282h1v1h-1zM249 283h1v1h-1zM257 283h1v1h-1zM249 284h1v1h-1zM257 284h1v1h-1zM250 285h1v1h-1zM256 285h1v1h-1zM250 286h2v1h-2zM255 286h2v1h-2zM252 287h3v1h-3zM252 268h3v1h-3zM250 269h2v1h-2zM255 269h2v1h-2zM250 270h1v1h-1zM256 270h1v1h-1zM249 271h1v1h-1zM257 271h1v1h-1zM249 272h1v1h-1zM257 272h1v1h-1zM249 273h1v1h-1zM257 273h1v1h-1zM250 274h1v1h-1zM256 274h1v1h-1zM250 275h2v1h-2zM255 275h2v1h-2zM252 276h3v1h-3zM252 257h3v1h-3zM250 258h2v1h-2zM255 258h2v1h-2zM250 259h1v1h-1zM256 259h1v1h-1zM249 260h1v1h-1zM257 260h1v1h-1zM249 261h1v1h-1zM257 261h1v1h-1zM249 262h1v1h-1zM257 262h1v1h-1zM250 263h1v1h-1zM256 263h1v1h-1zM250 264h2v1h-2zM255 264h2v1h-2zM252 265h3v1h-3zM252 245h3v1h-3zM250 246h2v1h-2zM255 246h2v1h-2zM250 247h1v1h-1zM256 247h1v1h-1zM249 248h1v1h-1zM257 248h1v1h-1zM249 249h1v1h-1zM257 249h1v1h-1zM249 250h1v1h-1zM257 250h1v1h-1zM250 251h1v1h-1zM256 251h1v1h-1zM250 252h2v1h-2zM255 252h2v1h-2zM252 253h3v1h-3zM252 234h3v1h-3zM250 235h2v1h-2zM255 235h2v1h-2zM250 236h1v1h-1zM256 236h1v1h-1zM249 237h1v1h-1zM257 237h1v1h-1zM249 238h1v1h-1zM257 238h1v1h-1zM249 239h1v1h-1zM257 239h1v1h-1zM250 240h1v1h-1zM256 240h1v1h-1zM250 241h2v1h-2zM255 241h2v1h-2zM252 242h3v1h-3zM274 448h3v1h-3zM272 449h2v1h-2zM277 449h2v1h-2zM272 450h1v1h-1zM278 450h1v1h-1zM271 451h1v1h-1zM279 451h1v1h-1zM271 452h1v1h-1zM279 452h1v1h-1zM271 453h1v1h-1zM279 453h1v1h-1zM272 454h1v1h-1zM278 454h1v1h-1zM272 455h2v1h-2zM277 455h2v1h-2zM274 456h3v1h-3zM274 437h3v1h-3zM272 438h2v1h-2zM277 438h2v1h-2zM272 439h1v1h-1zM278 439h1v1h-1zM271 440h1v1h-1zM279 440h1v1h-1zM271 441h1v1h-1zM279 441h1v1h-1zM271 442h1v1h-1zM279 442h1v1h-1zM272 443h1v1h-1zM278 443h1v1h-1zM272 444h2v1h-2zM277 444h2v1h-2zM274 445h3v1h-3zM274 426h3v1h-3zM272 427h2v1h-2zM277 427h2v1h-2zM272 428h1v1h-1zM278 428h1v1h-1zM271 429h1v1h-1zM279 429h1v1h-1zM271 430h1v1h-1zM279 430h1v1h-1zM271 431h1v1h-1zM279 431h1v1h-1zM272 432h1v1h-1zM278 432h1v1h-1zM272 433h2v1h-2zM277 433h2v1h-2zM274 434h3v1h-3zM274 414h3v1h-3zM272 415h2v1h-2zM277 415h2v1h-2zM272 416h1v1h-1zM278 416h1v1h-1zM271 417h1v1h-1zM279 417h1v1h-1zM271 418h1v1h-1zM279 418h1v1h-1zM271 419h1v1h-1zM279 419h1v1h-1zM272 420h1v1h-1zM278 420h1v1h-1zM272 421h2v1h-2zM277 421h2v1h-2zM274 422h3v1h-3zM274 403h3v1h-3zM272 404h2v1h-2zM277 404h2v1h-2zM272 405h1v1h-1zM278 405h1v1h-1zM271 406h1v1h-1zM279 406h1v1h-1zM271 407h1v1h-1zM279 407h1v1h-1zM271 408h1v1h-1zM279 408h1v1h-1zM272 409h1v1h-1zM278 409h1v1h-1zM272 410h2v1h-2zM277 410h2v1h-2zM274 411h3v1h-3zM274 381h3v1h-3zM272 382h2v1h-2zM277 382h2v1h-2zM272 383h1v1h-1zM278 383h1v1h-1zM271 384h1v1h-1zM279 384h1v1h-1zM271 385h1v1h-1zM279 385h1v1h-1zM271 386h1v1h-1zM279 386h1v1h-1zM272 387h1v1h-1zM278 387h1v1h-1zM272 388h2v1h-2zM277 388h2v1h-2zM274 389h3v1h-3zM274 369h3v1h-3zM272 370h2v1h-2zM277 370h2v1h-2zM272 371h1v1h-1zM278 371h1v1h-1zM271 372h1v1h-1zM279 372h1v1h-1zM271 373h1v1h-1zM279 373h1v1h-1zM271 374h1v1h-1zM279 374h1v1h-1zM272 375h1v1h-1zM278 375h1v1h-1zM272 376h2v1h-2zM277 376h2v1h-2zM274 377h3v1h-3zM274 358h3v1h-3zM272 359h2v1h-2zM277 359h2v1h-2zM272 360h1v1h-1zM278 360h1v1h-1zM271 361h1v1h-1zM279 361h1v1h-1zM271 362h1v1h-1zM279 362h1v1h-1zM271 363h1v1h-1zM279 363h1v1h-1zM272 364h1v1h-1zM278 364h1v1h-1zM272 365h2v1h-2zM277 365h2v1h-2zM274 366h3v1h-3zM274 347h3v1h-3zM272 348h2v1h-2zM277 348h2v1h-2zM272 349h1v1h-1zM278 349h1v1h-1zM271 350h1v1h-1zM279 350h1v1h-1zM271 351h1v1h-1zM279 351h1v1h-1zM271 352h1v1h-1zM279 352h1v1h-1zM272 353h1v1h-1zM278 353h1v1h-1zM272 354h2v1h-2zM277 354h2v1h-2zM274 355h3v1h-3zM274 335h3v1h-3zM272 336h2v1h-2zM277 336h2v1h-2zM272 337h1v1h-1zM278 337h1v1h-1zM271 338h1v1h-1zM279 338h1v1h-1zM271 339h1v1h-1zM279 339h1v1h-1zM271 340h1v1h-1zM279 340h1v1h-1zM272 341h1v1h-1zM278 341h1v1h-1zM272 342h2v1h-2zM277 342h2v1h-2zM274 343h3v1h-3zM274 324h3v1h-3zM272 325h2v1h-2zM277 325h2v1h-2zM272 326h1v1h-1zM278 326h1v1h-1zM271 327h1v1h-1zM279 327h1v1h-1zM271 328h1v1h-1zM279 328h1v1h-1zM271 329h1v1h-1zM279 329h1v1h-1zM272 330h1v1h-1zM278 330h1v1h-1zM272 331h2v1h-2zM277 331h2v1h-2zM274 332h3v1h-3zM297 538h3v1h-3zM295 539h2v1h-2zM300 539h2v1h-2zM295 540h1v1h-1zM301 540h1v1h-1zM294 541h1v1h-1zM302 541h1v1h-1zM294 542h1v1h-1zM302 542h1v1h-1zM294 543h1v1h-1zM302 543h1v1h-1zM295 544h1v1h-1zM301 544h1v1h-1zM295 545h2v1h-2zM300 545h2v1h-2zM297 546h3v1h-3zM297 527h3v1h-3zM295 528h2v1h-2zM300 528h2v1h-2zM295 529h1v1h-1zM301 529h1v1h-1zM294 530h1v1h-1zM302 530h1v1h-1zM294 531h1v1h-1zM302 531h1v1h-1zM294 532h1v1h-1zM302 532h1v1h-1zM295 533h1v1h-1zM301 533h1v1h-1zM295 534h2v1h-2zM300 534h2v1h-2zM297 535h3v1h-3zM297 516h3v1h-3zM295 517h2v1h-2zM300 517h2v1h-2zM295 518h1v1h-1zM301 518h1v1h-1zM294 519h1v1h-1zM302 519h1v1h-1zM294 520h1v1h-1zM302 520h1v1h-1zM294 521h1v1h-1zM302 521h1v1h-1zM295 522h1v1h-1zM301 522h1v1h-1zM295 523h2v1h-2zM300 523h2v1h-2zM297 524h3v1h-3zM297 505h3v1h-3zM295 506h2v1h-2zM300 506h2v1h-2zM295 507h1v1h-1zM301 507h1v1h-1zM294 508h1v1h-1zM302 508h1v1h-1zM294 509h1v1h-1zM302 509h1v1h-1zM294 510h1v1h-1zM302 510h1v1h-1zM295 511h1v1h-1zM301 511h1v1h-1zM295 512h2v1h-2zM300 512h2v1h-2zM297 513h3v1h-3zM297 493h3v1h-3zM295 494h2v1h-2zM300 494h2v1h-2zM295 495h1v1h-1zM301 495h1v1h-1zM294 496h1v1h-1zM302 496h1v1h-1zM294 497h1v1h-1zM302 497h1v1h-1zM294 498h1v1h-1zM302 498h1v1h-1zM295 499h1v1h-1zM301 499h1v1h-1zM295 500h2v1h-2zM300 500h2v1h-2zM297 501h3v1h-3zM297 482h3v1h-3zM295 483h2v1h-2zM300 483h2v1h-2zM295 484h1v1h-1zM301 484h1v1h-1zM294 485h1v1h-1zM302 485h1v1h-1zM294 486h1v1h-1zM302 486h1v1h-1zM294 487h1v1h-1zM302 487h1v1h-1zM295 488h1v1h-1zM301 488h1v1h-1zM295 489h2v1h-2zM300 489h2v1h-2zM297 490h3v1h-3zM297 459h3v1h-3zM295 460h2v1h-2zM300 460h2v1h-2zM295 461h1v1h-1zM301 461h1v1h-1zM294 462h1v1h-1zM302 462h1v1h-1zM294 463h1v1h-1zM302 463h1v1h-1zM294 464h1v1h-1zM302 464h1v1h-1zM295 465h1v1h-1zM301 465h1v1h-1zM295 466h2v1h-2zM300 466h2v1h-2zM297 467h3v1h-3zM297 448h3v1h-3zM295 449h2v1h-2zM300 449h2v1h-2zM295 450h1v1h-1zM301 450h1v1h-1zM294 451h1v1h-1zM302 451h1v1h-1zM294 452h1v1h-1zM302 452h1v1h-1zM294 453h1v1h-1zM302 453h1v1h-1zM295 454h1v1h-1zM301 454h1v1h-1zM295 455h2v1h-2zM300 455h2v1h-2zM297 456h3v1h-3zM297 437h3v1h-3zM295 438h2v1h-2zM300 438h2v1h-2zM295 439h1v1h-1zM301 439h1v1h-1zM294 440h1v1h-1zM302 440h1v1h-1zM294 441h1v1h-1zM302 441h1v1h-1zM294 442h1v1h-1zM302 442h1v1h-1zM295 443h1v1h-1zM301 443h1v1h-1zM295 444h2v1h-2zM300 444h2v1h-2zM297 445h3v1h-3zM297 426h3v1h-3zM295 427h2v1h-2zM300 427h2v1h-2zM295 428h1v1h-1zM301 428h1v1h-1zM294 429h1v1h-1zM302 429h1v1h-1zM294 430h1v1h-1zM302 430h1v1h-1zM294 431h1v1h-1zM302 431h1v1h-1zM295 432h1v1h-1zM301 432h1v1h-1zM295 433h2v1h-2zM300 433h2v1h-2zM297 434h3v1h-3zM297 414h3v1h-3zM295 415h2v1h-2zM300 415h2v1h-2zM295 416h1v1h-1zM301 416h1v1h-1zM294 417h1v1h-1zM302 417h1v1h-1zM294 418h1v1h-1zM302 418h1v1h-1zM294 419h1v1h-1zM302 419h1v1h-1zM295 420h1v1h-1zM301 420h1v1h-1zM295 421h2v1h-2zM300 421h2v1h-2zM297 422h3v1h-3zM297 403h3v1h-3zM295 404h2v1h-2zM300 404h2v1h-2zM295 405h1v1h-1zM301 405h1v1h-1zM294 406h1v1h-1zM302 406h1v1h-1zM294 407h1v1h-1zM302 407h1v1h-1zM294 408h1v1h-1zM302 408h1v1h-1zM295 409h1v1h-1zM301 409h1v1h-1zM295 410h2v1h-2zM300 410h2v1h-2zM297 411h3v1h-3zM297 392h3v1h-3zM295 393h2v1h-2zM300 393h2v1h-2zM295 394h1v1h-1zM301 394h1v1h-1zM294 395h1v1h-1zM302 395h1v1h-1zM294 396h1v1h-1zM302 396h1v1h-1zM294 397h1v1h-1zM302 397h1v1h-1zM295 398h1v1h-1zM301 398h1v1h-1zM295 399h2v1h-2zM300 399h2v1h-2zM297 400h3v1h-3zM297 381h3v1h-3zM295 382h2v1h-2zM300 382h2v1h-2zM295 383h1v1h-1zM301 383h1v1h-1zM294 384h1v1h-1zM302 384h1v1h-1zM294 385h1v1h-1zM302 385h1v1h-1zM294 386h1v1h-1zM302 386h1v1h-1zM295 387h1v1h-1zM301 387h1v1h-1zM295 388h2v1h-2zM300 388h2v1h-2zM297 389h3v1h-3zM297 369h3v1h-3zM295 370h2v1h-2zM300 370h2v1h-2zM295 371h1v1h-1zM301 371h1v1h-1zM294 372h1v1h-1zM302 372h1v1h-1zM294 373h1v1h-1zM302 373h1v1h-1zM294 374h1v1h-1zM302 374h1v1h-1zM295 375h1v1h-1zM301 375h1v1h-1zM295 376h2v1h-2zM300 376h2v1h-2zM297 377h3v1h-3zM297 358h3v1h-3zM295 359h2v1h-2zM300 359h2v1h-2zM295 360h1v1h-1zM301 360h1v1h-1zM294 361h1v1h-1zM302 361h1v1h-1zM294 362h1v1h-1zM302 362h1v1h-1zM294 363h1v1h-1zM302 363h1v1h-1zM295 364h1v1h-1zM301 364h1v1h-1zM295 365h2v1h-2zM300 365h2v1h-2zM297 366h3v1h-3zM297 347h3v1h-3zM295 348h2v1h-2zM300 348h2v1h-2zM295 349h1v1h-1zM301 349h1v1h-1zM294 350h1v1h-1zM302 350h1v1h-1zM294 351h1v1h-1zM302 351h1v1h-1zM294 352h1v1h-1zM302 352h1v1h-1zM295 353h1v1h-1zM301 353h1v1h-1zM295 354h2v1h-2zM300 354h2v1h-2zM297 355h3v1h-3zM297 335h3v1h-3zM295 336h2v1h-2zM300 336h2v1h-2zM295 337h1v1h-1zM301 337h1v1h-1zM294 338h1v1h-1zM302 338h1v1h-1zM294 339h1v1h-1zM302 339h1v1h-1zM294 340h1v1h-1zM302 340h1v1h-1zM295 341h1v1h-1zM301 341h1v1h-1zM295 342h2v1h-2zM300 342h2v1h-2zM297 343h3v1h-3zM319 561h3v1h-3zM317 562h2v1h-2zM322 562h2v1h-2zM317 563h1v1h-1zM323 563h1v1h-1zM316 564h1v1h-1zM324 564h1v1h-1zM316 565h1v1h-1zM324 565h1v1h-1zM316 566h1v1h-1zM324 566h1v1h-1zM317 567h1v1h-1zM323 567h1v1h-1zM317 568h2v1h-2zM322 568h2v1h-2zM319 569h3v1h-3zM319 550h3v1h-3zM317 551h2v1h-2zM322 551h2v1h-2zM317 552h1v1h-1zM323 552h1v1h-1zM316 553h1v1h-1zM324 553h1v1h-1zM316 554h1v1h-1zM324 554h1v1h-1zM316 555h1v1h-1zM324 555h1v1h-1zM317 556h1v1h-1zM323 556h1v1h-1zM317 557h2v1h-2zM322 557h2v1h-2zM319 558h3v1h-3zM319 538h3v1h-3zM317 539h2v1h-2zM322 539h2v1h-2zM317 540h1v1h-1zM323 540h1v1h-1zM316 541h1v1h-1zM324 541h1v1h-1zM316 542h1v1h-1zM324 542h1v1h-1zM316 543h1v1h-1zM324 543h1v1h-1zM317 544h1v1h-1zM323 544h1v1h-1zM317 545h2v1h-2zM322 545h2v1h-2zM319 546h3v1h-3zM319 527h3v1h-3zM317 528h2v1h-2zM322 528h2v1h-2zM317 529h1v1h-1zM323 529h1v1h-1zM316 530h1v1h-1zM324 530h1v1h-1zM316 531h1v1h-1zM324 531h1v1h-1zM316 532h1v1h-1zM324 532h1v1h-1zM317 533h1v1h-1zM323 533h1v1h-1zM317 534h2v1h-2zM322 534h2v1h-2zM319 535h3v1h-3zM319 516h3v1h-3zM317 517h2v1h-2zM322 517h2v1h-2zM317 518h1v1h-1zM323 518h1v1h-1zM316 519h1v1h-1zM324 519h1v1h-1zM316 520h1v1h-1zM324 520h1v1h-1zM316 521h1v1h-1zM324 521h1v1h-1zM317 522h1v1h-1zM323 522h1v1h-1zM317 523h2v1h-2zM322 523h2v1h-2zM319 524h3v1h-3zM319 493h3v1h-3zM317 494h2v1h-2zM322 494h2v1h-2zM317 495h1v1h-1zM323 495h1v1h-1zM316 496h1v1h-1zM324 496h1v1h-1zM316 497h1v1h-1zM324 497h1v1h-1zM316 498h1v1h-1zM324 498h1v1h-1zM317 499h1v1h-1zM323 499h1v1h-1zM317 500h2v1h-2zM322 500h2v1h-2zM319 501h3v1h-3zM319 482h3v1h-3zM317 483h2v1h-2zM322 483h2v1h-2zM317 484h1v1h-1zM323 484h1v1h-1zM316 485h1v1h-1zM324 485h1v1h-1zM316 486h1v1h-1zM324 486h1v1h-1zM316 487h1v1h-1zM324 487h1v1h-1zM317 488h1v1h-1zM323 488h1v1h-1zM317 489h2v1h-2zM322 489h2v1h-2zM319 490h3v1h-3zM319 471h3v1h-3zM317 472h2v1h-2zM322 472h2v1h-2zM317 473h1v1h-1zM323 473h1v1h-1zM316 474h1v1h-1zM324 474h1v1h-1zM316 475h1v1h-1zM324 475h1v1h-1zM316 476h1v1h-1zM324 476h1v1h-1zM317 477h1v1h-1zM323 477h1v1h-1zM317 478h2v1h-2zM322 478h2v1h-2zM319 479h3v1h-3zM319 459h3v1h-3zM317 460h2v1h-2zM322 460h2v1h-2zM317 461h1v1h-1zM323 461h1v1h-1zM316 462h1v1h-1zM324 462h1v1h-1zM316 463h1v1h-1zM324 463h1v1h-1zM316 464h1v1h-1zM324 464h1v1h-1zM317 465h1v1h-1zM323 465h1v1h-1zM317 466h2v1h-2zM322 466h2v1h-2zM319 467h3v1h-3zM319 448h3v1h-3zM317 449h2v1h-2zM322 449h2v1h-2zM317 450h1v1h-1zM323 450h1v1h-1zM316 451h1v1h-1zM324 451h1v1h-1zM316 452h1v1h-1zM324 452h1v1h-1zM316 453h1v1h-1zM324 453h1v1h-1zM317 454h1v1h-1zM323 454h1v1h-1zM317 455h2v1h-2zM322 455h2v1h-2zM319 456h3v1h-3zM319 437h3v1h-3zM317 438h2v1h-2zM322 438h2v1h-2zM317 439h1v1h-1zM323 439h1v1h-1zM316 440h1v1h-1zM324 440h1v1h-1zM316 441h1v1h-1zM324 441h1v1h-1zM316 442h1v1h-1zM324 442h1v1h-1zM317 443h1v1h-1zM323 443h1v1h-1zM317 444h2v1h-2zM322 444h2v1h-2zM319 445h3v1h-3zM319 426h3v1h-3zM317 427h2v1h-2zM322 427h2v1h-2zM317 428h1v1h-1zM323 428h1v1h-1zM316 429h1v1h-1zM324 429h1v1h-1zM316 430h1v1h-1zM324 430h1v1h-1zM316 431h1v1h-1zM324 431h1v1h-1zM317 432h1v1h-1zM323 432h1v1h-1zM317 433h2v1h-2zM322 433h2v1h-2zM319 434h3v1h-3zM319 414h3v1h-3zM317 415h2v1h-2zM322 415h2v1h-2zM317 416h1v1h-1zM323 416h1v1h-1zM316 417h1v1h-1zM324 417h1v1h-1zM316 418h1v1h-1zM324 418h1v1h-1zM316 419h1v1h-1zM324 419h1v1h-1zM317 420h1v1h-1zM323 420h1v1h-1zM317 421h2v1h-2zM322 421h2v1h-2zM319 422h3v1h-3zM319 403h3v1h-3zM317 404h2v1h-2zM322 404h2v1h-2zM317 405h1v1h-1zM323 405h1v1h-1zM316 406h1v1h-1zM324 406h1v1h-1zM316 407h1v1h-1zM324 407h1v1h-1zM316 408h1v1h-1zM324 408h1v1h-1zM317 409h1v1h-1zM323 409h1v1h-1zM317 410h2v1h-2zM322 410h2v1h-2zM319 411h3v1h-3zM319 392h3v1h-3zM317 393h2v1h-2zM322 393h2v1h-2zM317 394h1v1h-1zM323 394h1v1h-1zM316 395h1v1h-1zM324 395h1v1h-1zM316 396h1v1h-1zM324 396h1v1h-1zM316 397h1v1h-1zM324 397h1v1h-1zM317 398h1v1h-1zM323 398h1v1h-1zM317 399h2v1h-2zM322 399h2v1h-2zM319 400h3v1h-3zM319 381h3v1h-3zM317 382h2v1h-2zM322 382h2v1h-2zM317 383h1v1h-1zM323 383h1v1h-1zM316 384h1v1h-1zM324 384h1v1h-1zM316 385h1v1h-1zM324 385h1v1h-1zM316 386h1v1h-1zM324 386h1v1h-1zM317 387h1v1h-1zM323 387h1v1h-1zM317 388h2v1h-2zM322 388h2v1h-2zM319 389h3v1h-3zM319 369h3v1h-3zM317 370h2v1h-2zM322 370h2v1h-2zM317 371h1v1h-1zM323 371h1v1h-1zM316 372h1v1h-1zM324 372h1v1h-1zM316 373h1v1h-1zM324 373h1v1h-1zM316 374h1v1h-1zM324 374h1v1h-1zM317 375h1v1h-1zM323 375h1v1h-1zM317 376h2v1h-2zM322 376h2v1h-2zM319 377h3v1h-3zM342 369h3v1h-3zM340 370h2v1h-2zM345 370h2v1h-2zM340 371h1v1h-1zM346 371h1v1h-1zM339 372h1v1h-1zM347 372h1v1h-1zM339 373h1v1h-1zM347 373h1v1h-1zM339 374h1v1h-1zM347 374h1v1h-1zM340 375h1v1h-1zM346 375h1v1h-1zM340 376h2v1h-2zM345 376h2v1h-2zM342 377h3v1h-3zM342 358h3v1h-3zM340 359h2v1h-2zM345 359h2v1h-2zM340 360h1v1h-1zM346 360h1v1h-1zM339 361h1v1h-1zM347 361h1v1h-1zM339 362h1v1h-1zM347 362h1v1h-1zM339 363h1v1h-1zM347 363h1v1h-1zM340 364h1v1h-1zM346 364h1v1h-1zM340 365h2v1h-2zM345 365h2v1h-2zM342 366h3v1h-3zM342 347h3v1h-3zM340 348h2v1h-2zM345 348h2v1h-2zM340 349h1v1h-1zM346 349h1v1h-1zM339 350h1v1h-1zM347 350h1v1h-1zM339 351h1v1h-1zM347 351h1v1h-1zM339 352h1v1h-1zM347 352h1v1h-1zM340 353h1v1h-1zM346 353h1v1h-1zM340 354h2v1h-2zM345 354h2v1h-2zM342 355h3v1h-3zM342 335h3v1h-3zM340 336h2v1h-2zM345 336h2v1h-2zM340 337h1v1h-1zM346 337h1v1h-1zM339 338h1v1h-1zM347 338h1v1h-1zM339 339h1v1h-1zM347 339h1v1h-1zM339 340h1v1h-1zM347 340h1v1h-1zM340 341h1v1h-1zM346 341h1v1h-1zM340 342h2v1h-2zM345 342h2v1h-2zM342 343h3v1h-3zM342 324h3v1h-3zM340 325h2v1h-2zM345 325h2v1h-2zM340 326h1v1h-1zM346 326h1v1h-1zM339 327h1v1h-1zM347 327h1v1h-1zM339 328h1v1h-1zM347 328h1v1h-1zM339 329h1v1h-1zM347 329h1v1h-1zM340 330h1v1h-1zM346 330h1v1h-1zM340 331h2v1h-2zM345 331h2v1h-2zM342 332h3v1h-3zM342 313h3v1h-3zM340 314h2v1h-2zM345 314h2v1h-2zM340 315h1v1h-1zM346 315h1v1h-1zM339 316h1v1h-1zM347 316h1v1h-1zM339 317h1v1h-1zM347 317h1v1h-1zM339 318h1v1h-1zM347 318h1v1h-1zM340 319h1v1h-1zM346 319h1v1h-1zM340 320h2v1h-2zM345 320h2v1h-2zM342 321h3v1h-3zM342 302h3v1h-3zM340 303h2v1h-2zM345 303h2v1h-2zM340 304h1v1h-1zM346 304h1v1h-1zM339 305h1v1h-1zM347 305h1v1h-1zM339 306h1v1h-1zM347 306h1v1h-1zM339 307h1v1h-1zM347 307h1v1h-1zM340 308h1v1h-1zM346 308h1v1h-1zM340 309h2v1h-2zM345 309h2v1h-2zM342 310h3v1h-3zM342 290h3v1h-3zM340 291h2v1h-2zM345 291h2v1h-2zM340 292h1v1h-1zM346 292h1v1h-1zM339 293h1v1h-1zM347 293h1v1h-1zM339 294h1v1h-1zM347 294h1v1h-1zM339 295h1v1h-1zM347 295h1v1h-1zM340 296h1v1h-1zM346 296h1v1h-1zM340 297h2v1h-2zM345 297h2v1h-2zM342 298h3v1h-3zM364 414h3v1h-3zM362 415h2v1h-2zM367 415h2v1h-2zM362 416h1v1h-1zM368 416h1v1h-1zM361 417h1v1h-1zM369 417h1v1h-1zM361 418h1v1h-1zM369 418h1v1h-1zM361 419h1v1h-1zM369 419h1v1h-1zM362 420h1v1h-1zM368 420h1v1h-1zM362 421h2v1h-2zM367 421h2v1h-2zM364 422h3v1h-3zM364 403h3v1h-3zM362 404h2v1h-2zM367 404h2v1h-2zM362 405h1v1h-1zM368 405h1v1h-1zM361 406h1v1h-1zM369 406h1v1h-1zM361 407h1v1h-1zM369 407h1v1h-1zM361 408h1v1h-1zM369 408h1v1h-1zM362 409h1v1h-1zM368 409h1v1h-1zM362 410h2v1h-2zM367 410h2v1h-2zM364 411h3v1h-3zM364 392h3v1h-3zM362 393h2v1h-2zM367 393h2v1h-2zM362 394h1v1h-1zM368 394h1v1h-1zM361 395h1v1h-1zM369 395h1v1h-1zM361 396h1v1h-1zM369 396h1v1h-1zM361 397h1v1h-1zM369 397h1v1h-1zM362 398h1v1h-1zM368 398h1v1h-1zM362 399h2v1h-2zM367 399h2v1h-2zM364 400h3v1h-3zM364 381h3v1h-3zM362 382h2v1h-2zM367 382h2v1h-2zM362 383h1v1h-1zM368 383h1v1h-1zM361 384h1v1h-1zM369 384h1v1h-1zM361 385h1v1h-1zM369 385h1v1h-1zM361 386h1v1h-1zM369 386h1v1h-1zM362 387h1v1h-1zM368 387h1v1h-1zM362 388h2v1h-2zM367 388h2v1h-2zM364 389h3v1h-3zM364 369h3v1h-3zM362 370h2v1h-2zM367 370h2v1h-2zM362 371h1v1h-1zM368 371h1v1h-1zM361 372h1v1h-1zM369 372h1v1h-1zM361 373h1v1h-1zM369 373h1v1h-1zM361 374h1v1h-1zM369 374h1v1h-1zM362 375h1v1h-1zM368 375h1v1h-1zM362 376h2v1h-2zM367 376h2v1h-2zM364 377h3v1h-3zM364 358h3v1h-3zM362 359h2v1h-2zM367 359h2v1h-2zM362 360h1v1h-1zM368 360h1v1h-1zM361 361h1v1h-1zM369 361h1v1h-1zM361 362h1v1h-1zM369 362h1v1h-1zM361 363h1v1h-1zM369 363h1v1h-1zM362 364h1v1h-1zM368 364h1v1h-1zM362 365h2v1h-2zM367 365h2v1h-2zM364 366h3v1h-3zM364 347h3v1h-3zM362 348h2v1h-2zM367 348h2v1h-2zM362 349h1v1h-1zM368 349h1v1h-1zM361 350h1v1h-1zM369 350h1v1h-1zM361 351h1v1h-1zM369 351h1v1h-1zM361 352h1v1h-1zM369 352h1v1h-1zM362 353h1v1h-1zM368 353h1v1h-1zM362 354h2v1h-2zM367 354h2v1h-2zM364 355h3v1h-3zM364 335h3v1h-3zM362 336h2v1h-2zM367 336h2v1h-2zM362 337h1v1h-1zM368 337h1v1h-1zM361 338h1v1h-1zM369 338h1v1h-1zM361 339h1v1h-1zM369 339h1v1h-1zM361 340h1v1h-1zM369 340h1v1h-1zM362 341h1v1h-1zM368 341h1v1h-1zM362 342h2v1h-2zM367 342h2v1h-2zM364 343h3v1h-3zM364 324h3v1h-3zM362 325h2v1h-2zM367 325h2v1h-2zM362 326h1v1h-1zM368 326h1v1h-1zM361 327h1v1h-1zM369 327h1v1h-1zM361 328h1v1h-1zM369 328h1v1h-1zM361 329h1v1h-1zM369 329h1v1h-1zM362 330h1v1h-1zM368 330h1v1h-1zM362 331h2v1h-2zM367 331h2v1h-2zM364 332h3v1h-3zM364 313h3v1h-3zM362 314h2v1h-2zM367 314h2v1h-2zM362 315h1v1h-1zM368 315h1v1h-1zM361 316h1v1h-1zM369 316h1v1h-1zM361 317h1v1h-1zM369 317h1v1h-1zM361 318h1v1h-1zM369 318h1v1h-1zM362 319h1v1h-1zM368 319h1v1h-1zM362 320h2v1h-2zM367 320h2v1h-2zM364 321h3v1h-3zM364 302h3v1h-3zM362 303h2v1h-2zM367 303h2v1h-2zM362 304h1v1h-1zM368 304h1v1h-1zM361 305h1v1h-1zM369 305h1v1h-1zM361 306h1v1h-1zM369 306h1v1h-1zM361 307h1v1h-1zM369 307h1v1h-1zM362 308h1v1h-1zM368 308h1v1h-1zM362 309h2v1h-2zM367 309h2v1h-2zM364 310h3v1h-3zM364 290h3v1h-3zM362 291h2v1h-2zM367 291h2v1h-2zM362 292h1v1h-1zM368 292h1v1h-1zM361 293h1v1h-1zM369 293h1v1h-1zM361 294h1v1h-1zM369 294h1v1h-1zM361 295h1v1h-1zM369 295h1v1h-1zM362 296h1v1h-1zM368 296h1v1h-1zM362 297h2v1h-2zM367 297h2v1h-2zM364 298h3v1h-3zM364 279h3v1h-3zM362 280h2v1h-2zM367 280h2v1h-2zM362 281h1v1h-1zM368 281h1v1h-1zM361 282h1v1h-1zM369 282h1v1h-1zM361 283h1v1h-1zM369 283h1v1h-1zM361 284h1v1h-1zM369 284h1v1h-1zM362 285h1v1h-1zM368 285h1v1h-1zM362 286h2v1h-2zM367 286h2v1h-2zM364 287h3v1h-3zM364 268h3v1h-3zM362 269h2v1h-2zM367 269h2v1h-2zM362 270h1v1h-1zM368 270h1v1h-1zM361 271h1v1h-1zM369 271h1v1h-1zM361 272h1v1h-1zM369 272h1v1h-1zM361 273h1v1h-1zM369 273h1v1h-1zM362 274h1v1h-1zM368 274h1v1h-1zM362 275h2v1h-2zM367 275h2v1h-2zM364 276h3v1h-3zM387 538h3v1h-3zM385 539h2v1h-2zM390 539h2v1h-2zM385 540h1v1h-1zM391 540h1v1h-1zM384 541h1v1h-1zM392 541h1v1h-1zM384 542h1v1h-1zM392 542h1v1h-1zM384 543h1v1h-1zM392 543h1v1h-1zM385 544h1v1h-1zM391 544h1v1h-1zM385 545h2v1h-2zM390 545h2v1h-2zM387 546h3v1h-3zM387 527h3v1h-3zM385 528h2v1h-2zM390 528h2v1h-2zM385 529h1v1h-1zM391 529h1v1h-1zM384 530h1v1h-1zM392 530h1v1h-1zM384 531h1v1h-1zM392 531h1v1h-1zM384 532h1v1h-1zM392 532h1v1h-1zM385 533h1v1h-1zM391 533h1v1h-1zM385 534h2v1h-2zM390 534h2v1h-2zM387 535h3v1h-3zM387 516h3v1h-3zM385 517h2v1h-2zM390 517h2v1h-2zM385 518h1v1h-1zM391 518h1v1h-1zM384 519h1v1h-1zM392 519h1v1h-1zM384 520h1v1h-1zM392 520h1v1h-1zM384 521h1v1h-1zM392 521h1v1h-1zM385 522h1v1h-1zM391 522h1v1h-1zM385 523h2v1h-2zM390 523h2v1h-2zM387 524h3v1h-3zM387 505h3v1h-3zM385 506h2v1h-2zM390 506h2v1h-2zM385 507h1v1h-1zM391 507h1v1h-1zM384 508h1v1h-1zM392 508h1v1h-1zM384 509h1v1h-1zM392 509h1v1h-1zM384 510h1v1h-1zM392 510h1v1h-1zM385 511h1v1h-1zM391 511h1v1h-1zM385 512h2v1h-2zM390 512h2v1h-2zM387 513h3v1h-3zM387 493h3v1h-3zM385 494h2v1h-2zM390 494h2v1h-2zM385 495h1v1h-1zM391 495h1v1h-1zM384 496h1v1h-1zM392 496h1v1h-1zM384 497h1v1h-1zM392 497h1v1h-1zM384 498h1v1h-1zM392 498h1v1h-1zM385 499h1v1h-1zM391 499h1v1h-1zM385 500h2v1h-2zM390 500h2v1h-2zM387 501h3v1h-3zM387 471h3v1h-3zM385 472h2v1h-2zM390 472h2v1h-2zM385 473h1v1h-1zM391 473h1v1h-1zM384 474h1v1h-1zM392 474h1v1h-1zM384 475h1v1h-1zM392 475h1v1h-1zM384 476h1v1h-1zM392 476h1v1h-1zM385 477h1v1h-1zM391 477h1v1h-1zM385 478h2v1h-2zM390 478h2v1h-2zM387 479h3v1h-3zM387 459h3v1h-3zM385 460h2v1h-2zM390 460h2v1h-2zM385 461h1v1h-1zM391 461h1v1h-1zM384 462h1v1h-1zM392 462h1v1h-1zM384 463h1v1h-1zM392 463h1v1h-1zM384 464h1v1h-1zM392 464h1v1h-1zM385 465h1v1h-1zM391 465h1v1h-1zM385 466h2v1h-2zM390 466h2v1h-2zM387 467h3v1h-3zM387 448h3v1h-3zM385 449h2v1h-2zM390 449h2v1h-2zM385 450h1v1h-1zM391 450h1v1h-1zM384 451h1v1h-1zM392 451h1v1h-1zM384 452h1v1h-1zM392 452h1v1h-1zM384 453h1v1h-1zM392 453h1v1h-1zM385 454h1v1h-1zM391 454h1v1h-1zM385 455h2v1h-2zM390 455h2v1h-2zM387 456h3v1h-3zM387 437h3v1h-3zM385 438h2v1h-2zM390 438h2v1h-2zM385 439h1v1h-1zM391 439h1v1h-1zM384 440h1v1h-1zM392 440h1v1h-1zM384 441h1v1h-1zM392 441h1v1h-1zM384 442h1v1h-1zM392 442h1v1h-1zM385 443h1v1h-1zM391 443h1v1h-1zM385 444h2v1h-2zM390 444h2v1h-2zM387 445h3v1h-3zM387 426h3v1h-3zM385 427h2v1h-2zM390 427h2v1h-2zM385 428h1v1h-1zM391 428h1v1h-1zM384 429h1v1h-1zM392 429h1v1h-1zM384 430h1v1h-1zM392 430h1v1h-1zM384 431h1v1h-1zM392 431h1v1h-1zM385 432h1v1h-1zM391 432h1v1h-1zM385 433h2v1h-2zM390 433h2v1h-2zM387 434h3v1h-3zM387 414h3v1h-3zM385 415h2v1h-2zM390 415h2v1h-2zM385 416h1v1h-1zM391 416h1v1h-1zM384 417h1v1h-1zM392 417h1v1h-1zM384 418h1v1h-1zM392 418h1v1h-1zM384 419h1v1h-1zM392 419h1v1h-1zM385 420h1v1h-1zM391 420h1v1h-1zM385 421h2v1h-2zM390 421h2v1h-2zM387 422h3v1h-3zM387 403h3v1h-3zM385 404h2v1h-2zM390 404h2v1h-2zM385 405h1v1h-1zM391 405h1v1h-1zM384 406h1v1h-1zM392 406h1v1h-1zM384 407h1v1h-1zM392 407h1v1h-1zM384 408h1v1h-1zM392 408h1v1h-1zM385 409h1v1h-1zM391 409h1v1h-1zM385 410h2v1h-2zM390 410h2v1h-2zM387 411h3v1h-3zM387 392h3v1h-3zM385 393h2v1h-2zM390 393h2v1h-2zM385 394h1v1h-1zM391 394h1v1h-1zM384 395h1v1h-1zM392 395h1v1h-1zM384 396h1v1h-1zM392 396h1v1h-1zM384 397h1v1h-1zM392 397h1v1h-1zM385 398h1v1h-1zM391 398h1v1h-1zM385 399h2v1h-2zM390 399h2v1h-2zM387 400h3v1h-3zM387 381h3v1h-3zM385 382h2v1h-2zM390 382h2v1h-2zM385 383h1v1h-1zM391 383h1v1h-1zM384 384h1v1h-1zM392 384h1v1h-1zM384 385h1v1h-1zM392 385h1v1h-1zM384 386h1v1h-1zM392 386h1v1h-1zM385 387h1v1h-1zM391 387h1v1h-1zM385 388h2v1h-2zM390 388h2v1h-2zM387 389h3v1h-3zM410 324h3v1h-3zM408 325h2v1h-2zM413 325h2v1h-2zM408 326h1v1h-1zM414 326h1v1h-1zM407 327h1v1h-1zM415 327h1v1h-1zM407 328h1v1h-1zM415 328h1v1h-1zM407 329h1v1h-1zM415 329h1v1h-1zM408 330h1v1h-1zM414 330h1v1h-1zM408 331h2v1h-2zM413 331h2v1h-2zM410 332h3v1h-3zM410 302h3v1h-3zM408 303h2v1h-2zM413 303h2v1h-2zM408 304h1v1h-1zM414 304h1v1h-1zM407 305h1v1h-1zM415 305h1v1h-1zM407 306h1v1h-1zM415 306h1v1h-1zM407 307h1v1h-1zM415 307h1v1h-1zM408 308h1v1h-1zM414 308h1v1h-1zM408 309h2v1h-2zM413 309h2v1h-2zM410 310h3v1h-3zM410 290h3v1h-3zM408 291h2v1h-2zM413 291h2v1h-2zM408 292h1v1h-1zM414 292h1v1h-1zM407 293h1v1h-1zM415 293h1v1h-1zM407 294h1v1h-1zM415 294h1v1h-1zM407 295h1v1h-1zM415 295h1v1h-1zM408 296h1v1h-1zM414 296h1v1h-1zM408 297h2v1h-2zM413 297h2v1h-2zM410 298h3v1h-3zM410 279h3v1h-3zM408 280h2v1h-2zM413 280h2v1h-2zM408 281h1v1h-1zM414 281h1v1h-1zM407 282h1v1h-1zM415 282h1v1h-1zM407 283h1v1h-1zM415 283h1v1h-1zM407 284h1v1h-1zM415 284h1v1h-1zM408 285h1v1h-1zM414 285h1v1h-1zM408 286h2v1h-2zM413 286h2v1h-2zM410 287h3v1h-3zM432 527h3v1h-3zM430 528h2v1h-2zM435 528h2v1h-2zM430 529h1v1h-1zM436 529h1v1h-1zM429 530h1v1h-1zM437 530h1v1h-1zM429 531h1v1h-1zM437 531h1v1h-1zM429 532h1v1h-1zM437 532h1v1h-1zM430 533h1v1h-1zM436 533h1v1h-1zM430 534h2v1h-2zM435 534h2v1h-2zM432 535h3v1h-3zM432 516h3v1h-3zM430 517h2v1h-2zM435 517h2v1h-2zM430 518h1v1h-1zM436 518h1v1h-1zM429 519h1v1h-1zM437 519h1v1h-1zM429 520h1v1h-1zM437 520h1v1h-1zM429 521h1v1h-1zM437 521h1v1h-1zM430 522h1v1h-1zM436 522h1v1h-1zM430 523h2v1h-2zM435 523h2v1h-2zM432 524h3v1h-3zM432 505h3v1h-3zM430 506h2v1h-2zM435 506h2v1h-2zM430 507h1v1h-1zM436 507h1v1h-1zM429 508h1v1h-1zM437 508h1v1h-1zM429 509h1v1h-1zM437 509h1v1h-1zM429 510h1v1h-1zM437 510h1v1h-1zM430 511h1v1h-1zM436 511h1v1h-1zM430 512h2v1h-2zM435 512h2v1h-2zM432 513h3v1h-3zM432 493h3v1h-3zM430 494h2v1h-2zM435 494h2v1h-2zM430 495h1v1h-1zM436 495h1v1h-1zM429 496h1v1h-1zM437 496h1v1h-1zM429 497h1v1h-1zM437 497h1v1h-1zM429 498h1v1h-1zM437 498h1v1h-1zM430 499h1v1h-1zM436 499h1v1h-1zM430 500h2v1h-2zM435 500h2v1h-2zM432 501h3v1h-3zM432 482h3v1h-3zM430 483h2v1h-2zM435 483h2v1h-2zM430 484h1v1h-1zM436 484h1v1h-1zM429 485h1v1h-1zM437 485h1v1h-1zM429 486h1v1h-1zM437 486h1v1h-1zM429 487h1v1h-1zM437 487h1v1h-1zM430 488h1v1h-1zM436 488h1v1h-1zM430 489h2v1h-2zM435 489h2v1h-2zM432 490h3v1h-3zM432 471h3v1h-3zM430 472h2v1h-2zM435 472h2v1h-2zM430 473h1v1h-1zM436 473h1v1h-1zM429 474h1v1h-1zM437 474h1v1h-1zM429 475h1v1h-1zM437 475h1v1h-1zM429 476h1v1h-1zM437 476h1v1h-1zM430 477h1v1h-1zM436 477h1v1h-1zM430 478h2v1h-2zM435 478h2v1h-2zM432 479h3v1h-3zM432 459h3v1h-3zM430 460h2v1h-2zM435 460h2v1h-2zM430 461h1v1h-1zM436 461h1v1h-1zM429 462h1v1h-1zM437 462h1v1h-1zM429 463h1v1h-1zM437 463h1v1h-1zM429 464h1v1h-1zM437 464h1v1h-1zM430 465h1v1h-1zM436 465h1v1h-1zM430 466h2v1h-2zM435 466h2v1h-2zM432 467h3v1h-3zM432 448h3v1h-3zM430 449h2v1h-2zM435 449h2v1h-2zM430 450h1v1h-1zM436 450h1v1h-1zM429 451h1v1h-1zM437 451h1v1h-1zM429 452h1v1h-1zM437 452h1v1h-1zM429 453h1v1h-1zM437 453h1v1h-1zM430 454h1v1h-1zM436 454h1v1h-1zM430 455h2v1h-2zM435 455h2v1h-2zM432 456h3v1h-3zM432 426h3v1h-3zM430 427h2v1h-2zM435 427h2v1h-2zM430 428h1v1h-1zM436 428h1v1h-1zM429 429h1v1h-1zM437 429h1v1h-1zM429 430h1v1h-1zM437 430h1v1h-1zM429 431h1v1h-1zM437 431h1v1h-1zM430 432h1v1h-1zM436 432h1v1h-1zM430 433h2v1h-2zM435 433h2v1h-2zM432 434h3v1h-3zM432 414h3v1h-3zM430 415h2v1h-2zM435 415h2v1h-2zM430 416h1v1h-1zM436 416h1v1h-1zM429 417h1v1h-1zM437 417h1v1h-1zM429 418h1v1h-1zM437 418h1v1h-1zM429 419h1v1h-1zM437 419h1v1h-1zM430 420h1v1h-1zM436 420h1v1h-1zM430 421h2v1h-2zM435 421h2v1h-2zM432 422h3v1h-3zM432 403h3v1h-3zM430 404h2v1h-2zM435 404h2v1h-2zM430 405h1v1h-1zM436 405h1v1h-1zM429 406h1v1h-1zM437 406h1v1h-1zM429 407h1v1h-1zM437 407h1v1h-1zM429 408h1v1h-1zM437 408h1v1h-1zM430 409h1v1h-1zM436 409h1v1h-1zM430 410h2v1h-2zM435 410h2v1h-2zM432 411h3v1h-3zM432 381h3v1h-3zM430 382h2v1h-2zM435 382h2v1h-2zM430 383h1v1h-1zM436 383h1v1h-1zM429 384h1v1h-1zM437 384h1v1h-1zM429 385h1v1h-1zM437 385h1v1h-1zM429 386h1v1h-1zM437 386h1v1h-1zM430 387h1v1h-1zM436 387h1v1h-1zM430 388h2v1h-2zM435 388h2v1h-2zM432 389h3v1h-3zM432 369h3v1h-3zM430 370h2v1h-2zM435 370h2v1h-2zM430 371h1v1h-1zM436 371h1v1h-1zM429 372h1v1h-1zM437 372h1v1h-1zM429 373h1v1h-1zM437 373h1v1h-1zM429 374h1v1h-1zM437 374h1v1h-1zM430 375h1v1h-1zM436 375h1v1h-1zM430 376h2v1h-2zM435 376h2v1h-2zM432 377h3v1h-3zM432 358h3v1h-3zM430 359h2v1h-2zM435 359h2v1h-2zM430 360h1v1h-1zM436 360h1v1h-1zM429 361h1v1h-1zM437 361h1v1h-1zM429 362h1v1h-1zM437 362h1v1h-1zM429 363h1v1h-1zM437 363h1v1h-1zM430 364h1v1h-1zM436 364h1v1h-1zM430 365h2v1h-2zM435 365h2v1h-2zM432 366h3v1h-3zM432 347h3v1h-3zM430 348h2v1h-2zM435 348h2v1h-2zM430 349h1v1h-1zM436 349h1v1h-1zM429 350h1v1h-1zM437 350h1v1h-1zM429 351h1v1h-1zM437 351h1v1h-1zM429 352h1v1h-1zM437 352h1v1h-1zM430 353h1v1h-1zM436 353h1v1h-1zM430 354h2v1h-2zM435 354h2v1h-2zM432 355h3v1h-3zM432 335h3v1h-3zM430 336h2v1h-2zM435 336h2v1h-2zM430 337h1v1h-1zM436 337h1v1h-1zM429 338h1v1h-1zM437 338h1v1h-1zM429 339h1v1h-1zM437 339h1v1h-1zM429 340h1v1h-1zM437 340h1v1h-1zM430 341h1v1h-1zM436 341h1v1h-1zM430 342h2v1h-2zM435 342h2v1h-2zM432 343h3v1h-3zM432 324h3v1h-3zM430 325h2v1h-2zM435 325h2v1h-2zM430 326h1v1h-1zM436 326h1v1h-1zM429 327h1v1h-1zM437 327h1v1h-1zM429 328h1v1h-1zM437 328h1v1h-1zM429 329h1v1h-1zM437 329h1v1h-1zM430 330h1v1h-1zM436 330h1v1h-1zM430 331h2v1h-2zM435 331h2v1h-2zM432 332h3v1h-3zM432 313h3v1h-3zM430 314h2v1h-2zM435 314h2v1h-2zM430 315h1v1h-1zM436 315h1v1h-1zM429 316h1v1h-1zM437 316h1v1h-1zM429 317h1v1h-1zM437 317h1v1h-1zM429 318h1v1h-1zM437 318h1v1h-1zM430 319h1v1h-1zM436 319h1v1h-1zM430 320h2v1h-2zM435 320h2v1h-2zM432 321h3v1h-3zM432 302h3v1h-3zM430 303h2v1h-2zM435 303h2v1h-2zM430 304h1v1h-1zM436 304h1v1h-1zM429 305h1v1h-1zM437 305h1v1h-1zM429 306h1v1h-1zM437 306h1v1h-1zM429 307h1v1h-1zM437 307h1v1h-1zM430 308h1v1h-1zM436 308h1v1h-1zM430 309h2v1h-2zM435 309h2v1h-2zM432 310h3v1h-3zM455 335h3v1h-3zM453 336h2v1h-2zM458 336h2v1h-2zM453 337h1v1h-1zM459 337h1v1h-1zM452 338h1v1h-1zM460 338h1v1h-1zM452 339h1v1h-1zM460 339h1v1h-1zM452 340h1v1h-1zM460 340h1v1h-1zM453 341h1v1h-1zM459 341h1v1h-1zM453 342h2v1h-2zM458 342h2v1h-2zM455 343h3v1h-3zM455 324h3v1h-3zM453 325h2v1h-2zM458 325h2v1h-2zM453 326h1v1h-1zM459 326h1v1h-1zM452 327h1v1h-1zM460 327h1v1h-1zM452 328h1v1h-1zM460 328h1v1h-1zM452 329h1v1h-1zM460 329h1v1h-1zM453 330h1v1h-1zM459 330h1v1h-1zM453 331h2v1h-2zM458 331h2v1h-2zM455 332h3v1h-3zM455 313h3v1h-3zM453 314h2v1h-2zM458 314h2v1h-2zM453 315h1v1h-1zM459 315h1v1h-1zM452 316h1v1h-1zM460 316h1v1h-1zM452 317h1v1h-1zM460 317h1v1h-1zM452 318h1v1h-1zM460 318h1v1h-1zM453 319h1v1h-1zM459 319h1v1h-1zM453 320h2v1h-2zM458 320h2v1h-2zM455 321h3v1h-3zM455 302h3v1h-3zM453 303h2v1h-2zM458 303h2v1h-2zM453 304h1v1h-1zM459 304h1v1h-1zM452 305h1v1h-1zM460 305h1v1h-1zM452 306h1v1h-1zM460 306h1v1h-1zM452 307h1v1h-1zM460 307h1v1h-1zM453 308h1v1h-1zM459 308h1v1h-1zM453 309h2v1h-2zM458 309h2v1h-2zM455 310h3v1h-3zM455 290h3v1h-3zM453 291h2v1h-2zM458 291h2v1h-2zM453 292h1v1h-1zM459 292h1v1h-1zM452 293h1v1h-1zM460 293h1v1h-1zM452 294h1v1h-1zM460 294h1v1h-1zM452 295h1v1h-1zM460 295h1v1h-1zM453 296h1v1h-1zM459 296h1v1h-1zM453 297h2v1h-2zM458 297h2v1h-2zM455 298h3v1h-3zM477 403h3v1h-3zM475 404h2v1h-2zM480 404h2v1h-2zM475 405h1v1h-1zM481 405h1v1h-1zM474 406h1v1h-1zM482 406h1v1h-1zM474 407h1v1h-1zM482 407h1v1h-1zM474 408h1v1h-1zM482 408h1v1h-1zM475 409h1v1h-1zM481 409h1v1h-1zM475 410h2v1h-2zM480 410h2v1h-2zM477 411h3v1h-3zM477 392h3v1h-3zM475 393h2v1h-2zM480 393h2v1h-2zM475 394h1v1h-1zM481 394h1v1h-1zM474 395h1v1h-1zM482 395h1v1h-1zM474 396h1v1h-1zM482 396h1v1h-1zM474 397h1v1h-1zM482 397h1v1h-1zM475 398h1v1h-1zM481 398h1v1h-1zM475 399h2v1h-2zM480 399h2v1h-2zM477 400h3v1h-3zM477 381h3v1h-3zM475 382h2v1h-2zM480 382h2v1h-2zM475 383h1v1h-1zM481 383h1v1h-1zM474 384h1v1h-1zM482 384h1v1h-1zM474 385h1v1h-1zM482 385h1v1h-1zM474 386h1v1h-1zM482 386h1v1h-1zM475 387h1v1h-1zM481 387h1v1h-1zM475 388h2v1h-2zM480 388h2v1h-2zM477 389h3v1h-3zM477 369h3v1h-3zM475 370h2v1h-2zM480 370h2v1h-2zM475 371h1v1h-1zM481 371h1v1h-1zM474 372h1v1h-1zM482 372h1v1h-1zM474 373h1v1h-1zM482 373h1v1h-1zM474 374h1v1h-1zM482 374h1v1h-1zM475 375h1v1h-1zM481 375h1v1h-1zM475 376h2v1h-2zM480 376h2v1h-2zM477 377h3v1h-3zM477 358h3v1h-3zM475 359h2v1h-2zM480 359h2v1h-2zM475 360h1v1h-1zM481 360h1v1h-1zM474 361h1v1h-1zM482 361h1v1h-1zM474 362h1v1h-1zM482 362h1v1h-1zM474 363h1v1h-1zM482 363h1v1h-1zM475 364h1v1h-1zM481 364h1v1h-1zM475 365h2v1h-2zM480 365h2v1h-2zM477 366h3v1h-3zM477 347h3v1h-3zM475 348h2v1h-2zM480 348h2v1h-2zM475 349h1v1h-1zM481 349h1v1h-1zM474 350h1v1h-1zM482 350h1v1h-1zM474 351h1v1h-1zM482 351h1v1h-1zM474 352h1v1h-1zM482 352h1v1h-1zM475 353h1v1h-1zM481 353h1v1h-1zM475 354h2v1h-2zM480 354h2v1h-2zM477 355h3v1h-3zM477 335h3v1h-3zM475 336h2v1h-2zM480 336h2v1h-2zM475 337h1v1h-1zM481 337h1v1h-1zM474 338h1v1h-1zM482 338h1v1h-1zM474 339h1v1h-1zM482 339h1v1h-1zM474 340h1v1h-1zM482 340h1v1h-1zM475 341h1v1h-1zM481 341h1v1h-1zM475 342h2v1h-2zM480 342h2v1h-2zM477 343h3v1h-3zM477 324h3v1h-3zM475 325h2v1h-2zM480 325h2v1h-2zM475 326h1v1h-1zM481 326h1v1h-1zM474 327h1v1h-1zM482 327h1v1h-1zM474 328h1v1h-1zM482 328h1v1h-1zM474 329h1v1h-1zM482 329h1v1h-1zM475 330h1v1h-1zM481 330h1v1h-1zM475 331h2v1h-2zM480 331h2v1h-2zM477 332h3v1h-3zM500 403h3v1h-3zM498 404h2v1h-2zM503 404h2v1h-2zM498 405h1v1h-1zM504 405h1v1h-1zM497 406h1v1h-1zM505 406h1v1h-1zM497 407h1v1h-1zM505 407h1v1h-1zM497 408h1v1h-1zM505 408h1v1h-1zM498 409h1v1h-1zM504 409h1v1h-1zM498 410h2v1h-2zM503 410h2v1h-2zM500 411h3v1h-3zM500 392h3v1h-3zM498 393h2v1h-2zM503 393h2v1h-2zM498 394h1v1h-1zM504 394h1v1h-1zM497 395h1v1h-1zM505 395h1v1h-1zM497 396h1v1h-1zM505 396h1v1h-1zM497 397h1v1h-1zM505 397h1v1h-1zM498 398h1v1h-1zM504 398h1v1h-1zM498 399h2v1h-2zM503 399h2v1h-2zM500 400h3v1h-3zM500 381h3v1h-3zM498 382h2v1h-2zM503 382h2v1h-2zM498 383h1v1h-1zM504 383h1v1h-1zM497 384h1v1h-1zM505 384h1v1h-1zM497 385h1v1h-1zM505 385h1v1h-1zM497 386h1v1h-1zM505 386h1v1h-1zM498 387h1v1h-1zM504 387h1v1h-1zM498 388h2v1h-2zM503 388h2v1h-2zM500 389h3v1h-3zM522 516h3v1h-3zM520 517h2v1h-2zM525 517h2v1h-2zM520 518h1v1h-1zM526 518h1v1h-1zM519 519h1v1h-1zM527 519h1v1h-1zM519 520h1v1h-1zM527 520h1v1h-1zM519 521h1v1h-1zM527 521h1v1h-1zM520 522h1v1h-1zM526 522h1v1h-1zM520 523h2v1h-2zM525 523h2v1h-2zM522 524h3v1h-3zM522 505h3v1h-3zM520 506h2v1h-2zM525 506h2v1h-2zM520 507h1v1h-1zM526 507h1v1h-1zM519 508h1v1h-1zM527 508h1v1h-1zM519 509h1v1h-1zM527 509h1v1h-1zM519 510h1v1h-1zM527 510h1v1h-1zM520 511h1v1h-1zM526 511h1v1h-1zM520 512h2v1h-2zM525 512h2v1h-2zM522 513h3v1h-3zM522 493h3v1h-3zM520 494h2v1h-2zM525 494h2v1h-2zM520 495h1v1h-1zM526 495h1v1h-1zM519 496h1v1h-1zM527 496h1v1h-1zM519 497h1v1h-1zM527 497h1v1h-1zM519 498h1v1h-1zM527 498h1v1h-1zM520 499h1v1h-1zM526 499h1v1h-1zM520 500h2v1h-2zM525 500h2v1h-2zM522 501h3v1h-3zM522 482h3v1h-3zM520 483h2v1h-2zM525 483h2v1h-2zM520 484h1v1h-1zM526 484h1v1h-1zM519 485h1v1h-1zM527 485h1v1h-1zM519 486h1v1h-1zM527 486h1v1h-1zM519 487h1v1h-1zM527 487h1v1h-1zM520 488h1v1h-1zM526 488h1v1h-1zM520 489h2v1h-2zM525 489h2v1h-2zM522 490h3v1h-3zM522 471h3v1h-3zM520 472h2v1h-2zM525 472h2v1h-2zM520 473h1v1h-1zM526 473h1v1h-1zM519 474h1v1h-1zM527 474h1v1h-1zM519 475h1v1h-1zM527 475h1v1h-1zM519 476h1v1h-1zM527 476h1v1h-1zM520 477h1v1h-1zM526 477h1v1h-1zM520 478h2v1h-2zM525 478h2v1h-2zM522 479h3v1h-3zM522 459h3v1h-3zM520 460h2v1h-2zM525 460h2v1h-2zM520 461h1v1h-1zM526 461h1v1h-1zM519 462h1v1h-1zM527 462h1v1h-1zM519 463h1v1h-1zM527 463h1v1h-1zM519 464h1v1h-1zM527 464h1v1h-1zM520 465h1v1h-1zM526 465h1v1h-1zM520 466h2v1h-2zM525 466h2v1h-2zM522 467h3v1h-3zM522 448h3v1h-3zM520 449h2v1h-2zM525 449h2v1h-2zM520 450h1v1h-1zM526 450h1v1h-1zM519 451h1v1h-1zM527 451h1v1h-1zM519 452h1v1h-1zM527 452h1v1h-1zM519 453h1v1h-1zM527 453h1v1h-1zM520 454h1v1h-1zM526 454h1v1h-1zM520 455h2v1h-2zM525 455h2v1h-2zM522 456h3v1h-3zM522 437h3v1h-3zM520 438h2v1h-2zM525 438h2v1h-2zM520 439h1v1h-1zM526 439h1v1h-1zM519 440h1v1h-1zM527 440h1v1h-1zM519 441h1v1h-1zM527 441h1v1h-1zM519 442h1v1h-1zM527 442h1v1h-1zM520 443h1v1h-1zM526 443h1v1h-1zM520 444h2v1h-2zM525 444h2v1h-2zM522 445h3v1h-3zM522 426h3v1h-3zM520 427h2v1h-2zM525 427h2v1h-2zM520 428h1v1h-1zM526 428h1v1h-1zM519 429h1v1h-1zM527 429h1v1h-1zM519 430h1v1h-1zM527 430h1v1h-1zM519 431h1v1h-1zM527 431h1v1h-1zM520 432h1v1h-1zM526 432h1v1h-1zM520 433h2v1h-2zM525 433h2v1h-2zM522 434h3v1h-3zM522 414h3v1h-3zM520 415h2v1h-2zM525 415h2v1h-2zM520 416h1v1h-1zM526 416h1v1h-1zM519 417h1v1h-1zM527 417h1v1h-1zM519 418h1v1h-1zM527 418h1v1h-1zM519 419h1v1h-1zM527 419h1v1h-1zM520 420h1v1h-1zM526 420h1v1h-1zM520 421h2v1h-2zM525 421h2v1h-2zM522 422h3v1h-3zM522 403h3v1h-3zM520 404h2v1h-2zM525 404h2v1h-2zM520 405h1v1h-1zM526 405h1v1h-1zM519 406h1v1h-1zM527 406h1v1h-1zM519 407h1v1h-1zM527 407h1v1h-1zM519 408h1v1h-1zM527 408h1v1h-1zM520 409h1v1h-1zM526 409h1v1h-1zM520 410h2v1h-2zM525 410h2v1h-2zM522 411h3v1h-3zM522 392h3v1h-3zM520 393h2v1h-2zM525 393h2v1h-2zM520 394h1v1h-1zM526 394h1v1h-1zM519 395h1v1h-1zM527 395h1v1h-1zM519 396h1v1h-1zM527 396h1v1h-1zM519 397h1v1h-1zM527 397h1v1h-1zM520 398h1v1h-1zM526 398h1v1h-1zM520 399h2v1h-2zM525 399h2v1h-2zM522 400h3v1h-3zM522 369h3v1h-3zM520 370h2v1h-2zM525 370h2v1h-2zM520 371h1v1h-1zM526 371h1v1h-1zM519 372h1v1h-1zM527 372h1v1h-1zM519 373h1v1h-1zM527 373h1v1h-1zM519 374h1v1h-1zM527 374h1v1h-1zM520 375h1v1h-1zM526 375h1v1h-1zM520 376h2v1h-2zM525 376h2v1h-2zM522 377h3v1h-3zM522 358h3v1h-3zM520 359h2v1h-2zM525 359h2v1h-2zM520 360h1v1h-1zM526 360h1v1h-1zM519 361h1v1h-1zM527 361h1v1h-1zM519 362h1v1h-1zM527 362h1v1h-1zM519 363h1v1h-1zM527 363h1v1h-1zM520 364h1v1h-1zM526 364h1v1h-1zM520 365h2v1h-2zM525 365h2v1h-2zM522 366h3v1h-3zM522 347h3v1h-3zM520 348h2v1h-2zM525 348h2v1h-2zM520 349h1v1h-1zM526 349h1v1h-1zM519 350h1v1h-1zM527 350h1v1h-1zM519 351h1v1h-1zM527 351h1v1h-1zM519 352h1v1h-1zM527 352h1v1h-1zM520 353h1v1h-1zM526 353h1v1h-1zM520 354h2v1h-2zM525 354h2v1h-2zM522 355h3v1h-3zM522 335h3v1h-3zM520 336h2v1h-2zM525 336h2v1h-2zM520 337h1v1h-1zM526 337h1v1h-1zM519 338h1v1h-1zM527 338h1v1h-1zM519 339h1v1h-1zM527 339h1v1h-1zM519 340h1v1h-1zM527 340h1v1h-1zM520 341h1v1h-1zM526 341h1v1h-1zM520 342h2v1h-2zM525 342h2v1h-2zM522 343h3v1h-3zM545 561h3v1h-3zM543 562h2v1h-2zM548 562h2v1h-2zM543 563h1v1h-1zM549 563h1v1h-1zM542 564h1v1h-1zM550 564h1v1h-1zM542 565h1v1h-1zM550 565h1v1h-1zM542 566h1v1h-1zM550 566h1v1h-1zM543 567h1v1h-1zM549 567h1v1h-1zM543 568h2v1h-2zM548 568h2v1h-2zM545 569h3v1h-3zM545 550h3v1h-3zM543 551h2v1h-2zM548 551h2v1h-2zM543 552h1v1h-1zM549 552h1v1h-1zM542 553h1v1h-1zM550 553h1v1h-1zM542 554h1v1h-1zM550 554h1v1h-1zM542 555h1v1h-1zM550 555h1v1h-1zM543 556h1v1h-1zM549 556h1v1h-1zM543 557h2v1h-2zM548 557h2v1h-2zM545 558h3v1h-3zM545 538h3v1h-3zM543 539h2v1h-2zM548 539h2v1h-2zM543 540h1v1h-1zM549 540h1v1h-1zM542 541h1v1h-1zM550 541h1v1h-1zM542 542h1v1h-1zM550 542h1v1h-1zM542 543h1v1h-1zM550 543h1v1h-1zM543 544h1v1h-1zM549 544h1v1h-1zM543 545h2v1h-2zM548 545h2v1h-2zM545 546h3v1h-3zM545 527h3v1h-3zM543 528h2v1h-2zM548 528h2v1h-2zM543 529h1v1h-1zM549 529h1v1h-1zM542 530h1v1h-1zM550 530h1v1h-1zM542 531h1v1h-1zM550 531h1v1h-1zM542 532h1v1h-1zM550 532h1v1h-1zM543 533h1v1h-1zM549 533h1v1h-1zM543 534h2v1h-2zM548 534h2v1h-2zM545 535h3v1h-3zM545 516h3v1h-3zM543 517h2v1h-2zM548 517h2v1h-2zM543 518h1v1h-1zM549 518h1v1h-1zM542 519h1v1h-1zM550 519h1v1h-1zM542 520h1v1h-1zM550 520h1v1h-1zM542 521h1v1h-1zM550 521h1v1h-1zM543 522h1v1h-1zM549 522h1v1h-1zM543 523h2v1h-2zM548 523h2v1h-2zM545 524h3v1h-3zM545 505h3v1h-3zM543 506h2v1h-2zM548 506h2v1h-2zM543 507h1v1h-1zM549 507h1v1h-1zM542 508h1v1h-1zM550 508h1v1h-1zM542 509h1v1h-1zM550 509h1v1h-1zM542 510h1v1h-1zM550 510h1v1h-1zM543 511h1v1h-1zM549 511h1v1h-1zM543 512h2v1h-2zM548 512h2v1h-2zM545 513h3v1h-3zM545 493h3v1h-3zM543 494h2v1h-2zM548 494h2v1h-2zM543 495h1v1h-1zM549 495h1v1h-1zM542 496h1v1h-1zM550 496h1v1h-1zM542 497h1v1h-1zM550 497h1v1h-1zM542 498h1v1h-1zM550 498h1v1h-1zM543 499h1v1h-1zM549 499h1v1h-1zM543 500h2v1h-2zM548 500h2v1h-2zM545 501h3v1h-3zM567 482h3v1h-3zM565 483h2v1h-2zM570 483h2v1h-2zM565 484h1v1h-1zM571 484h1v1h-1zM564 485h1v1h-1zM572 485h1v1h-1zM564 486h1v1h-1zM572 486h1v1h-1zM564 487h1v1h-1zM572 487h1v1h-1zM565 488h1v1h-1zM571 488h1v1h-1zM565 489h2v1h-2zM570 489h2v1h-2zM567 490h3v1h-3zM567 471h3v1h-3zM565 472h2v1h-2zM570 472h2v1h-2zM565 473h1v1h-1zM571 473h1v1h-1zM564 474h1v1h-1zM572 474h1v1h-1zM564 475h1v1h-1zM572 475h1v1h-1zM564 476h1v1h-1zM572 476h1v1h-1zM565 477h1v1h-1zM571 477h1v1h-1zM565 478h2v1h-2zM570 478h2v1h-2zM567 479h3v1h-3zM567 459h3v1h-3zM565 460h2v1h-2zM570 460h2v1h-2zM565 461h1v1h-1zM571 461h1v1h-1zM564 462h1v1h-1zM572 462h1v1h-1zM564 463h1v1h-1zM572 463h1v1h-1zM564 464h1v1h-1zM572 464h1v1h-1zM565 465h1v1h-1zM571 465h1v1h-1zM565 466h2v1h-2zM570 466h2v1h-2zM567 467h3v1h-3zM567 448h3v1h-3zM565 449h2v1h-2zM570 449h2v1h-2zM565 450h1v1h-1zM571 450h1v1h-1zM564 451h1v1h-1zM572 451h1v1h-1zM564 452h1v1h-1zM572 452h1v1h-1zM564 453h1v1h-1zM572 453h1v1h-1zM565 454h1v1h-1zM571 454h1v1h-1zM565 455h2v1h-2zM570 455h2v1h-2zM567 456h3v1h-3zM567 437h3v1h-3zM565 438h2v1h-2zM570 438h2v1h-2zM565 439h1v1h-1zM571 439h1v1h-1zM564 440h1v1h-1zM572 440h1v1h-1zM564 441h1v1h-1zM572 441h1v1h-1zM564 442h1v1h-1zM572 442h1v1h-1zM565 443h1v1h-1zM571 443h1v1h-1zM565 444h2v1h-2zM570 444h2v1h-2zM567 445h3v1h-3z" fill="#FF0000"/><g font-size="10" fill="#000"><text x="73.6" y="356" text-anchor="middle">4</text><text x="84.6" y="266" text-anchor="middle">5</text><text x="107.6" y="232" text-anchor="middle">6</text><text x="129.6" y="356" text-anchor="middle">7</text><text x="140.6" y="390" text-anchor="middle">8</text><text x="152.6" y="311" text-anchor="middle">9</text><text x="174.6" y="401" text-anchor="middle">A</text><text x="197.6" y="311" text-anchor="middle">B</text><text x="219.6" y="367" text-anchor="middle">C</text><text x="242.6" y="333" text-anchor="middle">1</text><text x="253.6" y="356" text-anchor="middle">2</text><text x="275.6" y="401" text-anchor="middle">3</text><text x="287.6" y="446" text-anchor="middle">4</text><text x="298.6" y="480" text-anchor="middle">5</text><text x="309.6" y="378" text-anchor="middle">6</text><text x="320.6" y="367" text-anchor="middle">7</text><text x="320.6" y="514" text-anchor="middle">8</text><text x="332.6" y="401" text-anchor="middle">9</text><text x="343.6" y="288" text-anchor="middle">A</text><text x="354.6" y="367" text-anchor="middle">B</text><text x="365.6" y="266" text-anchor="middle">1</text><text x="377.6" y="412" text-anchor="middle">2</text><text x="388.6" y="378" text-anchor="middle">3</text><text x="388.6" y="491" text-anchor="middle">4</text><text x="399.6" y="333" text-anchor="middle">6</text><text x="399.6" y="536" text-anchor="middle">5</text><text x="411.6" y="322" text-anchor="middle">7</text><text x="433.6" y="299" text-anchor="middle">8</text><text x="433.6" y="401" text-anchor="middle">9</text><text x="433.6" y="446" text-anchor="middle">A</text><text x="444.6" y="288" text-anchor="middle">C</text><text x="444.6" y="468" text-anchor="middle">B</text><text x="467.6" y="333" text-anchor="middle">1</text><text x="478.6" y="322" text-anchor="middle">2</text><text x="489.6" y="401" text-anchor="middle">3</text><text x="512.6" y="333" text-anchor="middle">4</text><text x="523.6" y="390" text-anchor="middle">5</text><text x="534.6" y="514" text-anchor="middle">6</text><text x="557.6" y="435" text-anchor="middle">7</text><text x="579.6" y="435" text-anchor="middle">8</text><text x="579.6" y="344" text-anchor="middle">9</text><text x="579.6" y="311" text-anchor="middle">A</text></g></g><rect x="575" y="278" width="11" height="11" fill="#C4C000"/><path d="M575 279h1v1h-1zM584 279h1v1h-1zM576 280h1v1h-1zM583 280h1v1h-1zM577 281h1v1h-1zM582 281h1v1h-1zM578 282h1v1h-1zM581 282h1v1h-1zM579 283h2v1h-2zM579 284h2v1h-2zM578 285h1v1h-1zM581 285h1v1h-1zM577 286h1v1h-1zM582 286h1v1h-1zM576 287h1v1h-1zM583 287h1v1h-1z" fill="#000"/><rect x="68" y="423" width="508" height="2" fill="#000"/><rect x="124" y="311" width="519" height="2" fill="#000"/><rect x="124" y="536" width="519" height="2" fill="#000"/><polyline points="68.0,414.3 79.4,399.2 113.1,333.0 124.4,325.0 135.7,325.0 146.9,335.2 158.2,337.2 169.4,336.3 180.7,338.5 192.0,336.0 203.2,333.8 214.5,334.3 225.7,335.3 237.0,338.3 248.2,330.7 259.5,326.1 270.8,328.7 282.0,339.0 293.3,348.0 304.5,366.5 315.8,379.0 327.0,393.7 338.3,398.3 349.6,384.6 360.8,370.8 372.1,365.3 383.3,368.4 394.6,385.1 405.9,388.7 417.1,375.0 428.4,360.2 439.6,369.9 450.9,376.5 462.1,365.0 473.4,356.2 484.7,358.2 495.9,363.8 507.2,369.4 518.4,368.3 529.7,378.3 541.0,401.0 552.2,424.2 563.5,437.1 574.7,442.4 586.0,431.3" fill="none" stroke="#000" stroke-width="1" shape-rendering="crispEdges"/><path d="M509 215.5 L586.5 278.5" stroke="#000" stroke-width="1" shape-rendering="crispEdges"/><rect x="453.5" y="171.5" width="132" height="44" fill="#FBFAE4" stroke="#000" stroke-width="1"/><text x="455.3" y="184" font-size="11" fill="#111" textLength="105.6" lengthAdjust="spacingAndGlyphs">a 74% o mercado está</text><text x="455.3" y="197" font-size="11" fill="#111" textLength="92.8" lengthAdjust="spacingAndGlyphs">muito perigoso para</text><text x="455.3" y="210" font-size="11" fill="#111" textLength="43.0" lengthAdjust="spacingAndGlyphs">compras.</text><rect x="648" y="143" width="17" height="546" fill="#FFFFFF"/><rect x="648" y="143" width="7" height="546" fill="#F7F5E4"/><rect x="649.5" y="143.5" width="14" height="15" rx="2" fill="#C3D3FD" stroke="#B6CAF7" stroke-width="1"/><path d="M653 153 L656.5 149.5 L660 153" stroke="#4D6185" stroke-width="2" fill="none"/><rect x="649.5" y="161.5" width="14" height="15" rx="2" fill="#C8D6FB" stroke="#B2C6F6" stroke-width="1"/><rect x="653" y="166" width="7" height="1" fill="#8FAEF5"/><rect x="653" y="168" width="7" height="1" fill="#8FAEF5"/><rect x="653" y="170" width="7" height="1" fill="#8FAEF5"/><rect x="653" y="172" width="7" height="1" fill="#8FAEF5"/><rect x="649.5" y="673.5" width="14" height="14" rx="2" fill="#C3D3FD" stroke="#B6CAF7" stroke-width="1"/><path d="M653 678 L656.5 681.5 L660 678" stroke="#4D6185" stroke-width="2" fill="none"/><rect x="68" y="689" width="580" height="17" fill="#FFFFFF"/><rect x="68" y="689" width="580" height="7" fill="#F7F5E4"/><rect x="68.5" y="690.5" width="15" height="14" rx="2" fill="#C3D3FD" stroke="#B6CAF7" stroke-width="1"/><path d="M78 694 L74.5 697.5 L78 701" stroke="#4D6185" stroke-width="2" fill="none"/><rect x="556.5" y="690.5" width="15" height="14" rx="2" fill="#C8D6FB" stroke="#B2C6F6" stroke-width="1"/><rect x="560" y="694" width="1" height="7" fill="#8FAEF5"/><rect x="562" y="694" width="1" height="7" fill="#8FAEF5"/><rect x="564" y="694" width="1" height="7" fill="#8FAEF5"/><rect x="566" y="694" width="1" height="7" fill="#8FAEF5"/><rect x="631.5" y="690.5" width="15" height="14" rx="2" fill="#C3D3FD" stroke="#B6CAF7" stroke-width="1"/><path d="M637 694 L640.5 697.5 L637 701" stroke="#4D6185" stroke-width="2" fill="none"/><rect x="648" y="689" width="17" height="17" fill="#ECE9D8"/><rect x="664" y="143" width="2" height="563" fill="#ECEADC"/><g clip-path="url(#cy)"><rect x="50" y="143" width="12" height="1" fill="#808080"/><text x="19.2" y="143" font-size="11" fill="#000" textLength="27.5" lengthAdjust="spacingAndGlyphs">100,0</text><rect x="57" y="154" width="5" height="1" fill="#C0C0C0"/><rect x="57" y="166" width="5" height="1" fill="#C0C0C0"/><rect x="57" y="177" width="5" height="1" fill="#C0C0C0"/><rect x="57" y="188" width="5" height="1" fill="#C0C0C0"/><rect x="50" y="199" width="12" height="1" fill="#808080"/><text x="19.2" y="199" font-size="11" fill="#000" textLength="27.5" lengthAdjust="spacingAndGlyphs">90,00</text><rect x="57" y="211" width="5" height="1" fill="#C0C0C0"/><rect x="57" y="222" width="5" height="1" fill="#C0C0C0"/><rect x="57" y="233" width="5" height="1" fill="#C0C0C0"/><rect x="57" y="244" width="5" height="1" fill="#C0C0C0"/><rect x="50" y="256" width="12" height="1" fill="#808080"/><text x="19.2" y="256" font-size="11" fill="#000" textLength="27.5" lengthAdjust="spacingAndGlyphs">80,00</text><rect x="57" y="267" width="5" height="1" fill="#C0C0C0"/><rect x="57" y="278" width="5" height="1" fill="#C0C0C0"/><rect x="57" y="289" width="5" height="1" fill="#C0C0C0"/><rect x="57" y="301" width="5" height="1" fill="#C0C0C0"/><rect x="50" y="312" width="12" height="1" fill="#808080"/><text x="19.2" y="312" font-size="11" fill="#000" textLength="27.5" lengthAdjust="spacingAndGlyphs">70,00</text><rect x="57" y="323" width="5" height="1" fill="#C0C0C0"/><rect x="57" y="334" width="5" height="1" fill="#C0C0C0"/><rect x="57" y="346" width="5" height="1" fill="#C0C0C0"/><rect x="57" y="357" width="5" height="1" fill="#C0C0C0"/><rect x="50" y="368" width="12" height="1" fill="#808080"/><text x="19.2" y="368" font-size="11" fill="#000" textLength="27.5" lengthAdjust="spacingAndGlyphs">60,00</text><rect x="57" y="379" width="5" height="1" fill="#C0C0C0"/><rect x="57" y="391" width="5" height="1" fill="#C0C0C0"/><rect x="57" y="402" width="5" height="1" fill="#C0C0C0"/><rect x="57" y="413" width="5" height="1" fill="#C0C0C0"/><rect x="50" y="425" width="12" height="1" fill="#808080"/><text x="19.2" y="425" font-size="11" fill="#000" textLength="27.5" lengthAdjust="spacingAndGlyphs">50,00</text><rect x="57" y="436" width="5" height="1" fill="#C0C0C0"/><rect x="57" y="447" width="5" height="1" fill="#C0C0C0"/><rect x="57" y="458" width="5" height="1" fill="#C0C0C0"/><rect x="57" y="470" width="5" height="1" fill="#C0C0C0"/><rect x="50" y="481" width="12" height="1" fill="#808080"/><text x="19.2" y="481" font-size="11" fill="#000" textLength="27.5" lengthAdjust="spacingAndGlyphs">40,00</text><rect x="57" y="492" width="5" height="1" fill="#C0C0C0"/><rect x="57" y="503" width="5" height="1" fill="#C0C0C0"/><rect x="57" y="515" width="5" height="1" fill="#C0C0C0"/><rect x="57" y="526" width="5" height="1" fill="#C0C0C0"/><rect x="50" y="537" width="12" height="1" fill="#808080"/><text x="19.2" y="537" font-size="11" fill="#000" textLength="27.5" lengthAdjust="spacingAndGlyphs">30,00</text><rect x="57" y="548" width="5" height="1" fill="#C0C0C0"/><rect x="57" y="560" width="5" height="1" fill="#C0C0C0"/><rect x="57" y="571" width="5" height="1" fill="#C0C0C0"/><rect x="57" y="582" width="5" height="1" fill="#C0C0C0"/><rect x="50" y="593" width="12" height="1" fill="#808080"/><text x="19.2" y="593" font-size="11" fill="#000" textLength="27.5" lengthAdjust="spacingAndGlyphs">20,00</text><rect x="57" y="605" width="5" height="1" fill="#C0C0C0"/><rect x="57" y="616" width="5" height="1" fill="#C0C0C0"/><rect x="57" y="627" width="5" height="1" fill="#C0C0C0"/><rect x="57" y="638" width="5" height="1" fill="#C0C0C0"/><rect x="50" y="650" width="12" height="1" fill="#808080"/><text x="19.2" y="650" font-size="11" fill="#000" textLength="27.5" lengthAdjust="spacingAndGlyphs">10,00</text><rect x="57" y="661" width="5" height="1" fill="#C0C0C0"/><rect x="57" y="672" width="5" height="1" fill="#C0C0C0"/><rect x="57" y="683" width="5" height="1" fill="#C0C0C0"/><rect x="57" y="695" width="5" height="1" fill="#C0C0C0"/><rect x="50" y="706" width="12" height="1" fill="#808080"/><text x="19.2" y="706" font-size="11" fill="#000" textLength="27.5" lengthAdjust="spacingAndGlyphs">0,000</text></g><rect x="68" y="712" width="1" height="4" fill="#C0C0C0"/><rect x="79" y="712" width="1" height="4" fill="#C0C0C0"/><rect x="91" y="712" width="1" height="4" fill="#C0C0C0"/><rect x="102" y="712" width="1" height="9" fill="#808080"/><rect x="113" y="712" width="1" height="4" fill="#C0C0C0"/><rect x="124" y="712" width="1" height="4" fill="#C0C0C0"/><rect x="136" y="712" width="1" height="4" fill="#C0C0C0"/><rect x="147" y="712" width="1" height="4" fill="#C0C0C0"/><rect x="158" y="712" width="1" height="9" fill="#808080"/><rect x="169" y="712" width="1" height="4" fill="#C0C0C0"/><rect x="181" y="712" width="1" height="4" fill="#C0C0C0"/><rect x="192" y="712" width="1" height="4" fill="#C0C0C0"/><rect x="203" y="712" width="1" height="4" fill="#C0C0C0"/><rect x="214" y="712" width="1" height="9" fill="#808080"/><rect x="226" y="712" width="1" height="4" fill="#C0C0C0"/><rect x="237" y="712" width="1" height="4" fill="#C0C0C0"/><rect x="248" y="712" width="1" height="4" fill="#C0C0C0"/><rect x="259" y="712" width="1" height="4" fill="#C0C0C0"/><rect x="271" y="712" width="1" height="9" fill="#808080"/><rect x="282" y="712" width="1" height="4" fill="#C0C0C0"/><rect x="293" y="712" width="1" height="4" fill="#C0C0C0"/><rect x="305" y="712" width="1" height="4" fill="#C0C0C0"/><rect x="316" y="712" width="1" height="4" fill="#C0C0C0"/><rect x="327" y="712" width="1" height="9" fill="#808080"/><rect x="338" y="712" width="1" height="4" fill="#C0C0C0"/><rect x="350" y="712" width="1" height="4" fill="#C0C0C0"/><rect x="361" y="712" width="1" height="4" fill="#C0C0C0"/><rect x="372" y="712" width="1" height="4" fill="#C0C0C0"/><rect x="383" y="712" width="1" height="9" fill="#808080"/><rect x="395" y="712" width="1" height="4" fill="#C0C0C0"/><rect x="406" y="712" width="1" height="4" fill="#C0C0C0"/><rect x="417" y="712" width="1" height="4" fill="#C0C0C0"/><rect x="428" y="712" width="1" height="4" fill="#C0C0C0"/><rect x="440" y="712" width="1" height="9" fill="#808080"/><rect x="451" y="712" width="1" height="4" fill="#C0C0C0"/><rect x="462" y="712" width="1" height="4" fill="#C0C0C0"/><rect x="473" y="712" width="1" height="4" fill="#C0C0C0"/><rect x="485" y="712" width="1" height="4" fill="#C0C0C0"/><rect x="496" y="712" width="1" height="9" fill="#808080"/><rect x="507" y="712" width="1" height="4" fill="#C0C0C0"/><rect x="518" y="712" width="1" height="4" fill="#C0C0C0"/><rect x="530" y="712" width="1" height="4" fill="#C0C0C0"/><rect x="541" y="712" width="1" height="4" fill="#C0C0C0"/><rect x="552" y="712" width="1" height="9" fill="#808080"/><rect x="563" y="712" width="1" height="4" fill="#C0C0C0"/><rect x="575" y="712" width="1" height="4" fill="#C0C0C0"/><rect x="586" y="712" width="1" height="4" fill="#C0C0C0"/><rect x="597" y="712" width="1" height="4" fill="#C0C0C0"/><rect x="609" y="712" width="1" height="9" fill="#808080"/><rect x="620" y="712" width="1" height="4" fill="#C0C0C0"/><rect x="631" y="712" width="1" height="4" fill="#C0C0C0"/><rect x="642" y="712" width="1" height="4" fill="#C0C0C0"/><text x="253.6" y="730.0" font-size="11" fill="#000" text-anchor="middle">2</text><text x="253.6" y="738.6" font-size="11" fill="#000" text-anchor="middle">0</text><text x="253.6" y="747.2" font-size="11" fill="#000" text-anchor="middle">0</text><text x="253.6" y="755.8" font-size="11" fill="#000" text-anchor="middle">4</text><text x="377.6" y="730.0" font-size="11" fill="#000" text-anchor="middle">2</text><text x="377.6" y="738.6" font-size="11" fill="#000" text-anchor="middle">0</text><text x="377.6" y="747.2" font-size="11" fill="#000" text-anchor="middle">0</text><text x="377.6" y="755.8" font-size="11" fill="#000" text-anchor="middle">5</text><text x="478.7" y="730.0" font-size="11" fill="#000" text-anchor="middle">2</text><text x="478.7" y="738.6" font-size="11" fill="#000" text-anchor="middle">0</text><text x="478.7" y="747.2" font-size="11" fill="#000" text-anchor="middle">0</text><text x="478.7" y="755.8" font-size="11" fill="#000" text-anchor="middle">6</text><text x="17.5" y="723" font-size="11" fill="#000" textLength="28.1" lengthAdjust="spacingAndGlyphs">Value</text><text x="17.6" y="735" font-size="11" fill="#000" textLength="15.0" lengthAdjust="spacingAndGlyphs">(%)</text><text x="41.5" y="756" font-size="11" fill="#000" textLength="23.1" lengthAdjust="spacingAndGlyphs">Year</text></svg></body></html>
